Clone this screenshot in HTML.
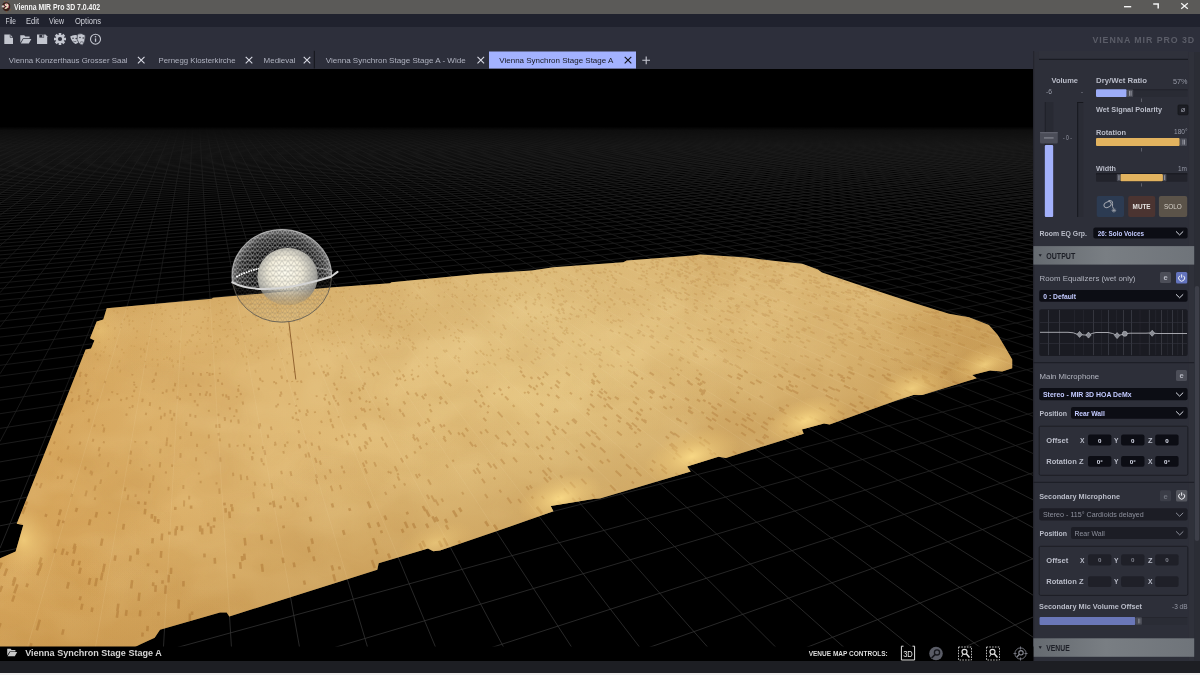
<!DOCTYPE html>
<html><head><meta charset="utf-8"><title>Vienna MIR Pro 3D</title>
<style>
*{box-sizing:border-box;margin:0;padding:0}
html,body{width:1200px;height:675px;overflow:hidden;background:#000}
body{font-family:"Liberation Sans",sans-serif;position:relative;color:#c9ccd6}
.abs{position:absolute}
.t{position:absolute;white-space:nowrap;line-height:1}
#titlebar{left:0;top:0;width:1200px;height:14px;background:#5b5a58}
#menubar{left:0;top:14px;width:1200px;height:12.8px;background:#20222e}
#toolbar{left:0;top:26.8px;width:1200px;height:25.7px;background:#2d2f3b}
#tabbar{left:0;top:52px;width:1034px;height:16.5px;background:#2d2f3b}
#panel{left:1033.4px;top:52px;width:166.6px;height:608.5px;background:#2d2f39}
#bottombar{left:0;top:660.5px;width:1200px;height:12.5px;background:#1d1e23}
#bottomline{left:0;top:673px;width:1200px;height:2px;background:#f0f0f0}
.lbl{font-size:7.6px;font-weight:bold;color:#b9bcc8}
.dd{position:absolute;background:#0c0d14;border-radius:2px}
.dd .t{font-size:7.4px;font-weight:bold;color:#c3caff;top:3px}
.fld{position:absolute;background:#0c0d14;border-radius:2px;width:23.3px;height:11.2px;font-size:7px;font-weight:bold;color:#dfe2f0;text-align:center;line-height:11.5px}
.hdr{position:absolute;left:1033.4px;width:160.6px;height:18.5px;background:linear-gradient(90deg,#686c74,#7b7f86 50%,#72767e)}
.hdr .t{font-size:8.2px;font-weight:bold;color:#1d1f27;left:13px;top:5.8px;letter-spacing:0.2px}
.btn{position:absolute;border-radius:1.5px}
</style></head><body>
<svg id="scene" width="1034" height="592" viewBox="0 68.5 1034 592" style="position:absolute;left:0;top:68.5px">
<defs>
<linearGradient id="fog" x1="0" y1="0" x2="0" y2="1" gradientUnits="userSpaceOnUse" >
</linearGradient>
<linearGradient id="fogg" gradientUnits="userSpaceOnUse" x1="0" y1="120" x2="0" y2="620">
<stop offset="0" stop-color="#000" stop-opacity="1"/><stop offset="0.012" stop-color="#000" stop-opacity="1"/><stop offset="0.02" stop-color="#000" stop-opacity="0.72"/><stop offset="0.05" stop-color="#000" stop-opacity="0.5"/><stop offset="0.09" stop-color="#000" stop-opacity="0.42"/><stop offset="0.16" stop-color="#000" stop-opacity="0.4"/><stop offset="0.36" stop-color="#000" stop-opacity="0.45"/><stop offset="0.52" stop-color="#000" stop-opacity="0.42"/><stop offset="0.68" stop-color="#000" stop-opacity="0.28"/><stop offset="0.84" stop-color="#000" stop-opacity="0.1"/><stop offset="1" stop-color="#000" stop-opacity="0"/>
</linearGradient>
<linearGradient id="wood" gradientUnits="userSpaceOnUse" x1="60" y1="560" x2="980" y2="300">
<stop offset="0" stop-color="#daaa60"/><stop offset="0.25" stop-color="#dfb874"/><stop offset="0.55" stop-color="#e4c584"/><stop offset="0.8" stop-color="#dfbc7a"/><stop offset="1" stop-color="#d6af6a"/>
</linearGradient>
<linearGradient id="edgeB" gradientUnits="userSpaceOnUse" x1="583" y1="502" x2="546" y2="387"><stop offset="0" stop-color="#b07c34" stop-opacity="0.34"/><stop offset="0.5" stop-color="#b07c34" stop-opacity="0.15"/><stop offset="1" stop-color="#b07c34" stop-opacity="0"/></linearGradient>
<linearGradient id="edgeT" gradientUnits="userSpaceOnUse" x1="400" y1="281" x2="406" y2="345"><stop offset="0" stop-color="#b07c34" stop-opacity="0.14"/><stop offset="1" stop-color="#b07c34" stop-opacity="0"/></linearGradient>
<radialGradient id="glow"><stop offset="0" stop-color="#ffe08a" stop-opacity="0.85"/><stop offset="0.5" stop-color="#f6d27e" stop-opacity="0.4"/><stop offset="1" stop-color="#f0c874" stop-opacity="0"/></radialGradient>
<radialGradient id="shade"><stop offset="0" stop-color="#b98338" stop-opacity="0.5"/><stop offset="1" stop-color="#b98338" stop-opacity="0"/></radialGradient>
<filter id="blot" x="0" y="0" width="100%" height="100%" color-interpolation-filters="sRGB"><feTurbulence type="fractalNoise" baseFrequency="0.012 0.02" numOctaves="3" seed="4"/><feColorMatrix type="matrix" values="0 0 0 0 0.62  0 0 0 0 0.38  0 0 0 0 0.12  1.6 0 0 0 -0.62"/></filter>
<filter id="blot2" x="0" y="0" width="100%" height="100%" color-interpolation-filters="sRGB"><feTurbulence type="fractalNoise" baseFrequency="0.02 0.03" numOctaves="2" seed="11"/><feColorMatrix type="matrix" values="0 0 0 0 1  0 0 0 0 0.92  0 0 0 0 0.7  0 1.5 0 0 -0.6"/></filter>
<filter id="soft"><feGaussianBlur stdDeviation="0.5"/></filter>
<clipPath id="fclip"><polygon points="106.7,307.8 211.7,298.3 213.0,297.3 333.3,286.7 390.0,282.7 391.5,281.7 480.0,273.3 531.7,270.0 553.3,266.7 623.3,261.7 626.7,260.0 693.3,255.0 700.0,254.0 746.7,257.0 780.0,261.1 802.2,263.3 817.8,268.9 822.0,272.0 868.9,287.8 913.3,302.2 948.9,313.3 968.9,316.7 988.9,324.4 997.8,334.4 1004.4,345.6 1012.2,358.9 1012.2,367.8 1002.2,371.1 990.0,370.0 972.2,374.4 976.7,377.8 922.2,394.4 913.3,394.4 896.3,400.0 829.6,424.1 824.0,423.0 801.9,428.9 803.7,433.3 725.9,457.4 718.5,456.3 687.0,465.9 690.7,471.1 600.0,498.1 593.4,498.5 550.7,505.4 553.4,510.8 500.0,529.5 440.0,549.9 433.3,550.7 428.0,548.0 378.7,562.7 377.3,569.3 229.3,616.0 226.7,612.0 220.0,612.0 160.0,629.3 154.7,637.3 140.0,644.0 135.0,646.5 0.0,646.5 0.0,557.8 15.6,551.0 23.3,524.4 16.7,523.3 85.6,348.9 91.0,348.0 94.4,340.0 90.0,337.8 96.7,321.0 103.3,318.9"/></clipPath>
<radialGradient id="ball" cx="0.46" cy="0.42" r="0.6"><stop offset="0" stop-color="#fffdf0"/><stop offset="0.45" stop-color="#f3eedc"/><stop offset="0.8" stop-color="#b0afa8"/><stop offset="1" stop-color="#7e7e7c"/></radialGradient>
<radialGradient id="shell" cx="0.5" cy="0.5" r="0.5"><stop offset="0" stop-color="#aaa" stop-opacity="0.0"/><stop offset="0.6" stop-color="#aaa" stop-opacity="0.04"/><stop offset="0.86" stop-color="#bbb" stop-opacity="0.2"/><stop offset="1" stop-color="#ccc" stop-opacity="0.5"/></radialGradient>
<pattern id="mesh3" width="5" height="4.4" patternUnits="userSpaceOnUse"><path d="M0 0L5 0M0 0L2.5 4.4L5 0M0 4.4L5 4.4" stroke="#6e685c" stroke-width="0.5" fill="none"/></pattern>
<linearGradient id="bmg" gradientUnits="userSpaceOnUse" x1="0" y1="287" x2="0" y2="304"><stop offset="0" stop-color="#fff"/><stop offset="1" stop-color="#fff" stop-opacity="0.2"/></linearGradient>
<mask id="ballmask" maskUnits="userSpaceOnUse" x="250" y="240" width="80" height="80"><rect x="250" y="240" width="80" height="80" fill="url(#bmg)"/></mask>
<pattern id="mesh2" width="6" height="5.2" patternUnits="userSpaceOnUse"><path d="M0 0L6 0M0 0L3 5.2L6 0M0 5.2L6 5.2" stroke="#8a8a86" stroke-width="0.6" fill="none"/></pattern>
<pattern id="mesh" width="5" height="4.4" patternUnits="userSpaceOnUse"><path d="M0 0L5 0M0 0L2.5 4.4L5 0M0 4.4L5 4.4" stroke="#fff" stroke-width="0.5" fill="none"/></pattern>
<clipPath id="upclip"><path d="M225 281 L232.3 282 Q 262 296 331 276.5 L345 268 L345 220 L225 220 Z"/></clipPath><clipPath id="loclip"><path d="M225 281 L232.3 282 Q 262 296 331 276.5 L345 268 L345 330 L225 330 Z"/></clipPath><clipPath id="sclip"><ellipse cx="281.8" cy="275.4" rx="49.8" ry="46.3"/></clipPath>
</defs>
<rect x="0" y="60" width="1034" height="610" fill="#000"/>
<path d="M0.0 76.6L196.0 70.0M0.0 76.6L196.0 70.0M0.0 76.6L196.0 70.0M0.0 76.7L196.0 70.0M0.0 76.7L196.0 70.0M0.0 76.7L196.0 70.0M0.0 76.7L196.0 70.0M0.0 76.8L196.0 70.0M0.0 76.8L196.0 70.0M0.0 76.8L196.0 70.0M0.0 76.9L196.0 70.0M0.0 76.9L196.0 70.0M0.0 76.9L196.0 70.0M0.0 76.9L196.0 70.0M0.0 77.0L196.0 70.0M0.0 77.0L196.0 70.0M0.0 77.0L196.0 70.0M0.0 77.1L196.0 70.0M0.0 77.1L196.0 70.0M0.0 77.1L196.0 70.0M0.0 77.1L196.0 70.0M0.0 77.2L196.0 70.0M0.0 77.2L196.0 70.0M0.0 77.2L196.0 70.0M0.0 77.3L196.0 70.0M0.0 77.3L196.0 70.0M0.0 77.3L196.0 70.0M0.0 77.4L196.0 70.0M0.0 77.4L196.0 70.0M0.0 77.4L196.0 70.0M0.0 77.5L196.0 70.0M0.0 77.5L196.0 70.0M0.0 77.5L196.0 70.0M0.0 77.6L196.0 70.0M0.0 77.6L196.0 70.0M0.0 77.6L196.0 70.0M0.0 77.7L196.0 70.0M0.0 77.7L196.0 70.0M0.0 77.7L196.0 70.0M-0.0 77.8L196.0 70.0M0.0 77.8L196.0 70.0M-0.0 77.9L196.0 70.0M-0.0 77.9L196.0 70.0M0.0 77.9L196.0 70.0M0.0 78.0L196.0 70.0M0.0 78.0L196.0 70.0M0.0 78.0L196.0 70.0M0.0 78.1L196.0 70.0M0.0 78.1L196.0 70.0M0.0 78.2L196.0 70.0M0.0 78.2L196.0 70.0M0.0 78.2L196.0 70.0M0.0 78.3L196.0 70.0M0.0 78.3L196.0 70.0M-0.0 78.4L196.0 70.0M-0.0 78.4L196.0 70.0M0.0 78.5L196.0 70.0M-0.0 78.5L196.0 70.0M0.0 78.5L196.0 70.0M0.0 78.6L196.0 70.0M0.0 78.6L196.0 70.0M0.0 78.7L196.0 70.0M0.0 78.7L196.0 70.0M0.0 78.8L196.0 70.0M0.0 78.8L196.0 70.0M0.0 78.9L196.0 70.0M0.0 78.9L196.0 70.0M0.0 79.0L196.0 70.0M0.0 79.0L196.0 70.0M0.0 79.1L196.0 70.0M0.0 79.1L196.0 70.0M0.0 79.2L196.0 70.0M0.0 79.2L196.0 70.0M0.0 79.3L196.0 70.0M0.0 79.3L196.0 70.0M0.0 79.4L196.0 70.0M0.0 79.4L196.0 70.0M0.0 79.5L196.0 70.0M0.0 79.5L196.0 70.0M-0.0 79.6L196.0 70.0M0.0 79.6L196.0 70.0M0.0 79.7L196.0 70.0M0.0 79.7L196.0 70.0M0.0 79.8L196.0 70.0M0.0 79.9L196.0 70.0M0.0 79.9L196.0 70.0M0.0 80.0L196.0 70.0M0.0 80.0L196.0 70.0M-0.0 80.1L196.0 70.0M0.0 80.2L196.0 70.0M0.0 80.2L196.0 70.0M0.0 80.3L196.0 70.0M0.0 80.4L196.0 70.0M0.0 80.4L196.0 70.0M0.0 80.5L196.0 70.0M0.0 80.5L196.0 70.0M0.0 80.6L196.0 70.0M0.0 80.7L196.0 70.0M0.0 80.8L196.0 70.0M0.0 80.8L196.0 70.0M0.0 80.9L196.0 70.0M0.0 81.0L196.0 70.0M0.0 81.0L196.0 70.0M0.0 81.1L196.0 70.0M0.0 81.2L196.0 70.0M-0.0 81.3L196.0 70.0M0.0 81.3L196.0 70.0M0.0 81.4L196.0 70.0M0.0 81.5L196.0 70.0M-0.0 81.6L196.0 70.0M0.0 81.7L196.0 70.0M0.0 81.7L196.0 70.0M0.0 81.8L196.0 70.0M0.0 81.9L196.0 70.0M0.0 82.0L196.0 70.0M0.0 82.1L196.0 70.0M0.0 82.2L196.0 70.0M0.0 82.3L196.0 70.0M0.0 82.4L196.0 70.0M0.0 82.4L196.0 70.0M0.0 82.5L196.0 70.0M0.0 82.6L196.0 70.0M-0.0 82.7L196.0 70.0M0.0 82.8L196.0 70.0M0.0 82.9L196.0 70.0M0.0 83.0L196.0 70.0M0.0 83.1L196.0 70.0M0.0 83.2L196.0 70.0M0.0 83.3L196.0 70.0M0.0 83.5L196.0 70.0M0.0 83.6L196.0 70.0M0.0 83.7L196.0 70.0M0.0 83.8L196.0 70.0M0.0 83.9L196.0 70.0M0.0 84.0L196.0 70.0M0.0 84.1L196.0 70.0M0.0 84.3L196.0 70.0M0.0 84.4L196.0 70.0M0.0 84.5L196.0 70.0M0.0 84.6L196.0 70.0M-0.0 84.8L196.0 70.0M0.0 84.9L196.0 70.0M0.0 85.0L196.0 70.0M0.0 85.2L196.0 70.0M0.0 85.3L196.0 70.0M0.0 85.5L196.0 70.0M0.0 85.6L196.0 70.0M0.0 85.8L196.0 70.0M0.0 85.9L196.0 70.0M0.0 86.1L196.0 70.0M0.0 86.2L196.0 70.0M0.0 86.4L196.0 70.0M0.0 86.5L196.0 70.0M-0.0 86.7L196.0 70.0M0.0 86.9L196.0 70.0M0.0 87.0L196.0 70.0M-0.0 87.2L196.0 70.0M-0.0 87.4L196.0 70.0M-0.0 87.6L196.0 70.0M0.0 87.8L196.0 70.0M-0.0 88.0L196.0 70.0M0.0 88.2L196.0 70.0M0.0 88.4L196.0 70.0M0.0 88.6L196.0 70.0M0.0 88.8L196.0 70.0M0.0 89.0L196.0 70.0M0.0 89.2L196.0 70.0M0.0 89.4L196.0 70.0M0.0 89.7L196.0 70.0M0.0 89.9L196.0 70.0M0.0 90.1L196.0 70.0M0.0 90.4L196.0 70.0M0.0 90.6L196.0 70.0M0.0 90.9L196.0 70.0M0.0 91.2L196.0 70.0M0.0 91.4L196.0 70.0M0.0 91.7L196.0 70.0M0.0 92.0L196.0 70.0M0.0 92.3L196.0 70.0M0.0 92.6L196.0 70.0M0.0 92.9L196.0 70.0M0.0 93.2L196.0 70.0M0.0 93.6L196.0 70.0M0.0 93.9L196.0 70.0M0.0 94.3L196.0 70.0M0.0 94.6L196.0 70.0M0.0 95.0L196.0 70.0M0.0 95.4L196.0 70.0M0.0 95.8L196.0 70.0M0.0 96.2L196.0 70.0M0.0 96.6L196.0 70.0M0.0 97.0L196.0 70.0M0.0 97.5L196.0 70.0M0.0 97.9L196.0 70.0M0.0 98.4L196.0 70.0M0.0 98.9L196.0 70.0M0.0 99.4L196.0 70.0M0.0 99.9L196.0 70.0M0.0 100.5L196.0 70.0M0.0 101.1L196.0 70.0M0.0 101.7L196.0 70.0M0.0 102.3L196.0 70.0M0.0 102.9L196.0 70.0M0.0 103.6L196.0 70.0M0.0 104.3L196.0 70.0M0.0 105.0L196.0 70.0M0.0 105.7L196.0 70.0M0.0 106.5L196.0 70.0M0.0 107.4L196.0 70.0M0.0 108.2L196.0 70.0M0.0 109.1L196.0 70.0M0.0 110.1L196.0 70.0M0.0 111.0L196.0 70.0M0.0 112.1L196.0 70.0M0.0 113.2L196.0 70.0M0.0 114.3L196.0 70.0M0.0 115.5L196.0 70.0M0.0 116.8L196.0 70.0M0.0 118.2L196.0 70.0M0.0 119.6L196.0 70.0M0.0 121.2L196.0 70.0M0.0 122.8L196.0 70.0M0.0 124.5L196.0 70.0M0.0 126.4L196.0 70.0M196.0 70.0L0.0 128.3M196.0 70.0L0.0 130.5M196.0 70.0L0.0 132.7M196.0 70.0L0.0 135.2M196.0 70.0L0.0 137.9M196.0 70.0L0.0 140.8M196.0 70.0L0.0 143.9M196.0 70.0L0.0 147.3M196.0 70.0L0.0 151.1M196.0 70.0L-0.0 155.3M196.0 70.0L0.0 159.9M196.0 70.0L0.0 165.1M196.0 70.0L0.0 170.8M196.0 70.0L0.0 177.3M196.0 70.0L0.0 184.7M196.0 70.0L0.0 193.3M196.0 70.0L0.0 203.1M196.0 70.0L0.0 214.7M196.0 70.0L0.0 228.5M196.0 70.0L0.0 245.3M196.0 70.0L0.0 265.9M196.0 70.0L0.0 292.2M196.0 70.0L0.0 326.4M196.0 70.0L0.0 373.3M196.0 70.0L0.0 441.0M196.0 70.0L0.0 547.6M196.0 70.0L23.3 660.5M196.0 70.0L93.0 660.5M196.0 70.0L162.7 660.5M196.0 70.0L232.3 660.5M196.0 70.0L302.0 660.5M196.0 70.0L371.7 660.5M196.0 70.0L441.3 660.5M196.0 70.0L511.0 660.5M196.0 70.0L580.7 660.5M196.0 70.0L650.3 660.5M196.0 70.0L720.0 660.5M196.0 70.0L789.7 660.5M196.0 70.0L859.3 660.5M196.0 70.0L929.0 660.5M196.0 70.0L998.7 660.5M196.0 70.0L1033.4 636.9M196.0 70.0L1033.4 594.9M196.0 70.0L1033.4 558.8M196.0 70.0L1033.4 527.3M196.0 70.0L1033.4 499.6M196.0 70.0L1033.4 475.1M196.0 70.0L1033.4 453.2M196.0 70.0L1033.4 433.6M196.0 70.0L1033.4 415.9M196.0 70.0L1033.4 399.8M196.0 70.0L1033.4 385.2M196.0 70.0L1033.4 371.8M196.0 70.0L1033.4 359.5M196.0 70.0L1033.4 348.1M196.0 70.0L1033.4 337.6M196.0 70.0L1033.4 327.9M196.0 70.0L1033.4 318.9M196.0 70.0L1033.4 310.4M196.0 70.0L1033.4 302.6M196.0 70.0L1033.4 295.2M196.0 70.0L1033.4 288.3M196.0 70.0L1033.4 281.7M196.0 70.0L1033.4 275.6M196.0 70.0L1033.4 269.8M196.0 70.0L1033.4 264.3M196.0 70.0L1033.4 259.2M196.0 70.0L1033.4 254.3M196.0 70.0L1033.4 249.6M196.0 70.0L1033.4 245.2M196.0 70.0L1033.4 240.9M196.0 70.0L1033.4 236.9M196.0 70.0L1033.4 233.1M196.0 70.0L1033.4 229.4M196.0 70.0L1033.4 225.9M196.0 70.0L1033.4 222.6M196.0 70.0L1033.4 219.4M196.0 70.0L1033.4 216.3M196.0 70.0L1033.4 213.3M196.0 70.0L1033.4 210.5M196.0 70.0L1033.4 207.8M196.0 70.0L1033.4 205.1M196.0 70.0L1033.4 202.6M196.0 70.0L1033.4 200.2M196.0 70.0L1033.4 197.8M196.0 70.0L1033.4 195.6M196.0 70.0L1033.4 193.4M196.0 70.0L1033.4 191.3M196.0 70.0L1033.4 189.2M196.0 70.0L1033.4 187.3M196.0 70.0L1033.4 185.4M196.0 70.0L1033.4 183.5M196.0 70.0L1033.4 181.7M196.0 70.0L1033.4 180.0M196.0 70.0L1033.4 178.3M196.0 70.0L1033.4 176.7M196.0 70.0L1033.4 175.1M196.0 70.0L1033.4 173.6M196.0 70.0L1033.4 172.1M196.0 70.0L1033.4 170.6M196.0 70.0L1033.4 169.2M196.0 70.0L1033.4 167.9M196.0 70.0L1033.4 166.5M196.0 70.0L1033.4 165.2M196.0 70.0L1033.4 164.0M196.0 70.0L1033.4 162.8M196.0 70.0L1033.4 161.6M196.0 70.0L1033.4 160.4M196.0 70.0L1033.4 159.3M196.0 70.0L1033.4 158.1M196.0 70.0L1033.4 157.1M196.0 70.0L1033.4 156.0M196.0 70.0L1033.4 155.0M196.0 70.0L1033.4 154.0M196.0 70.0L1033.4 153.0M196.0 70.0L1033.4 152.0M196.0 70.0L1033.4 151.1M196.0 70.0L1033.4 150.2M196.0 70.0L1033.4 149.3M196.0 70.0L1033.4 148.4M196.0 70.0L1033.4 147.6M196.0 70.0L1033.4 146.7M196.0 70.0L1033.4 145.9M196.0 70.0L1033.4 145.1M196.0 70.0L1033.4 144.3M196.0 70.0L1033.4 143.5M196.0 70.0L1033.4 142.8M196.0 70.0L1033.4 142.0M196.0 70.0L1033.4 141.3M196.0 70.0L1033.4 140.6M196.0 70.0L1033.4 139.9M196.0 70.0L1033.4 139.2M196.0 70.0L1033.4 138.6M196.0 70.0L1033.4 137.9M196.0 70.0L1033.4 137.3M196.0 70.0L1033.4 136.6M196.0 70.0L1033.4 136.0M196.0 70.0L1033.4 135.4M196.0 70.0L1033.4 134.8M196.0 70.0L1033.4 134.2M196.0 70.0L1033.4 133.6M196.0 70.0L1033.4 133.1M196.0 70.0L1033.4 132.5M196.0 70.0L1033.4 132.0M196.0 70.0L1033.4 131.4M196.0 70.0L1033.4 130.9M196.0 70.0L1033.4 130.4M196.0 70.0L1033.4 129.9M196.0 70.0L1033.4 129.4M196.0 70.0L1033.4 128.9M196.0 70.0L1033.4 128.4M196.0 70.0L1033.4 127.9M196.0 70.0L1033.4 127.5M196.0 70.0L1033.4 127.0M196.0 70.0L1033.4 126.5M196.0 70.0L1033.4 126.1M196.0 70.0L1033.4 125.7M196.0 70.0L1033.4 125.2M196.0 70.0L1033.4 124.8M196.0 70.0L1033.4 124.4M196.0 70.0L1033.4 124.0M196.0 70.0L1033.4 123.6M196.0 70.0L1033.4 123.2M196.0 70.0L1033.4 122.8M196.0 70.0L1033.4 122.4M196.0 70.0L1033.4 122.0M196.0 70.0L1033.4 121.6M196.0 70.0L1033.4 121.2M196.0 70.0L1033.4 120.9M196.0 70.0L1033.4 120.5M196.0 70.0L1033.4 120.2M196.0 70.0L1033.4 119.8M196.0 70.0L1033.4 119.5M196.0 70.0L1033.4 119.1M196.0 70.0L1033.4 118.8M196.0 70.0L1033.4 118.4M196.0 70.0L1033.4 118.1M196.0 70.0L1033.4 117.8M196.0 70.0L1033.4 117.5M196.0 70.0L1033.4 117.2M196.0 70.0L1033.4 116.8M196.0 70.0L1033.4 116.5M196.0 70.0L1033.4 116.2M196.0 70.0L1033.4 115.9M196.0 70.0L1033.4 115.6M196.0 70.0L1033.4 115.3M196.0 70.0L1033.4 115.1M196.0 70.0L1033.4 114.8M196.0 70.0L1033.4 114.5M196.0 70.0L1033.4 114.2M196.0 70.0L1033.4 113.9M196.0 70.0L1033.4 113.7M196.0 70.0L1033.4 113.4M196.0 70.0L1033.4 113.1M196.0 70.0L1033.4 112.9M196.0 70.0L1033.4 112.6M196.0 70.0L1033.4 112.4M196.0 70.0L1033.4 112.1M196.0 70.0L1033.4 111.9M196.0 70.0L1033.4 111.6M196.0 70.0L1033.4 111.4M196.0 70.0L1033.4 111.1M196.0 70.0L1033.4 110.9M196.0 70.0L1033.4 110.7M196.0 70.0L1033.4 110.4M196.0 70.0L1033.4 110.2M196.0 70.0L1033.4 110.0M196.0 70.0L1033.4 109.8M196.0 70.0L1033.4 109.5M196.0 70.0L1033.4 109.3M196.0 70.0L1033.4 109.1M196.0 70.0L1033.4 108.9M196.0 70.0L1033.4 108.7M196.0 70.0L1033.4 108.5M196.0 70.0L1033.4 108.3M196.0 70.0L1033.4 108.1M196.0 70.0L1033.4 107.9M196.0 70.0L1033.4 107.7M196.0 70.0L1033.4 107.5M196.0 70.0L1033.4 107.3M196.0 70.0L1033.4 107.1M196.0 70.0L1033.4 106.9M196.0 70.0L1033.4 106.7M196.0 70.0L1033.4 106.5M196.0 70.0L1033.4 106.3M196.0 70.0L1033.4 106.1M196.0 70.0L1033.4 105.9M196.0 70.0L1033.4 105.8M196.0 70.0L1033.4 105.6M196.0 70.0L1033.4 105.4M196.0 70.0L1033.4 105.2M196.0 70.0L1033.4 105.0M196.0 70.0L1033.4 104.9M196.0 70.0L1033.4 104.7M196.0 70.0L1033.4 104.5M196.0 70.0L1033.4 104.4M196.0 70.0L1033.4 104.2M196.0 70.0L1033.4 104.0M196.0 70.0L1033.4 103.9M196.0 70.0L1033.4 103.7M196.0 70.0L1033.4 103.6M196.0 70.0L1033.4 103.4M196.0 70.0L1033.4 103.2M196.0 70.0L1033.4 103.1M196.0 70.0L1033.4 102.9M196.0 70.0L1033.4 102.8M196.0 70.0L1033.4 102.6M196.0 70.0L1033.4 102.5M196.0 70.0L1033.4 102.3M196.0 70.0L1033.4 102.2M196.0 70.0L1033.4 102.0M196.0 70.0L1033.4 101.9M196.0 70.0L1033.4 101.8M196.0 70.0L1033.4 101.6M196.0 70.0L1033.4 101.5M196.0 70.0L1033.4 101.3M196.0 70.0L1033.4 101.2M196.0 70.0L1033.4 101.1M196.0 70.0L1033.4 100.9M196.0 70.0L1033.4 100.8M196.0 70.0L1033.4 100.7M196.0 70.0L1033.4 100.5M196.0 70.0L1033.4 100.4M196.0 70.0L1033.4 100.3M196.0 70.0L1033.4 100.1M196.0 70.0L1033.4 100.0M196.0 70.0L1033.4 99.9M196.0 70.0L1033.4 99.8M196.0 70.0L1033.4 99.6M196.0 70.0L1033.4 99.5M196.0 70.0L1033.4 99.4M196.0 70.0L1033.4 99.3M196.0 70.0L1033.4 99.1M196.0 70.0L1033.4 99.0M196.0 70.0L1033.4 98.9M196.0 70.0L1033.4 98.8M196.0 70.0L1033.4 98.7M196.0 70.0L1033.4 98.6M196.0 70.0L1033.4 98.4M196.0 70.0L1033.4 98.3M196.0 70.0L1033.4 98.2M196.0 70.0L1033.4 98.1M196.0 70.0L1033.4 98.0M196.0 70.0L1033.4 97.9M196.0 70.0L1033.4 97.8M196.0 70.0L1033.4 97.7M196.0 70.0L1033.4 97.6M196.0 70.0L1033.4 97.5M196.0 70.0L1033.4 97.3M196.0 70.0L1033.4 97.2M196.0 70.0L1033.4 97.1M196.0 70.0L1033.4 97.0M196.0 70.0L1033.4 96.9M196.0 70.0L1033.4 96.8M196.0 70.0L1033.4 96.7M196.0 70.0L1033.4 96.6M196.0 70.0L1033.4 96.5M196.0 70.0L1033.4 96.4M196.0 70.0L1033.4 96.3M196.0 70.0L1033.4 96.2M196.0 70.0L1033.4 96.1M196.0 70.0L1033.4 96.0M196.0 70.0L1033.4 96.0M196.0 70.0L1033.4 95.9M196.0 70.0L1033.4 95.8M196.0 70.0L1033.4 95.7M196.0 70.0L1033.4 95.6M196.0 70.0L1033.4 95.5M196.0 70.0L1033.4 95.4M196.0 70.0L1033.4 95.3M196.0 70.0L1033.4 95.2M196.0 70.0L1033.4 95.1M196.0 70.0L1033.4 95.0M196.0 70.0L1033.4 94.9M196.0 70.0L1033.4 94.9M196.0 70.0L1033.4 94.8M196.0 70.0L1033.4 94.7M196.0 70.0L1033.4 94.6M196.0 70.0L1033.4 94.5M196.0 70.0L1033.4 94.4M196.0 70.0L1033.4 94.3M196.0 70.0L1033.4 94.3M196.0 70.0L1033.4 94.2M196.0 70.0L1033.4 94.1M196.0 70.0L1033.4 94.0M196.0 70.0L1033.4 93.9M196.0 70.0L1033.4 93.9M196.0 70.0L1033.4 93.8M196.0 70.0L1033.4 93.7M196.0 70.0L1033.4 93.6M196.0 70.0L1033.4 93.5M196.0 70.0L1033.4 93.5M196.0 70.0L1033.4 93.4M196.0 70.0L1033.4 93.3M196.0 70.0L1033.4 93.2M196.0 70.0L1033.4 93.2M196.0 70.0L1033.4 93.1M196.0 70.0L1033.4 93.0M196.0 70.0L1033.4 92.9M196.0 70.0L1033.4 92.9M196.0 70.0L1033.4 92.8M196.0 70.0L1033.4 92.7M196.0 70.0L1033.4 92.6M196.0 70.0L1033.4 92.6M196.0 70.0L1033.4 92.5M196.0 70.0L1033.4 92.4M196.0 70.0L1033.4 92.4M196.0 70.0L1033.4 92.3M196.0 70.0L1033.4 92.2M196.0 70.0L1033.4 92.1M196.0 70.0L1033.4 92.1M196.0 70.0L1033.4 92.0M196.0 70.0L1033.4 91.9M196.0 70.0L1033.4 91.9M196.0 70.0L1033.4 91.8M196.0 70.0L1033.4 91.7M196.0 70.0L1033.4 91.7M196.0 70.0L1033.4 91.6M196.0 70.0L1033.4 91.5M196.0 70.0L1033.4 91.5M196.0 70.0L1033.4 91.4M196.0 70.0L1033.4 91.3M196.0 70.0L1033.4 91.3M196.0 70.0L1033.4 91.2M196.0 70.0L1033.4 91.2M196.0 70.0L1033.4 91.1M196.0 70.0L1033.4 91.0M196.0 70.0L1033.4 91.0M196.0 70.0L1033.4 90.9M196.0 70.0L1033.4 90.8M196.0 70.0L1033.4 90.8M196.0 70.0L1033.4 90.7M196.0 70.0L1033.4 90.7M196.0 70.0L1033.4 90.6M196.0 70.0L1033.4 90.5M196.0 70.0L1033.4 90.5M196.0 70.0L1033.4 90.4M196.0 70.0L1033.4 90.4M196.0 70.0L1033.4 90.3M196.0 70.0L1033.4 90.2M196.0 70.0L1033.4 90.2M196.0 70.0L1033.4 90.1M196.0 70.0L1033.4 90.1M196.0 70.0L1033.4 90.0M196.0 70.0L1033.4 90.0M196.0 70.0L1033.4 89.9M196.0 70.0L1033.4 89.9M196.0 70.0L1033.4 89.8M196.0 70.0L1033.4 89.7M196.0 70.0L1033.4 89.7M196.0 70.0L1033.4 89.6M196.0 70.0L1033.4 89.6M196.0 70.0L1033.4 89.5M196.0 70.0L1033.4 89.5M196.0 70.0L1033.4 89.4M196.0 70.0L1033.4 89.4M196.0 70.0L1033.4 89.3M196.0 70.0L1033.4 89.3M196.0 70.0L1033.4 89.2M196.0 70.0L1033.4 89.2M196.0 70.0L1033.4 89.1M196.0 70.0L1033.4 89.1M196.0 70.0L1033.4 89.0M196.0 70.0L1033.4 89.0M196.0 70.0L1033.4 88.9M196.0 70.0L1033.4 88.9M196.0 70.0L1033.4 88.8M196.0 70.0L1033.4 88.8M196.0 70.0L1033.4 88.7M196.0 70.0L1033.4 88.7M196.0 70.0L1033.4 88.6M196.0 70.0L1033.4 88.6M196.0 70.0L1033.4 88.5M196.0 70.0L1033.4 88.5M196.0 70.0L1033.4 88.4M196.0 70.0L1033.4 88.4M196.0 70.0L1033.4 88.3M196.0 70.0L1033.4 88.3M196.0 70.0L1033.4 88.2M196.0 70.0L1033.4 88.2M196.0 70.0L1033.4 88.1M196.0 70.0L1033.4 88.1M196.0 70.0L1033.4 88.0M196.0 70.0L1033.4 88.0M196.0 70.0L1033.4 87.9M196.0 70.0L1033.4 87.9M196.0 70.0L1033.4 87.9M196.0 70.0L1033.4 87.8M196.0 70.0L1033.4 87.8M196.0 70.0L1033.4 87.7M196.0 70.0L1033.4 87.7M196.0 70.0L1033.4 87.6M196.0 70.0L1033.4 87.6M196.0 70.0L1033.4 87.5M196.0 70.0L1033.4 87.5M196.0 70.0L1033.4 87.5M1033.4 81.1L0.0 90.3M1033.4 81.1L0.0 90.3M1033.4 81.1L0.0 90.4M1033.4 81.2L0.0 90.4M1033.4 81.2L0.0 90.5M1033.4 81.2L0.0 90.5M1033.4 81.3L0.0 90.6M1033.4 81.3L0.0 90.6M1033.4 81.3L0.0 90.7M1033.4 81.3L0.0 90.7M1033.4 81.4L0.0 90.8M1033.4 81.4L0.0 90.8M1033.4 81.4L0.0 90.9M1033.4 81.5L0.0 90.9M1033.4 81.5L0.0 91.0M1033.4 81.5L0.0 91.0M1033.4 81.5L0.0 91.1M1033.4 81.6L0.0 91.2M1033.4 81.6L0.0 91.2M1033.4 81.6L0.0 91.3M1033.4 81.7L0.0 91.3M1033.4 81.7L0.0 91.4M1033.4 81.7L0.0 91.4M1033.4 81.7L0.0 91.5M1033.4 81.8L0.0 91.5M1033.4 81.8L0.0 91.6M1033.4 81.8L0.0 91.6M1033.4 81.9L0.0 91.7M1033.4 81.9L0.0 91.8M1033.4 81.9L0.0 91.8M1033.4 82.0L0.0 91.9M1033.4 82.0L0.0 91.9M1033.4 82.0L0.0 92.0M1033.4 82.1L0.0 92.0M1033.4 82.1L0.0 92.1M1033.4 82.1L0.0 92.2M1033.4 82.2L0.0 92.2M1033.4 82.2L0.0 92.3M1033.4 82.2L0.0 92.3M1033.4 82.2L0.0 92.4M1033.4 82.3L0.0 92.5M1033.4 82.3L0.0 92.5M1033.4 82.3L0.0 92.6M1033.4 82.4L0.0 92.6M1033.4 82.4L0.0 92.7M1033.4 82.4L0.0 92.8M1033.4 82.5L0.0 92.8M1033.4 82.5L0.0 92.9M1033.4 82.6L0.0 93.0M1033.4 82.6L0.0 93.0M1033.4 82.6L0.0 93.1M1033.4 82.7L0.0 93.1M1033.4 82.7L0.0 93.2M1033.4 82.7L0.0 93.3M1033.4 82.8L0.0 93.3M1033.4 82.8L0.0 93.4M1033.4 82.8L0.0 93.5M1033.4 82.9L0.0 93.5M1033.4 82.9L0.0 93.6M1033.4 82.9L0.0 93.7M1033.4 83.0L0.0 93.7M1033.4 83.0L0.0 93.8M1033.4 83.1L0.0 93.9M1033.4 83.1L0.0 93.9M1033.4 83.1L0.0 94.0M1033.4 83.2L0.0 94.1M1033.4 83.2L0.0 94.1M1033.4 83.2L0.0 94.2M1033.4 83.3L0.0 94.3M1033.4 83.3L0.0 94.4M1033.4 83.4L0.0 94.4M1033.4 83.4L0.0 94.5M1033.4 83.4L0.0 94.6M1033.4 83.5L0.0 94.6M1033.4 83.5L0.0 94.7M1033.4 83.6L0.0 94.8M1033.4 83.6L0.0 94.9M1033.4 83.6L0.0 94.9M1033.4 83.7L0.0 95.0M1033.4 83.7L0.0 95.1M1033.4 83.8L0.0 95.2M1033.4 83.8L0.0 95.2M1033.4 83.8L0.0 95.3M1033.4 83.9L0.0 95.4M1033.4 83.9L0.0 95.5M1033.4 84.0L0.0 95.6M1033.4 84.0L0.0 95.6M1033.4 84.1L0.0 95.7M1033.4 84.1L0.0 95.8M1033.4 84.1L0.0 95.9M1033.4 84.2L0.0 95.9M1033.4 84.2L0.0 96.0M1033.4 84.3L0.0 96.1M1033.4 84.3L0.0 96.2M1033.4 84.4L0.0 96.3M1033.4 84.4L0.0 96.4M1033.4 84.5L0.0 96.4M1033.4 84.5L0.0 96.5M1033.4 84.5L0.0 96.6M1033.4 84.6L0.0 96.7M1033.4 84.6L0.0 96.8M1033.4 84.7L0.0 96.9M1033.4 84.7L0.0 96.9M1033.4 84.8L0.0 97.0M1033.4 84.8L0.0 97.1M1033.4 84.9L0.0 97.2M1033.4 84.9L0.0 97.3M1033.4 85.0L0.0 97.4M1033.4 85.0L0.0 97.5M1033.4 85.1L0.0 97.6M1033.4 85.1L0.0 97.7M1033.4 85.2L0.0 97.8M1033.4 85.2L0.0 97.8M1033.4 85.3L0.0 97.9M1033.4 85.3L0.0 98.0M1033.4 85.4L0.0 98.1M1033.4 85.4L0.0 98.2M1033.4 85.5L0.0 98.3M1033.4 85.5L0.0 98.4M1033.4 85.6L0.0 98.5M1033.4 85.6L0.0 98.6M1033.4 85.7L0.0 98.7M1033.4 85.7L0.0 98.8M1033.4 85.8L0.0 98.9M1033.4 85.9L0.0 99.0M1033.4 85.9L0.0 99.1M1033.4 86.0L0.0 99.2M1033.4 86.0L0.0 99.3M1033.4 86.1L0.0 99.4M1033.4 86.1L0.0 99.5M1033.4 86.2L0.0 99.6M1033.4 86.3L0.0 99.7M1033.4 86.3L0.0 99.8M1033.4 86.4L0.0 99.9M1033.4 86.4L0.0 100.0M1033.4 86.5L0.0 100.2M1033.4 86.5L0.0 100.3M1033.4 86.6L0.0 100.4M1033.4 86.7L0.0 100.5M1033.4 86.7L0.0 100.6M1033.4 86.8L0.0 100.7M1033.4 86.9L0.0 100.8M1033.4 86.9L0.0 100.9M1033.4 87.0L0.0 101.1M1033.4 87.0L0.0 101.2M1033.4 87.1L0.0 101.3M1033.4 87.2L0.0 101.4M1033.4 87.2L0.0 101.5M1033.4 87.3L0.0 101.6M1033.4 87.4L0.0 101.8M1033.4 87.4L0.0 101.9M1033.4 87.5L0.0 102.0M1033.4 87.6L0.0 102.1M1033.4 87.6L0.0 102.2M1033.4 87.7L0.0 102.4M1033.4 87.8L0.0 102.5M1033.4 87.8L0.0 102.6M1033.4 87.9L0.0 102.8M1033.4 88.0L0.0 102.9M1033.4 88.0L0.0 103.0M1033.4 88.1L0.0 103.1M1033.4 88.2L0.0 103.3M1033.4 88.3L0.0 103.4M1033.4 88.3L0.0 103.5M1033.4 88.4L0.0 103.7M1033.4 88.5L0.0 103.8M1033.4 88.6L0.0 104.0M1033.4 88.6L0.0 104.1M1033.4 88.7L0.0 104.2M1033.4 88.8L0.0 104.4M1033.4 88.9L0.0 104.5M1033.4 88.9L0.0 104.7M1033.4 89.0L0.0 104.8M1033.4 89.1L0.0 104.9M1033.4 89.2L0.0 105.1M1033.4 89.3L0.0 105.2M1033.4 89.3L0.0 105.4M1033.4 89.4L0.0 105.5M1033.4 89.5L0.0 105.7M1033.4 89.6L0.0 105.8M1033.4 89.7L0.0 106.0M1033.4 89.8L0.0 106.2M1033.4 89.9L0.0 106.3M1033.4 89.9L0.0 106.5M1033.4 90.0L0.0 106.6M1033.4 90.1L0.0 106.8M1033.4 90.2L0.0 106.9M1033.4 90.3L0.0 107.1M1033.4 90.4L0.0 107.3M1033.4 90.5L0.0 107.4M1033.4 90.6L0.0 107.6M1033.4 90.7L0.0 107.8M1033.4 90.8L0.0 108.0M1033.4 90.8L0.0 108.1M1033.4 90.9L0.0 108.3M1033.4 91.0L0.0 108.5M1033.4 91.1L0.0 108.7M1033.4 91.2L0.0 108.8M1033.4 91.3L0.0 109.0M1033.4 91.4L0.0 109.2M1033.4 91.5L0.0 109.4M1033.4 91.6L0.0 109.6M1033.4 91.7L0.0 109.8M1033.4 91.8L0.0 110.0M1033.4 91.9L0.0 110.1M1033.4 92.1L0.0 110.3M1033.4 92.2L0.0 110.5M1033.4 92.3L0.0 110.7M1033.4 92.4L0.0 110.9M1033.4 92.5L0.0 111.1M1033.4 92.6L0.0 111.3M1033.4 92.7L0.0 111.5M1033.4 92.8L0.0 111.7M1033.4 92.9L0.0 112.0M1033.4 93.1L0.0 112.2M1033.4 93.2L0.0 112.4M1033.4 93.3L0.0 112.6M1033.4 93.4L0.0 112.8M1033.4 93.5L0.0 113.0M1033.4 93.7L0.0 113.3M1033.4 93.8L0.0 113.5M1033.4 93.9L0.0 113.7M1033.4 94.0L0.0 113.9M1033.4 94.1L0.0 114.2M1033.4 94.3L0.0 114.4M1033.4 94.4L0.0 114.6M1033.4 94.5L0.0 114.9M1033.4 94.7L0.0 115.1M1033.4 94.8L0.0 115.4M1033.4 94.9L0.0 115.6M1033.4 95.1L0.0 115.9M1033.4 95.2L0.0 116.1M1033.4 95.4L0.0 116.4M1033.4 95.5L0.0 116.6M1033.4 95.6L0.0 116.9M1033.4 95.8L0.0 117.2M1033.4 95.9L0.0 117.4M1033.4 96.1L0.0 117.7M1033.4 96.2L0.0 118.0M1033.4 96.4L0.0 118.2M1033.4 96.5L0.0 118.5M1033.4 96.7L0.0 118.8M1033.4 96.8L0.0 119.1M1033.4 97.0L0.0 119.4M1033.4 97.2L0.0 119.7M1033.4 97.3L0.0 120.0M1033.4 97.5L0.0 120.3M1033.4 97.7L0.0 120.6M1033.4 97.8L0.0 120.9M1033.4 98.0L0.0 121.2M1033.4 98.2L0.0 121.5M1033.4 98.3L0.0 121.8M1033.4 98.5L0.0 122.2M1033.4 98.7L0.0 122.5M1033.4 98.9L0.0 122.8M1033.4 99.1L0.0 123.2M1033.4 99.2L0.0 123.5M1033.4 99.4L0.0 123.8M1033.4 99.6L0.0 124.2M1033.4 99.8L0.0 124.5M1033.4 100.0L0.0 124.9M1033.4 100.2L0.0 125.3M1033.4 100.4L0.0 125.6M1033.4 100.6L0.0 126.0M1033.4 100.8L0.0 126.4M1033.4 101.0L0.0 126.8M1033.4 101.2L0.0 127.1M1033.4 101.5L0.0 127.5M1033.4 101.7L0.0 127.9M1033.4 101.9L0.0 128.3M1033.4 102.1L0.0 128.8M1033.4 102.3L0.0 129.2M1033.4 102.6L0.0 129.6M1033.4 102.8L0.0 130.0M1033.4 103.1L0.0 130.4M1033.4 103.3L0.0 130.9M1033.4 103.5L0.0 131.3M1033.4 103.8L0.0 131.8M1033.4 104.0L0.0 132.2M1033.4 104.3L0.0 132.7M1033.4 104.5L0.0 133.2M1033.4 104.8L0.0 133.7M1033.4 105.1L0.0 134.2M1033.4 105.4L0.0 134.7M1033.4 105.6L0.0 135.2M1033.4 105.9L0.0 135.7M1033.4 106.2L0.0 136.2M1033.4 106.5L0.0 136.7M1033.4 106.8L0.0 137.3M1033.4 107.1L0.0 137.8M1033.4 107.4L0.0 138.4M1033.4 107.7L0.0 138.9M1033.4 108.0L0.0 139.5M1033.4 108.3L0.0 140.1M1033.4 108.6L0.0 140.7M1033.4 109.0L0.0 141.3M1033.4 109.3L0.0 141.9M1033.4 109.6L0.0 142.5M1033.4 110.0L0.0 143.1M1033.4 110.3L0.0 143.8M1033.4 110.7L0.0 144.4M1033.4 111.1L0.0 145.1M1033.4 111.4L0.0 145.8M1033.4 111.8L0.0 146.5M1033.4 112.2L0.0 147.2M1033.4 112.6L0.0 147.9M1033.4 113.0L0.0 148.6M1033.4 113.4L0.0 149.4M1033.4 113.8L0.0 150.1M1033.4 114.2L0.0 150.9M1033.4 114.7L0.0 151.7M1033.4 115.1L0.0 152.5M1033.4 115.6L0.0 153.3M1033.4 116.0L0.0 154.2M1033.4 116.5L0.0 155.0M1033.4 117.0L0.0 155.9M1033.4 117.5L0.0 156.8M1033.4 118.0L0.0 157.7M1033.4 118.5L0.0 158.6M1033.4 119.0L0.0 159.6M1033.4 119.5L0.0 160.6M1033.4 120.1L0.0 161.5M1033.4 120.6L0.0 162.6M1033.4 121.2L0.0 163.6M1033.4 121.8L0.0 164.7M1033.4 122.3L0.0 165.7M1033.4 122.9L0.0 166.8M1033.4 123.6L0.0 168.0M1033.4 124.2L0.0 169.1M1033.4 124.9L0.0 170.3M1033.4 125.5L0.0 171.5M1033.4 126.2L0.0 172.8M1033.4 126.9L0.0 174.1M1033.4 127.6L0.0 175.4M1033.4 128.4L0.0 176.7M1033.4 129.1L0.0 178.1M1033.4 129.9L0.0 179.5M1033.4 130.7L0.0 181.0M1033.4 131.5L0.0 182.5M1033.4 132.3L0.0 184.0M1033.4 133.2L0.0 185.6M1033.4 134.1L0.0 187.2M1033.4 135.0L0.0 188.9M1033.4 135.9L0.0 190.6M1033.4 136.9L0.0 192.3M1033.4 137.9L0.0 194.2M1033.4 138.9L0.0 196.0M1033.4 140.0L0.0 198.0M1033.4 141.0L0.0 199.9M1033.4 142.2L0.0 202.0M1033.4 143.3L0.0 204.1M1033.4 144.5L0.0 206.3M1033.4 145.8L0.0 208.6M1033.4 147.0L0.0 210.9M1033.4 148.3L0.0 213.3M1033.4 149.7L0.0 215.8M1033.4 151.1L0.0 218.4M1033.4 152.6L0.0 221.1M1033.4 154.1L0.0 223.8M1033.4 155.7L0.0 226.7M1033.4 157.3L0.0 229.7M1033.4 159.0L0.0 232.8M1033.4 160.8L0.0 236.1M1033.4 162.6L0.0 239.4M1033.4 164.5L0.0 242.9M1033.4 166.5L0.0 246.6M1033.4 168.6L0.0 250.4M1033.4 170.8L0.0 254.4M1033.4 173.1L0.0 258.5M1033.4 175.4L0.0 262.9M1033.4 177.9L0.0 267.4M1033.4 180.5L0.0 272.2M1033.4 183.3L0.0 277.2M1033.4 186.2L0.0 282.5M1033.4 189.2L0.0 288.0M1033.4 192.4L0.0 293.8M1033.4 195.7L0.0 300.0M1033.4 199.3L0.0 306.5M1033.4 203.1L0.0 313.4M1033.4 207.0L0.0 320.7M1033.4 211.3L0.0 328.4M1033.4 215.8L0.0 336.6M1033.4 220.6L0.0 345.4M1033.4 225.7L0.0 354.8M1033.4 231.2L0.0 364.8M1033.4 237.1L0.0 375.6M1033.4 243.4L0.0 387.2M1033.4 250.3L0.0 399.7M1033.4 257.7L0.0 413.2M1033.4 265.7L0.0 427.9M1033.4 274.4L0.0 443.9M1033.4 284.0L0.0 461.4M1033.4 294.5L0.0 480.6M1033.4 306.1L0.0 501.8M1033.4 319.0L0.0 525.3M1033.4 333.3L0.0 551.6M1033.4 349.4L0.0 581.0M1033.4 367.6L0.0 614.2M1033.4 388.3L0.0 652.1M1033.4 412.1L128.0 660.5M1033.4 439.7L289.0 660.5M1033.4 472.2L449.9 660.5M1033.4 511.0L610.9 660.5M1033.4 558.1L771.9 660.5M1033.4 616.4L932.8 660.5" stroke="#353535" stroke-width="0.75" fill="none"/>
<rect x="0" y="60" width="1034" height="610" fill="url(#fogg)"/>
<polygon points="106.7,307.8 211.7,298.3 213.0,297.3 333.3,286.7 390.0,282.7 391.5,281.7 480.0,273.3 531.7,270.0 553.3,266.7 623.3,261.7 626.7,260.0 693.3,255.0 700.0,254.0 746.7,257.0 780.0,261.1 802.2,263.3 817.8,268.9 822.0,272.0 868.9,287.8 913.3,302.2 948.9,313.3 968.9,316.7 988.9,324.4 997.8,334.4 1004.4,345.6 1012.2,358.9 1012.2,367.8 1002.2,371.1 990.0,370.0 972.2,374.4 976.7,377.8 922.2,394.4 913.3,394.4 896.3,400.0 829.6,424.1 824.0,423.0 801.9,428.9 803.7,433.3 725.9,457.4 718.5,456.3 687.0,465.9 690.7,471.1 600.0,498.1 593.4,498.5 550.7,505.4 553.4,510.8 500.0,529.5 440.0,549.9 433.3,550.7 428.0,548.0 378.7,562.7 377.3,569.3 229.3,616.0 226.7,612.0 220.0,612.0 160.0,629.3 154.7,637.3 140.0,644.0 135.0,646.5 0.0,646.5 0.0,557.8 15.6,551.0 23.3,524.4 16.7,523.3 85.6,348.9 91.0,348.0 94.4,340.0 90.0,337.8 96.7,321.0 103.3,318.9" fill="url(#wood)"/>
<g clip-path="url(#fclip)">
<rect x="0" y="240" width="1034" height="420" filter="url(#blot)" opacity="0.15"/>
<rect x="0" y="240" width="1034" height="420" filter="url(#blot2)" opacity="0.22"/>
<ellipse cx="520" cy="400" rx="330" ry="90" fill="url(#glow)" opacity="0.1" transform="rotate(-14 520 400)"/>
<rect x="0" y="240" width="1034" height="420" fill="url(#edgeB)"/>
<rect x="0" y="240" width="1034" height="420" fill="url(#edgeT)"/>
<ellipse cx="60" cy="420" rx="130" ry="210" fill="url(#shade)" opacity="0.3"/>
<ellipse cx="40" cy="640" rx="240" ry="90" fill="url(#shade)" opacity="0.12"/>
<ellipse cx="960" cy="330" rx="110" ry="60" fill="url(#shade)" opacity="0.12"/>
<path d="M146.2 412.2L145.8 414.6M129.8 406.5L129.6 407.9M594.1 431.9L596.2 433.8M328.0 410.1L329.5 414.1M200.8 372.5L200.9 375.2M238.7 384.5L238.9 385.8M1008.6 386.2L1014.6 388.5M892.8 439.1L900.9 443.4M89.8 400.0L89.2 401.7M741.2 423.5L747.2 427.5M542.6 469.6L547.4 475.1M323.3 370.5L324.3 372.8M923.0 378.4L929.9 381.3M906.9 417.1L912.4 419.8M788.3 380.4L790.8 381.7M852.3 409.1L859.1 412.7M782.9 423.1L787.5 425.9M259.9 377.3L260.5 380.1M700.9 393.0L703.2 394.5M931.3 391.5L936.6 393.8M700.4 461.2L706.1 465.6M1031.4 379.5L1036.1 381.2M782.5 441.8L789.5 446.2M793.6 373.9L799.7 376.9M251.8 455.7L252.4 459.8M736.5 478.8L743.5 484.1M626.0 463.7L631.3 468.6M116.7 469.9L116.0 473.4M435.6 370.3L438.1 373.3M443.6 435.5L445.3 438.0M693.5 459.3L696.3 461.5M920.0 426.4L925.1 428.9M292.0 380.4L292.3 381.6M333.6 396.2L334.7 398.8M676.4 417.5L681.6 421.2M596.5 379.8L600.2 382.7M404.8 379.3L405.6 380.5M626.3 422.1L631.6 426.4M228.5 395.7L228.8 399.3M62.8 412.4L61.7 415.1M477.6 463.0L478.9 464.8M882.1 374.4L885.2 375.7M829.6 416.2L837.1 420.3M669.6 377.3L671.5 378.5M399.6 377.3L400.9 379.3M358.6 387.4L360.3 390.8M210.1 392.8L210.2 395.6M69.6 385.0L68.3 388.3M633.5 372.5L638.0 375.6M360.9 407.2L362.5 410.4M690.9 473.0L696.3 477.4M866.9 412.5L870.9 414.5M879.6 420.2L883.3 422.1M588.0 466.0L593.1 471.2M966.5 421.8L975.8 426.0M121.3 398.4L120.8 400.6M384.9 442.3L387.3 446.9M930.5 393.4L936.9 396.2M705.4 468.1L712.4 473.6M709.5 452.1L712.7 454.4M522.4 374.2L525.1 376.8M884.4 376.7L890.3 379.3M896.7 436.9L900.4 438.9M641.4 418.6L646.4 422.4M797.1 431.8L801.6 434.5M965.4 397.4L969.0 399.0M359.0 396.1L360.5 399.0M324.7 474.8L326.0 478.9M262.6 445.6L263.1 448.6M412.4 377.7L413.8 379.6M600.0 447.0L605.4 452.1M590.9 429.8L593.9 432.6M70.5 429.2L69.3 432.7M376.9 371.3L378.8 374.4M190.5 392.4L190.5 395.6M264.2 483.0L264.7 485.9M580.2 443.3L584.8 447.7M369.2 436.7L371.3 441.1M104.4 427.1L103.5 430.9M540.9 382.3L543.3 384.5M150.3 482.3L149.7 487.5M591.9 493.4L594.4 496.1M722.8 463.7L729.9 468.9M271.3 482.7L272.3 488.5M859.5 401.3L863.0 403.0M552.2 428.7L554.5 431.0M363.4 407.7L365.4 411.7M324.1 397.2L325.2 400.0M305.9 412.8L306.8 415.5M661.5 468.5L667.0 473.2M773.0 442.9L776.3 445.0M299.1 409.0L299.9 411.7M785.8 385.8L788.8 387.4M603.4 397.5L606.4 399.9M844.0 385.0L849.9 387.8M364.3 382.1L365.4 384.2M870.2 430.6L874.3 432.8M359.0 446.0L361.1 450.9M852.5 387.7L857.2 390.0M314.7 410.9L315.2 412.5M525.3 442.6L529.2 447.0M586.7 412.0L589.4 414.4M975.4 409.7L978.6 411.0M274.0 380.6L274.4 382.5M427.2 417.7L429.7 421.5M298.0 418.8L298.5 420.6M555.0 425.4L558.6 429.0M230.9 419.2L231.1 421.8M914.4 393.7L919.5 396.0M702.0 380.6L705.4 382.7M346.5 440.0L348.4 444.5M424.3 393.6L425.4 395.1M573.1 418.3L576.9 421.8M876.4 412.4L880.2 414.3M779.4 374.8L783.1 376.8M730.6 471.6L733.3 473.6M319.3 431.0L320.2 433.8M547.3 393.5L549.6 395.6M219.3 487.9L219.6 493.4M786.2 387.6L792.1 390.8M537.4 376.5L540.3 379.0M563.9 487.9L568.9 493.5M849.7 403.0L856.3 406.4M662.4 386.0L665.7 388.2M132.6 395.0L132.3 396.6M883.2 411.4L887.8 413.7M446.0 464.1L448.1 467.4M86.8 489.9L85.3 495.7M603.8 404.8L605.8 406.4M783.5 429.6L788.2 432.5M86.4 381.5L85.5 384.0M37.2 482.7L36.2 485.2M364.8 440.8L365.9 443.1M795.1 385.2L797.6 386.6M443.4 424.1L444.8 426.1M466.5 371.1L468.3 373.1M478.0 389.2L480.4 392.0M840.9 379.1L844.8 381.0M845.9 443.2L853.6 447.6M794.8 416.7L801.3 420.4M940.9 371.6L946.6 373.9M428.0 479.1L430.9 484.3M874.2 405.7L878.7 407.9M161.2 415.1L160.8 418.8M315.0 457.2L316.6 462.4M337.5 402.0L338.8 405.1M333.0 394.6L334.5 398.1M284.7 443.6L285.4 446.5M742.1 417.8L746.4 420.6M863.5 428.0L870.2 431.5M887.3 436.5L890.6 438.3M240.6 474.0L241.2 479.6M499.4 489.4L501.3 492.0M316.3 394.9L316.9 396.5M290.4 470.8L291.5 475.4M306.9 409.0L308.0 412.3M125.4 486.8L124.8 490.6M500.8 458.7L504.7 463.6M665.7 435.7L668.8 438.1M305.3 496.2L306.3 500.0M60.7 421.0L59.7 423.8M943.2 370.4L947.5 372.2M390.2 471.1L391.2 473.1M172.2 463.8L172.0 466.4M68.7 445.4L67.4 449.0M641.1 377.4L643.1 378.7M206.8 390.7L206.8 393.1M224.7 416.5L225.0 420.3M236.3 408.6L236.7 412.0M963.4 384.0L970.9 387.1M530.4 376.4L532.5 378.3M777.1 386.1L783.2 389.4M383.0 417.2L384.2 419.5M755.7 439.0L761.2 442.7M344.4 376.3L345.5 378.3M164.8 412.3L164.5 416.0M311.4 442.1L312.3 445.3M86.8 373.4L85.8 376.4M336.3 387.4L337.4 389.8M474.5 399.5L476.9 402.4M628.5 408.0L632.7 411.3M732.4 464.5L737.8 468.5M571.9 419.1L576.2 423.1M590.2 393.6L592.6 395.6M469.8 441.4L473.1 445.8M487.8 462.2L491.5 467.1M544.5 371.6L548.2 374.8M566.6 421.7L569.1 424.1M286.9 379.4L287.6 381.8M378.1 407.6L379.6 410.3M688.2 410.2L692.6 413.3M640.2 408.6L642.8 410.6M197.5 403.3L197.6 405.7M85.8 466.1L84.9 469.2M253.1 451.4L253.4 453.4M418.7 473.3L420.1 475.7M617.0 430.9L621.8 435.0M594.0 497.2L596.9 500.3M439.5 401.7L440.7 403.3M924.3 381.2L931.6 384.4M528.7 384.5L531.7 387.3M393.7 484.4L395.4 487.9M535.7 412.8L539.3 416.5M636.4 471.0L641.4 475.6M868.4 374.1L873.9 376.6M216.5 481.8L216.6 484.0M829.4 373.9L832.9 375.6M785.0 454.7L791.2 458.7M229.7 406.8L230.0 409.1M267.7 434.1L268.3 437.5M608.2 405.2L612.6 408.7M305.3 440.0L306.3 443.0M153.6 474.8L153.0 480.6M839.6 423.8L845.8 427.2M1000.7 380.7L1004.7 382.2M536.4 446.2L538.6 448.7M104.3 428.6L103.4 432.0M149.6 463.7L149.3 466.1M677.2 482.6L680.0 485.0M112.4 390.7L112.0 392.4M399.3 408.6L400.9 411.4M811.6 384.9L818.0 388.2M471.9 371.7L473.7 373.7M325.4 393.8L326.0 395.3M703.5 389.1L705.9 390.7M620.2 453.8L624.6 457.8M485.2 428.8L488.1 432.5M936.6 405.7L943.8 408.9M104.1 440.8L103.6 442.8M703.1 399.3L705.6 400.9M649.6 371.8L653.8 374.6M238.0 388.0L238.5 391.3M578.2 456.0L582.1 459.9M54.9 440.8L53.8 443.5M87.4 399.7L86.2 403.6M362.3 386.6L363.6 389.1M699.7 388.5L704.9 391.8M1026.6 379.2L1033.8 381.9M443.3 437.1L446.0 441.1M439.9 423.7L442.1 426.9M828.7 453.1L833.7 456.0M142.8 398.1L142.2 401.7M779.0 406.8L784.3 409.9M308.3 451.9L309.8 457.0M280.7 390.9L281.6 394.3M842.7 417.3L846.5 419.3M465.4 427.3L468.1 430.8M527.3 391.0L529.4 393.0M134.2 381.2L134.0 382.5M982.9 407.5L988.9 410.1M372.3 372.6L374.2 375.8M778.2 373.7L781.8 375.6M132.8 404.5L132.3 407.3M131.1 450.9L130.6 454.0M615.6 470.2L621.4 475.7M319.7 460.1L321.0 464.2M683.3 440.3L686.2 442.5M767.9 417.2L771.3 419.2M880.5 391.0L888.2 394.6M219.8 372.2L219.9 373.7M707.6 447.9L711.5 450.7M922.0 425.8L930.5 430.0M651.3 491.1L655.3 494.9M439.5 396.5L441.5 399.1M886.7 378.6L891.8 380.9M844.5 452.9L848.8 455.4M744.4 370.4L747.8 372.3M603.9 390.5L607.1 393.0M688.5 406.3L691.4 408.3M284.6 495.8L285.4 500.0M791.9 389.6L798.2 393.0M513.4 439.0L516.2 442.4M636.6 411.4L641.1 414.9M244.0 443.3L244.3 446.2M297.2 397.9L297.7 399.3M283.3 450.5L283.9 453.1M166.8 441.2L166.4 445.7M790.0 430.9L793.5 433.1M699.3 441.4L704.9 445.6M80.5 441.1L79.5 444.2M637.4 427.9L640.8 430.7M671.0 442.9L674.9 446.0M92.5 471.0L91.4 475.0M417.7 422.1L420.1 425.9M635.8 445.3L638.0 447.1M542.7 376.1L544.1 377.3M973.5 397.7L979.1 400.0M417.5 375.2L418.6 376.7M253.2 491.6L254.0 497.9M173.5 388.1L173.3 391.0M550.4 386.7L552.1 388.2M713.5 452.0L716.3 454.0M670.2 431.1L674.7 434.5M435.2 499.0L438.5 504.9M833.2 441.2L838.0 444.0M174.3 412.4L174.1 415.9M218.3 413.2L218.5 415.6M493.6 392.1L495.1 393.7M200.0 392.4L200.0 395.0M200.5 384.9L200.5 386.4M699.3 436.5L701.6 438.1M105.3 380.3L104.6 382.6M462.0 491.4L463.5 493.9M349.2 397.7L351.0 401.5M99.6 446.6L98.6 450.7M673.1 457.2L675.3 459.1M942.6 387.0L949.6 390.0M327.4 371.8L328.7 374.8M160.6 448.2L160.1 452.8M444.1 380.3L446.6 383.4M520.0 370.2L522.2 372.3M556.4 380.1L559.9 383.1M205.6 451.4L205.7 453.3M756.3 472.8L760.0 475.5M617.8 419.7L620.5 421.8M146.6 440.5L146.2 443.6M863.8 405.3L869.1 408.0M590.1 403.3L594.4 407.0M655.7 493.1L661.0 498.0M226.1 393.8L226.5 397.2M263.4 462.4L263.9 464.9M605.3 499.4L611.4 505.9M606.9 497.0L610.1 500.4M557.6 495.7L560.4 499.0M873.9 430.7L880.5 434.2M553.1 431.8L555.7 434.4M220.2 456.9L220.5 461.2M759.7 395.3L763.1 397.3M905.2 426.4L913.1 430.4M487.8 405.0L489.1 406.6M134.5 389.1L134.0 391.6M343.6 470.1L344.6 472.8M994.9 397.0L1000.0 399.1M218.0 378.7L218.2 381.4M305.4 453.3L306.4 456.9M924.7 420.5L932.3 424.1M258.7 423.8L259.5 428.2M543.8 476.8L548.2 481.9M254.6 481.1L255.2 485.0M644.0 419.2L646.3 421.0M190.3 413.3L190.2 416.2M546.2 435.8L550.2 440.1M126.9 396.8L126.4 399.1M873.8 413.1L880.1 416.3M184.2 499.9L184.0 506.0M717.5 403.2L721.6 405.9M238.3 418.8L238.8 423.1M196.1 456.8L196.1 460.7M835.5 388.6L840.0 390.9M569.8 392.0L572.0 393.8M175.2 382.3L174.9 385.8M860.1 417.3L867.0 420.9M928.4 383.0L935.5 386.0M424.7 393.1L426.3 395.3M773.9 455.5L777.4 457.8M911.7 421.1L915.2 422.8M71.6 479.4L70.7 482.2M579.8 397.4L581.6 398.9M498.9 387.8L501.3 390.3M497.8 411.2L499.4 412.9M108.7 461.7L107.6 466.6M198.5 383.1L198.5 386.0M688.6 461.6L693.4 465.4M746.9 416.6L753.5 420.7M607.7 396.2L611.0 398.8M325.5 373.7L326.5 376.1M560.1 474.9L562.4 477.5M328.6 400.8L330.1 404.4M524.2 391.6L525.5 392.9M738.6 455.3L743.5 458.8M677.2 373.4L679.4 374.8M771.8 417.9L774.4 419.5M825.8 394.7L832.8 398.4M706.0 416.7L711.5 420.4M355.1 415.4L356.5 418.5M952.4 381.0L960.6 384.3M633.1 371.1L634.9 372.4M803.1 377.3L805.4 378.4M591.4 378.9L594.9 381.7M151.0 425.8L150.4 430.2M58.3 475.7L57.4 478.3M923.2 417.6L927.4 419.6M72.7 423.7L71.4 427.3M274.8 443.5L275.2 445.2M167.2 436.9L166.9 440.8M400.8 457.5L403.1 461.9M249.8 446.9L250.2 449.9M298.7 443.5L299.9 447.9M289.2 402.7L289.6 404.3M72.2 493.4L71.3 496.5M403.4 400.8L405.4 403.9M809.2 415.9L812.7 417.8M429.1 403.5L430.5 405.5M660.3 463.8L666.6 469.1M128.4 494.2L127.5 499.7M425.9 442.4L427.2 444.5M701.2 411.4L703.9 413.2M281.1 470.2L281.9 473.8M904.5 389.3L912.0 392.8M702.6 468.6L707.9 472.8M717.3 484.3L720.6 486.9M585.8 431.5L590.4 435.7M800.8 416.8L808.0 420.9M493.2 463.4L496.8 468.3M819.1 407.3L825.4 410.7M551.8 446.6L553.8 448.7M513.2 456.9L517.1 461.7M921.9 376.8L925.7 378.4M561.7 428.6L566.3 433.1M421.9 395.2L424.3 398.7M672.1 447.1L677.4 451.2M481.9 478.3L484.9 482.6M186.4 421.5L186.3 425.4M93.5 438.3L92.6 441.3M688.1 409.2L693.2 412.7M903.8 405.5L907.8 407.4M279.9 393.8L280.6 396.3M904.8 380.2L909.3 382.1M703.8 439.1L710.1 443.7M80.9 371.4L79.9 374.0M565.9 371.9L569.9 375.1M480.2 431.0L482.0 433.3M710.7 460.4L715.4 463.9M295.9 404.5L296.4 406.2M396.5 376.9L398.2 379.5M935.7 406.4L939.6 408.2M539.3 454.7L543.4 459.2M900.0 398.1L907.9 401.8M762.6 436.2L765.5 438.1M890.9 379.6L895.4 381.6M837.4 445.0L840.5 446.8M898.8 425.4L903.9 428.0M610.2 484.6L615.7 490.2M533.0 386.9L535.7 389.5M1027.6 402.1L1035.4 405.3M458.1 431.9L459.8 434.3M246.9 475.4L247.5 479.6M381.4 436.4L383.3 440.1M177.6 395.3L177.4 398.4M321.0 420.2L321.9 422.5M570.1 481.6L575.4 487.4M237.5 444.3L237.7 446.1M218.5 432.4L218.7 435.1M388.1 470.5L389.0 472.6M599.0 390.5L602.8 393.5M541.7 495.5L544.1 498.5M275.8 381.7L276.3 383.7M712.1 417.9L716.1 420.6M631.8 422.2L637.1 426.5M222.0 382.2L222.2 384.5M788.7 442.7L794.9 446.6M572.2 497.5L576.6 502.4M725.3 418.2L730.4 421.5M466.1 379.4L467.7 381.2M297.2 380.3L297.7 381.7M657.9 487.2L661.6 490.5M426.9 494.2L429.3 498.6M879.7 422.5L888.3 426.9M261.2 457.8L261.9 461.6M548.7 476.2L551.3 479.2M736.4 391.6L739.1 393.2M134.5 383.3L134.2 385.0M332.0 423.6L333.6 427.6M732.8 450.7L736.4 453.2M160.3 461.5L159.8 467.0M794.4 463.9L802.4 469.1M180.1 397.2L180.0 399.7M298.4 429.7L299.2 432.7M95.7 485.0L94.4 490.3M698.9 372.8L701.9 374.6M501.4 393.3L502.6 394.6M921.9 375.1L927.6 377.5M535.9 384.8L537.6 386.4M840.4 376.1L845.0 378.2M362.8 462.1L364.6 466.4M895.0 424.9L902.7 428.9M884.9 395.4L892.1 398.8M517.1 421.6L519.4 424.0M62.7 474.2L61.3 478.5M440.1 395.8L442.2 398.6M385.0 491.3L386.4 494.4M132.5 373.4L132.1 375.0M756.0 379.5L761.5 382.6M686.3 494.0L689.2 496.5M258.5 387.2L258.9 389.6M549.5 456.9L551.8 459.4M197.1 443.2L197.1 446.6M629.3 426.4L632.5 429.0M270.8 426.0L271.6 429.6M369.7 408.3L370.6 410.0M411.3 373.6L412.2 375.0M429.8 408.7L431.8 411.6M750.2 381.4L754.6 383.8M697.5 382.8L700.7 384.8M683.1 481.1L689.4 486.4M292.2 497.2L293.2 501.6M786.0 404.3L789.0 406.0M412.9 435.9L415.4 440.1M365.2 426.4L366.5 429.1M483.4 417.4L486.2 420.7M512.5 443.1L514.1 445.1M387.0 402.4L388.4 405.0M475.9 370.5L477.3 372.0M397.5 475.9L399.6 480.0M555.1 384.1L559.0 387.6M277.8 403.1L278.2 405.0M676.6 418.2L678.6 419.7M341.4 465.1L342.5 468.1M131.0 450.1L130.3 454.2M242.6 401.0L243.1 404.2M525.1 430.6L528.6 434.4M1001.6 411.5L1006.2 413.5M599.8 459.9L603.2 463.1M90.8 394.5L90.1 396.6M402.5 373.7L404.4 376.6M198.8 472.0L198.9 474.1M638.3 442.8L641.1 445.1M587.1 408.2L589.6 410.3M240.6 392.4L240.9 394.7M652.0 459.7L655.4 462.6M210.6 384.8L210.6 386.0M95.3 496.9L94.7 499.5M630.6 384.7L633.4 386.8M606.9 458.8L609.8 461.6M788.9 383.8L793.6 386.3M365.9 400.0L366.8 401.8M591.4 390.3L593.2 391.7M364.4 444.5L366.2 448.6M405.7 454.7L407.6 458.1M252.3 455.9L252.6 458.5M79.5 394.6L78.7 396.8M837.5 373.5L843.1 376.1M708.3 402.0L710.9 403.7M298.8 443.7L299.7 447.3M518.2 498.5L521.1 502.3M606.4 403.2L609.1 405.3M191.2 431.3L191.1 435.4M364.0 422.6L365.9 426.7M602.9 416.4L606.7 419.6M153.7 388.0L153.6 389.2M591.3 442.4L595.8 446.6M596.0 435.6L600.2 439.4M369.3 400.8L370.1 402.3M779.3 409.5L786.3 413.6M967.4 376.0L971.6 377.7M758.6 440.3L763.8 443.7M97.9 398.3L97.1 401.0M942.1 413.9L949.0 417.1M910.7 411.6L913.7 413.0M493.7 476.8L495.3 479.0M341.5 434.4L342.8 437.6M340.6 375.8L341.5 377.7M501.6 441.6L503.5 443.8M699.2 389.7L704.7 393.2M1031.2 398.4L1036.6 400.5M989.0 381.2L993.8 383.0M419.4 445.3L421.3 448.5M529.5 470.4L531.6 472.9M135.8 493.8L135.4 496.3M834.5 398.1L839.0 400.4M374.1 461.7L376.1 466.1M413.0 433.7L414.3 435.9M746.6 413.4L750.0 415.5M974.6 373.2L979.5 375.1M208.8 434.0L208.9 437.9M675.6 452.3L681.7 457.2M540.9 444.1L543.1 446.4M316.0 478.8L317.5 483.7M685.6 486.0L690.8 490.3M495.3 434.3L498.9 438.7M365.4 459.8L366.9 463.2M130.8 459.2L130.0 463.5M581.4 478.4L586.4 483.6M504.3 442.5L507.3 446.1M79.5 397.0L78.3 400.4M348.4 432.9L349.5 435.4M729.8 398.4L736.0 402.2M537.0 420.9L539.3 423.2M329.6 468.8L330.9 472.8M200.6 480.2L200.7 482.8M431.3 495.1L434.8 501.3M416.5 437.1L418.8 441.0M351.1 391.2L352.2 393.5M333.6 382.1L335.0 385.2M292.4 416.0L293.1 418.6M236.7 395.5L236.9 397.2M294.5 391.2L295.6 394.7M553.7 410.4L555.3 411.9M635.6 417.1L638.5 419.4M658.8 490.0L665.6 496.1M631.8 481.0L633.9 483.0M669.8 405.9L672.2 407.6M763.2 421.4L768.0 424.3M762.6 471.3L766.5 474.1M207.1 371.6L207.1 372.7M432.8 426.0L434.3 428.1M1006.6 401.6L1010.5 403.2M635.3 396.5L638.9 399.2M212.5 372.6L212.6 374.6M364.8 467.8L367.0 473.0M671.4 443.4L677.5 448.1M442.7 374.4L444.2 376.3M604.4 424.1L606.8 426.1M193.0 371.8L193.0 374.2M208.8 409.4L208.9 411.2M415.4 392.1L417.8 395.6M414.3 450.7L415.6 453.0M546.8 420.6L550.9 424.7M634.0 466.9L637.1 469.7M339.8 484.5L341.3 488.8M404.0 482.7L405.3 485.1M1007.9 401.6L1015.2 404.6M650.0 468.0L653.2 470.8M259.7 422.7L260.3 426.1M895.6 392.3L900.7 394.7M811.4 373.6L815.4 375.6M249.8 434.6L250.2 437.2M1009.3 376.2L1016.8 379.0M685.0 397.4L689.1 400.1M648.4 390.0L653.2 393.3M479.6 404.5L481.7 406.9M229.3 443.2L229.6 447.0M547.6 467.1L551.6 471.6M762.7 455.5L765.3 457.3M846.8 376.4L850.9 378.3M209.5 372.3L209.6 375.5M1014.3 390.9L1018.8 392.6M126.7 413.0L126.3 415.2M432.1 428.3L434.5 431.9M961.3 416.6L965.2 418.4M80.4 374.4L79.7 376.3M526.3 485.9L529.0 489.3M748.6 398.2L751.0 399.7M669.4 381.7L674.7 385.1M363.0 384.2L364.0 386.2M794.0 434.3L801.5 438.9M88.8 388.3L87.6 391.8M354.2 433.3L355.7 436.9M616.4 414.2L621.4 418.3M764.2 466.6L770.8 471.2M823.1 388.7L827.4 390.9M732.9 410.8L735.9 412.7M166.0 470.8L165.8 473.2M394.7 465.8L397.2 470.9M87.6 392.4L87.0 394.2M831.5 448.6L835.5 451.1M141.8 467.7L141.5 470.0M474.6 444.2L476.3 446.5M180.4 435.7L180.3 438.7M736.8 376.8L740.6 378.9M591.4 381.3L594.6 383.9M748.2 427.8L755.2 432.3M933.6 431.5L939.2 434.2M614.9 396.3L618.6 399.1M89.4 418.3L88.4 421.6M406.6 391.0L408.7 394.2M189.2 495.2L189.2 499.1M71.8 391.1L71.2 392.6M848.4 371.2L854.4 374.0M951.0 392.9L959.5 396.5M149.2 490.1L148.9 493.1M136.4 386.0L136.2 387.5M662.9 394.6L665.9 396.7M554.5 408.0L558.0 411.2M318.6 445.2L320.0 449.7M688.4 448.0L693.2 451.7M330.5 419.8L331.2 421.6M83.4 409.9L83.0 411.3M330.7 485.1L332.6 490.8M205.8 392.9L205.9 395.5M171.9 417.2L171.7 420.3M711.8 411.7L718.0 415.8M863.2 429.5L871.6 434.0M335.8 437.3L337.0 440.4M555.9 394.7L559.3 397.8M379.3 414.7L380.8 417.6M93.1 401.8L92.2 404.5M798.0 451.7L802.3 454.4M649.7 407.8L651.5 409.2M441.4 498.0L443.2 501.2M154.1 378.4L153.7 381.3M669.5 443.7L673.6 447.0M753.2 412.2L756.1 414.0M222.8 393.3L223.0 395.9M1000.5 385.8L1009.1 389.2M186.1 384.1L186.1 386.5M168.6 486.2L168.4 490.0M156.0 372.0L155.6 375.2M487.1 411.1L488.4 412.6M867.6 432.9L876.1 437.6M216.2 423.9L216.3 427.3M50.9 450.9L49.4 454.7M330.3 418.1L330.9 419.8M825.7 453.7L832.2 457.7M276.1 404.8L276.6 407.0M601.0 388.2L602.6 389.5M979.0 376.0L987.2 379.2M764.0 434.2L768.7 437.2M264.4 449.6L265.3 454.5M166.7 388.9L166.4 392.0M786.5 446.2L792.4 449.9M837.7 410.4L844.3 413.9M741.2 432.0L745.9 435.1M445.0 400.6L447.4 403.7M592.7 372.7L594.3 373.9M674.2 432.7L679.4 436.7M101.2 478.9L100.2 483.4M593.4 374.6L596.3 376.8M287.2 441.1L287.7 443.1M473.3 469.3L476.1 473.3M633.6 381.1L636.8 383.4M415.7 473.6L417.9 477.7M887.0 373.5L890.8 375.2M735.5 423.2L738.1 424.9M482.6 401.6L484.9 404.3M150.2 401.7L149.7 405.5M296.3 418.1L296.8 419.8M687.1 380.1L689.5 381.6M967.3 407.4L975.5 411.0M975.8 395.6L983.1 398.6M711.4 405.7L716.8 409.2M565.6 450.4L569.1 453.9M663.3 406.0L666.8 408.5M91.2 469.9L90.3 473.2M529.6 484.9L532.0 487.9M486.5 385.9L487.7 387.3M912.8 376.8L917.4 378.7M740.6 458.9L748.0 464.2M1031.5 380.5L1039.7 383.5M395.9 383.3L397.1 385.1M275.0 441.2L275.7 444.9M918.4 411.3L923.0 413.5M828.6 386.3L834.8 389.4M536.6 392.8L538.2 394.3M889.2 408.6L896.3 412.0M170.5 409.3L170.2 413.1M313.4 371.5L314.4 374.1M480.6 394.1L482.8 396.6M778.3 450.8L782.0 453.2M364.2 370.8L365.0 372.2M484.9 493.6L487.7 497.6M335.5 399.5L336.1 401.1M814.4 418.0L820.1 421.2M688.0 381.7L692.6 384.7M386.0 397.3L387.3 399.5M476.5 467.4L480.4 473.1M578.8 497.4L580.9 499.7M162.9 391.4L162.6 393.5M295.7 411.4L296.3 413.7M540.2 402.7L543.2 405.5M62.0 458.1L60.7 461.8M616.8 397.4L618.7 398.9M194.8 399.5L194.8 402.1M1017.3 406.6L1026.9 410.5M695.6 377.2L699.9 379.8M72.8 397.7L71.4 401.5M294.0 370.6L294.4 371.9M397.5 472.8L398.5 474.8M675.4 472.4L680.2 476.4M299.6 444.5L300.4 447.2M117.5 392.7L117.1 394.2M829.8 402.8L835.7 405.9M684.7 421.8L687.1 423.5M737.6 386.0L742.8 389.0M375.0 395.9L376.2 398.2M341.4 372.1L342.0 373.2M939.6 376.3L942.6 377.5M452.5 459.2L453.8 461.3M170.7 444.2L170.5 446.3M708.1 425.4L713.4 429.1M300.8 380.0L301.7 382.4M858.3 395.7L863.5 398.3M597.4 394.0L601.7 397.5M219.7 437.9L219.9 440.8M362.8 423.5L364.0 426.0M234.1 414.8L234.3 416.5M103.0 423.9L102.5 425.6M697.0 398.9L700.2 401.1M649.8 396.0L652.2 397.8M109.1 398.3L108.6 400.3M853.7 415.9L860.0 419.2M659.5 395.8L663.1 398.3M94.9 423.9L94.2 426.6M448.4 429.8L451.4 434.0M634.1 431.2L636.4 433.1M650.2 389.2L654.6 392.3M195.4 414.6L195.4 417.2M700.0 382.3L702.3 383.7M633.0 400.9L636.9 403.9M59.0 456.1L57.7 459.8M152.8 379.7L152.4 382.3M906.1 408.2L912.1 411.0M66.7 392.1L66.2 393.4M512.8 404.5L514.6 406.4M1006.5 385.2L1012.2 387.4M773.7 375.4L776.4 376.9M160.0 406.3L159.7 409.2M761.2 425.4L767.9 429.6M100.0 453.2L99.2 456.1M315.9 473.9L317.1 477.7M938.6 393.7L945.0 396.5M86.1 373.3L85.2 375.5M183.4 484.5L183.3 488.6M281.2 375.0L282.1 378.3M531.5 496.0L533.3 498.2M180.6 452.6L180.4 457.4M366.1 441.2L367.7 444.7M233.0 472.1L233.3 475.7M727.8 374.5L732.0 376.9M737.6 373.3L742.7 376.2M506.9 430.4L510.6 434.6M425.0 421.0L426.4 423.1M41.8 482.5L39.8 487.6M461.8 432.2L464.9 436.4M575.8 449.4L577.6 451.2M854.6 422.8L861.1 426.3M507.3 497.2L511.4 502.8M672.3 398.2L674.3 399.6M448.8 382.8L451.2 385.6M505.1 395.9L508.4 399.5M508.0 386.2L509.5 387.7M262.4 379.9L262.7 381.6M338.4 415.7L338.9 417.1M395.6 383.7L396.9 385.7M402.3 412.3L404.6 416.2M499.0 412.6L502.6 416.7M219.3 423.4L219.6 427.5M135.4 440.5L135.1 442.2M1005.4 397.6L1010.9 399.8" stroke="#a9722e" stroke-opacity="0.36" stroke-width="2" fill="none" filter="url(#soft)"/>
<path d="M101.0 301.5L-113.3 823.7M129.2 298.5L-15.3 792.8M156.7 295.6L74.9 764.4M183.4 292.8L158.3 738.1M209.5 290.0L235.6 713.8M235.0 287.3L307.5 691.1M259.9 284.6L374.5 670.0M284.1 282.1L437.1 650.3M307.8 279.5L495.7 631.9M330.9 277.1L550.7 614.6M353.5 274.7L602.5 598.3M375.6 272.3L651.2 582.9M397.1 270.1L697.1 568.5M418.2 267.8L740.6 554.8M438.8 265.6L781.7 541.8M459.0 263.5L820.7 529.6M478.7 261.4L857.7 517.9M498.0 259.3L892.8 506.8M516.9 257.3L926.3 496.3M535.4 255.4L958.2 486.2M553.6 253.4L988.6 476.7M571.3 251.5L1017.7 467.5M588.7 249.7L1045.5 458.8M605.7 247.9L1072.1 450.4M622.4 246.1L1097.5 442.4M638.8 244.4L1121.9 434.7M654.8 242.7L1145.4 427.3M670.5 241.0L1167.9 420.2M686.0 239.4L1189.5 413.4M701.1 237.8L1210.3 406.9M716.0 236.2L1230.3 400.6M730.5 234.6L1249.6 394.5" stroke="#fbe3ac" stroke-opacity="0.16" stroke-width="0.8" fill="none"/>
<path d="M79.8 560.3L78.7 564.8M210.9 525.8L211.2 533.2M244.6 537.3L245.4 545.0M375.6 548.7L377.4 553.6M118.4 603.1L117.3 610.8M115.5 554.9L114.6 560.2M443.6 537.5L447.7 545.3M182.1 525.1L181.9 530.3M204.4 553.0L204.5 556.9M225.5 507.6L225.8 512.2M176.9 525.6L176.7 529.4M419.4 542.9L422.4 549.4M485.2 520.8L488.3 525.6M561.2 503.9L563.5 506.6M208.1 522.1L208.2 525.9M261.3 534.2L262.1 539.8M82.4 603.3L81.1 609.3M67.6 551.2L66.6 554.6M271.0 539.2L271.7 543.3M178.3 629.1L178.0 637.6M233.7 573.5L234.1 578.0M406.7 511.4L407.9 513.9M109.9 511.2L109.4 513.5M7.1 568.0L4.3 575.4M183.5 580.6L183.4 585.9M145.3 508.3L144.7 513.8M148.2 562.9L147.9 565.9M388.1 553.1L390.0 557.8M214.3 517.0L214.5 521.0M27.0 500.9L25.6 504.4M102.4 538.0L101.0 545.3M96.9 511.5L95.7 517.1M155.2 515.6L154.7 521.6M90.3 518.9L89.0 524.7M373.0 537.6L375.7 544.7M165.8 584.8L165.3 593.3M593.0 517.6L599.3 524.7M492.6 535.9L494.3 538.5M1.6 562.1L-0.7 568.0M104.6 563.3L103.0 571.8M273.3 500.3L274.4 506.7M483.3 544.3L485.9 548.5M21.0 522.7L19.0 528.0M557.6 500.3L562.0 505.5M171.2 567.2L170.9 573.5M90.2 577.6L88.8 584.3M422.8 505.5L425.3 510.4M349.2 507.6L350.2 510.4M297.0 502.0L298.1 506.7M73.8 559.1L72.2 565.4M59.5 519.2L57.5 525.7M191.1 505.1L191.1 508.2M2.1 585.4L-0.2 591.4M0.6 622.5L-2.2 630.3M158.4 518.7L158.0 523.1M313.3 555.9L314.5 560.8M505.4 543.0L507.9 546.8M192.1 610.9L192.1 614.5M371.9 559.6L374.8 567.6M200.2 525.0L200.2 531.3M520.6 524.1L522.3 526.5M308.2 546.1L309.5 551.9M380.9 529.9L381.9 532.6M293.7 562.0L294.6 566.8M543.1 521.0L548.7 528.3M229.3 511.0L229.8 517.6M493.9 524.2L497.2 529.3M585.5 510.2L587.8 512.7M343.0 529.6L344.5 534.3M75.1 543.2L73.6 548.8M309.9 516.1L311.1 521.0M63.7 520.2L62.9 522.7M367.8 500.9L370.5 507.5M15.4 577.8L12.7 585.3M68.7 581.6L67.1 588.1M244.2 553.1L244.8 559.3M401.8 528.5L403.4 532.1M46.4 513.5L45.5 516.3M189.9 613.1L189.8 620.5M438.9 540.4L442.0 546.4M55.7 548.5L54.5 552.4M435.6 516.4L438.1 520.9M270.1 502.0L270.5 504.2M445.9 524.6L448.3 529.0M80.7 595.8L79.8 599.8M587.0 501.5L592.1 507.1M261.8 563.3L262.8 571.4M158.6 611.4L158.3 615.2M377.5 521.8L379.3 526.2M404.8 521.2L407.7 527.5M80.7 567.1L79.2 573.3M311.5 537.9L312.8 543.4M161.3 550.5L160.8 557.4M13.7 542.8L11.1 549.7M139.5 592.2L138.6 600.4M231.4 503.6L231.6 506.4M282.6 557.1L283.5 562.6M368.1 522.2L370.2 527.6M168.8 574.1L168.4 582.0M529.2 518.6L532.4 522.9M156.9 569.7L156.7 572.7M468.7 541.8L471.5 546.8M412.9 522.8L415.2 527.7M31.5 642.6L29.2 650.6M519.4 526.0L521.8 529.4M140.4 609.8L139.8 615.9M39.8 619.2L36.8 629.9M14.3 595.0L12.2 601.2M453.0 509.8L456.8 516.3M155.8 584.7L155.3 591.4M60.9 508.9L59.1 514.6M175.8 528.1L175.5 535.0M77.0 507.3L75.9 511.4M117.9 610.1L116.9 617.2M232.1 506.7L232.5 510.8M152.0 513.5L151.6 518.2M138.2 550.1L137.7 553.8M331.7 564.9L333.2 570.1M15.1 576.6L13.2 581.9M602.4 514.1L608.3 520.6M213.8 524.8L213.9 527.3M536.8 506.4L542.1 513.2M304.0 580.1L304.9 584.3M240.1 561.7L240.7 568.3M41.7 562.4L39.3 570.1M147.7 625.3L147.3 630.6M333.4 573.9L335.3 581.0M609.0 510.5L611.2 512.8M555.9 511.7L561.2 518.2M202.2 527.7L202.2 534.0M137.9 547.8L137.1 554.2M240.5 614.0L241.2 622.8M178.8 599.1L178.5 608.1M17.5 583.7L14.3 592.8M96.9 577.4L95.3 585.7M123.9 523.4L123.0 529.1M417.8 557.5L421.0 564.6M142.7 632.0L142.3 636.1M75.5 545.4L74.8 548.2M257.9 506.6L258.5 510.9M339.0 565.8L339.9 569.0M153.3 581.8L153.0 585.6M132.2 579.6L131.1 588.0M162.6 579.8L162.4 583.3M123.3 647.8L122.0 658.1M331.9 502.9L333.1 507.0M63.6 548.0L61.8 554.4M162.1 533.0L161.6 539.8M384.5 515.0L386.4 519.5M138.7 500.8L138.4 503.7M175.4 506.4L175.2 509.5M145.4 501.1L145.0 504.3M459.1 507.3L461.5 511.2M432.4 515.8L435.5 521.6M39.5 568.0L37.3 574.9M214.7 557.4L215.0 563.3M130.7 555.0L130.0 560.9M458.6 540.1L460.9 544.1M126.6 609.5L125.9 615.4M92.4 607.1L91.6 611.5M75.0 547.9L73.6 553.2M426.0 509.4L429.5 516.1M169.5 531.2L169.3 534.2M280.4 505.0L280.9 508.0M152.8 537.6L152.3 542.9M426.1 523.1L428.3 527.3M422.4 540.2L425.4 546.4M321.7 589.0L323.6 596.9M63.5 628.8L62.2 634.2M102.4 572.0L101.0 579.7M41.4 557.0L39.2 564.1M224.4 502.1L224.6 504.8M607.4 519.2L609.8 521.8M27.7 583.0L26.5 586.6M556.5 529.2L559.8 533.4M283.3 525.0L283.8 527.7M549.3 531.8L554.0 538.0M241.9 555.4L242.4 560.7M445.0 518.5L447.1 522.3M25.1 506.3L22.4 513.2" stroke="#a36a28" stroke-opacity="0.4" stroke-width="2.6" fill="none" filter="url(#soft)"/>
<path d="M367.0 299.9L368.1 301.3M434.5 280.7L435.2 281.3M592.0 311.5L595.4 313.5M222.3 312.1L222.4 313.2M682.6 265.8L685.0 266.7M627.3 302.1L629.8 303.4M152.6 311.3L152.5 312.3M669.4 306.1L671.6 307.1M612.6 319.5L614.6 320.7M842.8 338.5L845.9 339.8M624.8 333.0L628.5 335.3M661.3 283.6L664.8 285.2M783.7 369.5L788.1 371.8M750.3 275.6L753.5 276.8M656.5 340.7L659.3 342.4M573.3 263.7L575.4 264.8M360.7 342.3L362.0 344.3M198.9 306.0L199.0 307.6M210.8 335.4L210.9 336.9M686.8 253.1L688.9 253.8M733.9 272.6L736.3 273.5M229.1 320.6L229.3 321.7M310.0 286.1L310.6 287.1M466.3 368.8L469.1 371.9M703.2 318.5L706.5 320.1M578.8 262.3L581.2 263.5M454.1 331.7L455.1 332.7M556.7 265.8L557.6 266.3M277.6 312.4L278.0 313.6M145.6 303.6L145.4 304.4M183.5 362.4L183.4 363.5M855.6 315.1L858.1 316.0M328.0 339.0L328.7 340.5M530.6 338.4L531.9 339.4M184.4 357.8L184.3 359.3M684.5 263.1L685.7 263.5M864.2 295.6L866.5 296.3M497.3 268.2L498.8 269.2M337.7 341.6L338.4 342.7M761.6 312.8L765.7 314.6M379.2 309.7L380.6 311.5M877.6 343.4L880.8 344.6M540.7 311.1L541.8 311.9M109.8 354.6L109.3 356.1M405.6 305.9L406.4 306.9M269.6 320.3L270.1 322.0M983.2 352.8L988.4 354.7M729.3 306.8L731.3 307.7M708.0 284.2L711.4 285.7M826.8 277.8L829.6 278.7M948.9 325.4L951.9 326.4M207.9 319.0L208.0 321.1M669.1 263.0L672.0 264.2M935.3 311.1L938.9 312.3M517.8 279.1L518.6 279.6M926.6 310.9L930.8 312.3M820.0 285.1L824.3 286.6M695.6 268.2L697.3 268.9M352.1 316.0L353.1 317.6M341.6 352.2L342.2 353.4M780.9 277.6L783.6 278.5M835.9 294.9L839.4 296.1M484.2 268.7L485.4 269.6M250.8 292.6L251.1 294.1M561.3 303.1L563.3 304.4M547.4 292.3L548.8 293.2M753.0 309.0L756.4 310.5M646.5 325.2L649.3 326.8M684.7 308.5L687.6 309.9M216.3 313.4L216.4 314.7M156.7 341.0L156.5 342.0M246.7 369.0L247.0 371.1M383.3 304.8L384.2 305.8M597.1 256.3L599.0 257.2M432.3 274.4L433.3 275.2M656.6 325.1L658.2 326.0M1004.2 332.1L1011.6 334.5M187.5 341.7L187.5 342.7M685.2 277.8L686.8 278.5M316.9 305.7L317.9 307.5M680.1 369.4L682.1 370.6M652.2 257.4L655.0 258.5M322.6 301.9L323.3 303.3M298.4 301.9L298.8 302.7M136.4 336.4L136.1 337.8M494.6 288.4L495.9 289.3M101.5 349.9L101.2 350.9M743.3 319.7L745.6 320.7M755.6 294.3L758.6 295.4M752.1 288.0L755.0 289.1M870.8 335.4L875.6 337.3M455.0 321.5L455.9 322.3M209.6 306.5L209.7 308.1M315.6 308.0L316.0 308.8M962.8 367.9L969.2 370.3M343.4 317.4L344.1 318.6M464.2 289.2L465.5 290.2M537.9 292.9L540.5 294.7M378.9 333.8L379.5 334.6M459.0 347.3L460.7 349.1M316.9 296.9L317.5 298.0M135.5 307.8L135.2 308.9M795.8 336.2L800.4 338.2M775.7 284.0L778.1 284.9M758.9 252.6L761.8 253.6M558.4 263.4L560.6 264.6M871.7 315.4L876.5 317.1M670.5 262.0L672.7 262.9M814.6 315.3L819.6 317.3M763.5 351.8L766.3 353.1M121.2 326.4L120.8 327.8M697.1 345.5L701.0 347.6M461.1 269.4L462.7 270.6M736.4 310.7L739.6 312.1M571.6 264.5L573.8 265.7M306.8 295.9L307.2 296.8M640.8 274.2L643.5 275.4M864.2 289.1L867.3 290.1M695.0 350.2L696.9 351.3M227.7 334.4L227.9 336.4M144.0 348.0L143.6 350.2M762.9 346.9L765.9 348.4M565.2 329.0L567.4 330.5M475.1 304.9L476.2 305.8M756.7 260.5L759.4 261.4M903.0 328.4L906.2 329.6M819.0 294.6L820.8 295.2M349.6 300.4L350.3 301.5M931.2 325.7L937.5 327.8M363.8 339.0L364.7 340.6M914.9 299.6L918.3 300.6M460.7 307.9L461.5 308.6M762.6 264.8L764.6 265.5M503.9 289.0L505.3 290.0M709.5 304.5L713.0 306.2M609.5 290.1L610.7 290.8M725.4 254.0L727.6 254.8M399.4 319.9L400.9 321.7M786.0 263.3L789.1 264.3M242.9 316.5L243.1 317.5M827.6 295.3L830.1 296.2M219.4 324.5L219.5 325.4M374.1 290.4L374.8 291.3M708.4 297.7L710.9 298.8M550.1 313.7L551.8 314.9M145.0 349.6L144.5 352.3M716.2 266.2L718.1 266.9M329.5 349.7L330.3 351.5M1020.6 347.4L1028.1 349.9M117.7 311.2L117.2 312.9M813.3 293.1L816.8 294.4M943.5 366.7L951.3 369.8M306.2 300.9L306.6 301.7M772.1 337.8L776.7 339.9M540.0 352.9L541.3 353.9M677.3 273.4L680.6 274.8M614.3 292.3L615.7 293.0M194.8 308.1L194.8 309.5M593.9 309.6L595.5 310.6M528.6 262.8L529.8 263.5M807.4 294.4L809.7 295.2M343.2 284.7L344.0 285.8M663.4 305.5L665.4 306.5M112.6 366.6L112.1 368.5M612.2 276.8L614.9 278.1M731.3 311.9L733.4 312.8M798.4 268.9L802.2 270.1M299.5 319.5L300.2 321.3M262.4 324.5L262.8 325.9M425.9 302.2L427.8 304.1M219.3 302.6L219.4 303.3M374.7 304.2L376.2 306.1M612.3 256.0L614.5 256.9M438.7 328.8L440.0 330.2M240.1 293.6L240.2 294.5M764.9 259.0L767.1 259.7M922.0 359.8L926.7 361.7M738.9 260.4L741.0 261.2M687.7 247.4L689.6 248.1M886.5 349.5L889.0 350.5M127.9 314.6L127.3 316.6M392.5 316.3L394.2 318.4M586.7 289.4L589.2 290.8M374.9 319.2L375.4 319.9M708.2 244.5L709.7 245.0M426.1 308.3L427.3 309.6M866.6 345.1L872.4 347.5M790.1 324.7L793.1 326.0M388.1 333.6L389.6 335.7M163.9 332.2L163.7 334.3M302.5 295.0L302.8 295.7M558.6 303.4L561.6 305.4M170.5 314.8L170.3 316.2M694.0 306.1L696.0 307.1M579.2 308.9L581.9 310.6M273.9 327.2L274.3 328.4M398.5 339.0L400.5 341.6M508.9 294.6L511.1 296.2M698.3 247.3L700.0 247.9M201.1 326.3L201.2 328.6M788.3 292.5L790.6 293.3M671.2 348.3L673.4 349.7M398.8 294.7L399.6 295.5M266.5 291.8L266.8 292.8M606.9 275.6L608.5 276.5M151.9 317.7L151.7 319.0M641.8 358.6L643.6 359.8M351.0 328.1L352.4 330.4M402.0 302.7L403.4 304.3M266.5 291.1L267.0 292.7M801.7 292.6L803.8 293.3M707.6 251.6L710.1 252.5M455.3 354.9L456.4 356.1M763.4 257.9L764.9 258.5M875.8 313.0L881.0 314.9M258.4 324.1L258.7 325.4M547.1 315.4L548.3 316.3M650.8 334.5L654.0 336.4M384.3 346.2L385.6 348.2M431.7 275.1L432.9 276.2M497.5 296.7L499.5 298.2M741.1 301.2L743.1 302.1M465.7 282.0L466.6 282.6M435.4 283.4L436.5 284.5M479.3 271.9L480.8 273.0M482.1 273.3L483.5 274.2M685.2 267.1L688.6 268.5M145.9 364.9L145.4 367.5M673.3 262.2L675.5 263.0M743.3 261.8L745.2 262.5M524.8 306.9L525.8 307.6M255.4 314.9L255.9 317.0M650.5 261.4L652.6 262.3M622.4 300.6L625.6 302.3M626.8 345.7L630.7 348.2M905.5 298.7L908.8 299.7M726.6 300.4L728.6 301.2M614.2 257.6L616.7 258.7M678.7 358.9L681.4 360.5M99.7 313.4L99.4 314.3M628.0 313.0L630.6 314.5M711.2 256.2L712.9 256.8M560.0 260.7L560.9 261.1M385.0 291.3L385.8 292.3M226.1 308.3L226.3 309.8M932.8 344.9L937.2 346.5M311.6 286.9L312.3 288.1M570.8 306.1L573.2 307.6M562.1 317.6L563.6 318.6M372.0 324.0L372.5 324.8M944.5 342.7L950.4 344.9M288.4 302.4L288.8 303.4M117.9 365.3L117.2 367.9M768.5 309.8L771.0 310.8M676.2 247.1L677.7 247.6M681.5 286.9L685.0 288.5M380.2 312.2L381.7 314.2M724.5 358.9L728.7 361.2M856.7 285.8L861.3 287.3M744.7 323.8L747.4 325.0M721.9 256.5L723.1 256.9M218.9 299.4L219.0 300.1M746.7 338.8L750.9 340.8M614.2 259.7L616.2 260.6M693.2 250.7L696.1 251.8M272.7 305.3L272.9 306.0M933.8 354.1L939.4 356.2M833.1 323.1L836.1 324.3M184.2 313.4L184.1 315.2M283.2 339.5L283.7 341.1M103.9 350.8L103.5 352.3M674.7 294.7L676.8 295.7M861.7 291.3L866.5 292.8M541.9 263.7L543.4 264.5M720.1 320.6L722.3 321.7M684.7 254.5L687.5 255.6M240.9 293.3L241.0 294.1M552.1 336.8L555.0 339.0M711.7 273.0L715.3 274.4M342.3 313.0L343.3 314.6M482.4 280.4L484.0 281.6M807.5 326.7L810.7 328.0M460.5 329.9L462.8 332.1M280.9 329.2L281.6 331.4M534.0 316.5L536.7 318.5M321.2 364.9L322.1 367.0M841.0 354.4L845.9 356.6M407.2 324.1L408.0 325.1M857.4 326.3L862.4 328.2M255.3 369.4L255.8 372.2M535.8 276.3L537.4 277.2M733.7 267.0L735.4 267.6M231.8 316.9L232.0 318.0M418.3 365.0L419.4 366.4M374.2 304.9L375.7 306.8M617.4 263.6L620.2 264.9M183.5 367.1L183.3 370.2M859.0 345.1L863.1 346.7M289.0 353.0L289.3 354.0M598.8 364.3L601.5 366.3M829.9 341.3L835.4 343.6M740.4 341.9L743.8 343.5M591.9 286.9L593.8 287.9M556.9 368.6L559.2 370.5M519.7 282.9L521.8 284.3M855.1 295.3L857.2 296.0M629.6 335.9L632.9 337.9M610.8 364.1L614.6 366.8M555.9 319.3L559.0 321.4M640.3 263.5L643.3 264.8M380.1 285.1L380.8 286.0M405.3 276.8L406.2 277.7M328.1 316.4L329.1 318.1M857.8 296.4L860.3 297.2M732.8 290.6L734.8 291.4M650.9 316.9L653.8 318.5M493.1 306.9L494.8 308.2M723.7 272.4L725.9 273.2M336.9 354.5L337.5 355.8M317.6 331.5L318.3 333.1M655.8 263.9L658.6 265.0M547.6 261.3L548.4 261.7M918.8 313.7L921.9 314.8M185.3 320.4L185.3 321.5M704.6 286.9L706.3 287.7M958.3 342.6L961.5 343.7M863.1 312.5L868.0 314.3M698.8 265.9L701.5 267.0M836.6 305.4L839.3 306.4M296.9 306.5L297.5 307.8M554.2 338.0L556.6 339.8M666.0 247.3L668.6 248.3M551.7 353.7L554.5 356.0M749.8 285.3L752.3 286.3M728.5 247.7L731.1 248.6M551.6 262.4L553.4 263.3M873.8 290.7L877.3 291.8M688.8 247.7L691.3 248.6M609.9 298.6L613.0 300.3M445.6 349.3L447.3 351.2M665.3 271.9L667.4 272.8M510.9 358.3L513.8 360.9M514.0 300.3L515.7 301.6M931.1 311.2L936.5 313.0M391.6 324.5L392.6 325.7M668.9 352.7L673.0 355.1M502.2 270.4L503.4 271.2M93.6 339.6L92.7 342.0M694.3 354.5L698.7 357.0M875.4 311.2L879.7 312.7M722.9 360.2L726.9 362.4M614.5 278.5L617.0 279.7M250.4 297.1L250.8 298.6M897.1 317.6L900.7 318.8M903.8 352.2L908.8 354.2M328.9 330.1L329.6 331.5M396.6 346.7L398.1 348.8M710.9 247.4L713.2 248.2M129.6 323.1L129.0 325.1M424.5 286.1L425.8 287.4M280.0 310.5L280.2 311.2M734.4 248.4L737.5 249.5M208.5 299.1L208.6 300.6M896.4 336.8L899.0 337.8M729.5 362.8L733.0 364.7M762.3 265.5L766.2 266.8M592.9 255.9L593.8 256.3M798.4 297.8L800.2 298.5M597.4 271.4L599.9 272.7M472.2 326.5L474.3 328.5M978.9 336.2L984.2 338.0M335.6 290.7L336.7 292.4M587.1 296.7L589.0 297.8M776.4 281.8L779.9 283.1M324.6 284.2L325.1 285.0M518.9 365.5L521.9 368.2M685.8 248.9L688.6 249.9M475.9 295.0L477.1 295.9M857.6 363.3L862.0 365.3M825.2 300.5L828.5 301.7M554.0 282.7L555.3 283.4M584.6 313.6L586.9 315.1M225.0 301.0L225.2 302.9M398.5 289.7L399.6 291.0M661.3 265.2L663.6 266.2M434.8 361.8L435.7 362.8M568.2 352.2L570.0 353.6M730.2 296.9L734.4 298.6M883.0 367.1L890.1 370.1M305.8 291.0L306.2 291.8M251.5 303.5L251.7 304.2M606.6 309.5L608.0 310.4M776.7 264.1L779.5 265.0M463.7 340.7L464.8 341.8M122.2 348.3L121.8 349.9M1023.7 366.5L1031.5 369.2M632.6 289.1L635.1 290.3M633.9 262.1L635.6 262.8M313.8 302.2L314.5 303.5M246.4 329.1L246.6 330.2M571.8 258.3L573.8 259.3M261.1 295.7L261.6 297.4M709.7 257.3L711.9 258.1M642.0 314.9L644.2 316.1M773.3 300.0L776.8 301.4M222.8 329.2L222.9 330.0M731.4 322.2L733.5 323.1M734.1 270.9L736.4 271.7M235.7 336.5L236.0 338.8M376.8 301.3L377.7 302.5M732.3 245.3L735.4 246.3M606.7 279.3L608.7 280.3M348.4 319.5L349.0 320.5M717.1 251.5L718.9 252.1M693.6 249.7L696.2 250.6M720.6 283.8L722.3 284.5M271.7 366.2L272.5 369.1M264.1 301.5L264.3 302.2M640.8 324.0L642.8 325.2M805.0 316.6L807.5 317.6M603.9 259.6L606.3 260.7M465.1 270.4L466.9 271.8M246.4 355.3L246.8 357.4M495.2 280.4L497.0 281.6M675.6 296.8L678.8 298.4M560.7 340.4L563.1 342.2M492.8 268.0L494.9 269.3M291.1 314.0L291.4 314.9M899.0 332.9L901.4 333.8M331.0 299.9L331.7 301.0M455.0 336.0L457.2 338.3M555.4 316.5L558.4 318.6M702.7 285.9L704.6 286.7M412.0 345.6L414.0 348.2M668.8 252.1L670.9 252.9M496.4 273.5L497.8 274.4M473.1 270.2L473.9 270.8M989.0 331.8L996.0 334.1M682.7 248.4L685.0 249.3M781.5 267.7L783.7 268.4M575.4 270.8L577.4 271.9M861.4 293.2L864.1 294.1M543.1 348.1L544.6 349.2M205.0 316.2L205.1 317.4M446.8 311.9L447.8 313.0M664.9 337.0L668.3 338.9M631.5 353.3L634.3 355.2M366.4 314.5L367.1 315.5M543.0 315.9L545.2 317.5M653.6 266.4L654.8 266.9M788.0 290.9L789.8 291.5M457.8 339.7L459.8 341.9M192.0 333.7L191.9 336.1M634.4 268.2L636.1 269.0M940.3 355.7L945.4 357.6M825.4 354.6L830.8 357.0M719.5 254.7L722.6 255.8M608.3 306.0L610.5 307.3M483.3 363.1L485.1 364.9M547.4 327.3L548.8 328.4M351.6 300.9L352.5 302.2M530.4 272.0L532.7 273.3M761.4 259.1L763.7 259.9M689.8 245.1L690.9 245.5M609.8 329.2L613.5 331.4M764.7 313.6L769.6 315.7M579.5 338.4L582.4 340.4M444.8 324.9L446.4 326.5M497.7 277.2L499.0 278.1M493.8 362.9L496.0 365.1M435.2 364.4L437.4 367.1M251.3 343.6L251.8 346.2M787.4 304.6L789.4 305.4M901.3 325.3L906.9 327.3M236.9 340.0L237.2 341.7M499.6 289.3L500.6 290.0M690.7 340.7L693.4 342.2M933.1 306.7L935.3 307.4M577.3 256.7L578.6 257.4M825.0 314.0L829.2 315.7M907.8 297.7L911.3 298.8M203.0 320.5L203.1 322.4M190.0 313.1L190.0 314.0M650.0 255.2L651.0 255.6M694.6 284.5L697.7 285.9M391.3 299.7L392.1 300.7M426.3 346.6L427.6 348.2M835.8 283.7L839.4 285.0M302.7 292.1L303.5 293.8M739.4 277.2L743.2 278.7M714.9 278.8L717.8 280.0M856.5 290.6L861.5 292.2M323.4 348.4L324.4 350.7M297.3 335.6L298.2 337.9M255.6 351.3L255.9 352.6M792.8 266.6L795.7 267.6M413.7 282.5L414.4 283.1M734.3 283.6L736.3 284.4M268.7 334.6L269.0 335.8M241.6 352.1L241.9 354.4M855.2 292.5L857.7 293.4M455.7 286.4L457.3 287.8M411.5 309.4L412.8 310.9M582.9 343.8L584.8 345.1M713.2 292.1L716.3 293.5M565.5 300.0L567.3 301.1M170.9 327.8L170.7 330.0M573.1 307.7L575.2 309.0M339.4 291.0L340.0 291.9M290.0 305.3L290.6 306.9M360.8 346.0L362.3 348.6M213.8 340.4L213.9 341.3M749.1 346.2L752.1 347.7M576.7 278.9L577.9 279.5M933.5 330.9L939.0 332.8M133.8 310.5L133.5 311.4M275.9 337.3L276.4 338.8M119.8 359.8L119.2 362.1M645.5 280.7L647.6 281.6M650.1 294.9L651.3 295.5M906.2 348.5L909.9 350.0M131.6 344.9L131.3 346.0M676.6 270.4L679.8 271.8M625.3 260.8L627.6 261.8M329.7 295.4L330.7 297.2M445.0 277.5L446.4 278.7M506.3 348.6L509.2 351.3M536.9 293.9L537.9 294.5M427.7 338.1L428.7 339.3M355.7 299.1L356.7 300.6M614.0 282.2L615.6 283.0M559.5 325.7L562.7 328.0M405.8 319.3L407.6 321.4M794.1 310.9L798.4 312.6M196.9 345.1L196.9 346.7M270.9 298.0L271.2 298.9M195.4 352.4L195.4 354.3M397.8 298.7L398.5 299.4M523.2 275.5L524.8 276.5M451.7 295.4L453.2 296.7M318.5 321.3L319.0 322.2M349.5 307.4L350.5 308.9M901.4 367.1L907.6 369.7M372.7 304.3L374.0 306.1M389.5 334.7L390.7 336.4M862.3 336.7L868.2 339.1M848.0 291.7L851.4 292.8M238.2 341.7L238.5 343.6M594.3 254.8L596.6 255.8M925.2 347.9L929.7 349.6M466.3 318.3L467.8 319.7M244.6 340.1L244.9 341.7M571.0 305.6L572.4 306.5M167.1 356.1L166.9 358.0M651.9 254.7L654.2 255.7M589.6 294.5L591.8 295.8M847.1 289.3L851.0 290.6M368.6 332.6L370.1 334.9M115.1 336.7L114.5 338.7M445.6 281.4L447.1 282.6M602.5 346.0L604.9 347.6M196.6 325.3L196.6 327.4M514.2 277.0L516.3 278.4M309.1 298.5L309.7 299.8M341.8 368.7L342.9 371.0M596.1 353.0L597.6 354.1M417.9 283.0L419.0 284.0M823.6 306.6L827.9 308.2M635.4 263.1L638.4 264.4M613.5 264.1L616.1 265.3M419.2 296.6L420.9 298.4M633.3 256.5L634.7 257.2M387.3 279.0L388.4 280.1M289.3 334.9L290.0 336.9M833.5 307.6L838.6 309.5M707.8 261.1L710.7 262.1M673.6 259.6L675.4 260.3M912.6 319.5L915.8 320.6M279.8 367.7L280.6 370.5M534.8 274.7L535.7 275.3M552.0 298.3L554.3 299.8M407.8 294.0L409.3 295.6M708.3 243.4L710.1 244.0M641.1 253.2L642.4 253.7M849.5 332.1L853.1 333.6M475.2 287.9L477.2 289.4M157.5 358.6L157.3 360.0M856.8 309.3L858.8 310.1M252.1 352.3L252.5 354.1M589.8 310.2L591.7 311.3M134.0 327.0L133.5 328.9M338.7 323.5L339.5 325.0M801.4 329.0L805.6 330.8M412.4 315.3L414.0 317.2M606.8 363.7L609.2 365.4M575.8 315.6L577.1 316.4M397.6 324.8L399.4 327.1M517.0 316.6L518.4 317.7M312.5 341.5L312.9 342.6M534.4 358.2L536.3 359.7M241.5 302.2L241.7 303.2M791.0 274.1L795.1 275.5M530.1 271.0L531.2 271.7M728.1 297.6L732.1 299.3M339.9 320.5L340.3 321.3M243.8 334.9L244.2 336.9M301.1 353.7L301.6 355.1M540.4 269.7L542.6 271.0M758.5 278.7L760.3 279.3M609.6 298.0L611.8 299.2M573.4 290.3L575.3 291.4M736.2 244.7L738.7 245.5M669.1 289.0L670.5 289.7M232.9 314.7L233.2 316.5M616.4 349.6L619.4 351.5M709.8 337.1L712.5 338.5M660.4 279.2L663.2 280.4M858.3 358.1L861.9 359.7M210.7 297.6L210.8 298.8M783.0 259.4L786.3 260.5M176.4 304.1L176.3 304.9M227.7 321.0L228.0 322.8M731.7 257.4L732.9 257.9M677.5 274.8L681.0 276.3M598.7 365.4L601.1 367.1M754.0 299.6L756.5 300.6M709.1 253.6L711.9 254.6M678.4 251.7L680.6 252.5M584.7 283.9L586.1 284.7M345.9 354.9L346.7 356.3M535.5 280.4L537.8 281.9M733.6 271.1L736.8 272.3M712.9 276.0L715.0 276.8M726.2 333.3L729.4 334.9M768.8 280.3L772.5 281.6M707.7 262.9L710.9 264.1M806.4 265.8L807.9 266.3M723.9 257.0L726.8 258.0M181.5 325.1L181.4 327.0M172.2 358.8L171.9 361.6M117.6 344.8L116.9 347.2M583.0 259.9L584.7 260.8M316.5 358.5L317.0 359.7M699.9 256.2L702.1 257.0M602.9 271.1L605.3 272.3M484.3 280.5L485.6 281.4M658.6 281.7L660.2 282.4M315.8 294.1L316.1 294.7M545.9 320.3L548.1 321.9M380.3 279.2L381.4 280.4M687.1 327.3L690.2 328.9M684.8 298.7L687.0 299.7M450.4 334.5L451.4 335.5M728.9 240.2L731.3 241.0M759.4 266.0L762.4 267.0M417.5 307.7L418.4 308.7M697.7 248.4L700.2 249.3M679.7 298.4L682.4 299.7M704.7 358.0L707.5 359.6M669.8 329.9L671.9 331.0M584.5 290.1L587.4 291.7M486.2 295.9L487.2 296.7M851.5 297.7L855.1 298.9M676.5 250.1L678.3 250.7M926.7 357.4L929.8 358.7M233.5 333.2L233.6 334.2M449.6 281.3L450.7 282.3M962.4 315.2L966.6 316.6M519.0 294.3L520.5 295.3M408.1 334.6L408.8 335.5M377.0 313.1L378.4 314.9M286.8 361.1L287.6 363.7M613.3 303.9L614.6 304.6M487.7 320.7L489.8 322.5M372.9 345.2L374.2 347.3M726.2 284.9L728.5 285.9M956.5 320.6L960.4 321.9M633.3 293.9L634.6 294.6M702.3 292.7L705.0 293.9M557.5 340.6L560.6 342.9M774.5 363.6L778.1 365.5M859.4 356.0L862.1 357.2M282.8 299.0L283.4 300.6M185.8 311.8L185.8 313.5M514.5 269.7L516.3 270.8M706.0 311.3L707.7 312.0M673.4 303.7L676.3 305.1M1027.6 335.7L1034.8 338.0M227.7 350.1L227.9 352.0M333.6 331.5L334.3 332.7M822.9 307.8L826.5 309.1M423.3 279.5L424.2 280.3M940.6 349.4L947.3 351.9M319.7 313.7L320.1 314.5M558.4 312.0L560.4 313.3M574.9 355.3L577.2 357.0M679.6 268.7L682.8 270.0M508.9 269.9L510.1 270.6M563.9 317.9L566.2 319.4M380.3 318.1L381.7 320.0M617.6 319.0L621.2 321.1M680.5 252.8L682.8 253.7M767.1 304.9L770.8 306.5M630.4 288.7L632.0 289.5M685.6 261.0L688.8 262.2M273.1 303.6L273.4 304.3M611.7 285.5L614.6 287.0M604.7 271.8L605.8 272.4M587.2 259.9L589.5 261.1M351.9 314.7L352.9 316.3M772.7 274.2L776.5 275.5M402.1 279.6L403.0 280.5M592.9 282.8L595.0 283.9M674.9 259.3L678.0 260.5M361.8 334.4L363.1 336.5M505.6 274.9L506.6 275.5M914.9 314.6L917.2 315.3M412.4 348.6L413.5 350.0M642.0 270.5L644.7 271.7M340.6 291.3L341.4 292.5M621.9 319.7L623.2 320.5M490.0 277.8L491.6 279.0M965.2 368.4L970.6 370.4M225.9 308.0L226.1 309.9M590.5 334.3L592.6 335.7M281.6 357.5L282.0 358.8M208.7 334.2L208.8 336.5M844.9 291.0L849.2 292.5M675.6 366.8L678.1 368.3M640.4 267.4L642.0 268.1M556.2 289.0L558.3 290.2M841.3 342.1L843.7 343.1M725.3 283.4L728.8 284.8M816.0 282.0L818.8 282.9M171.6 339.9L171.4 342.0M599.8 271.9L601.5 272.8M220.2 325.4L220.3 326.5M755.3 303.1L758.3 304.4M585.0 280.3L587.1 281.5M918.9 349.1L921.7 350.2M670.5 292.1L672.1 292.9M934.4 314.9L939.7 316.7M934.2 333.7L940.4 335.9M802.1 318.8L805.4 320.2M904.4 351.4L910.9 354.0M731.7 251.9L735.1 253.1M685.1 275.2L688.3 276.5M299.0 315.6L299.5 317.0M772.5 355.0L775.9 356.7M881.4 359.0L887.0 361.4M1000.0 344.4L1004.7 346.0M630.9 250.9L632.7 251.7M108.5 324.3L107.9 326.3M382.6 307.7L383.5 308.9M839.9 319.0L842.9 320.2M171.1 344.9L170.9 347.1M687.0 265.7L688.8 266.4M808.4 275.1L810.6 275.8M863.1 312.9L868.5 314.9M474.8 350.7L477.5 353.4M685.6 263.0L687.9 263.9M88.8 337.6L87.8 340.0M382.5 290.8L383.5 292.0M809.1 301.5L812.0 302.6M1033.0 360.3L1039.7 362.6M808.3 275.0L811.8 276.2M623.7 303.2L626.1 304.5M861.8 330.9L866.1 332.6M821.4 357.3L823.7 358.4M366.6 297.9L367.9 299.7M712.3 257.6L714.8 258.5M520.5 268.0L521.8 268.8M787.1 333.6L790.0 334.9M681.3 281.4L683.9 282.5M839.6 333.1L843.2 334.6M950.7 321.1L956.0 322.9M332.7 305.7L333.5 307.1M909.7 353.2L913.7 354.8M349.2 288.2L349.8 289.1M266.2 339.8L266.9 342.3M276.3 340.8L276.7 342.4M191.1 340.3L191.1 341.8M842.9 322.7L847.8 324.6M360.3 300.9L361.5 302.5M552.6 352.6L555.4 354.9M671.6 280.3L673.6 281.2M846.3 298.6L849.0 299.6M594.4 288.0L597.1 289.4M299.8 296.0L300.4 297.3M806.6 339.6L810.2 341.2M661.6 259.6L663.3 260.3M806.3 368.2L810.1 370.1M954.1 329.2L958.0 330.5M628.2 369.7L632.5 372.7M216.0 352.6L216.1 353.7M491.4 348.7L494.0 351.2M708.8 331.5L711.6 333.0M561.4 294.5L564.1 296.1M908.5 368.4L911.8 369.8M781.4 366.6L785.6 368.7M1017.2 365.8L1024.4 368.4M837.8 326.5L843.2 328.6M586.7 291.4L587.8 292.0M284.6 321.7L284.9 322.6M733.6 279.6L735.0 280.1M568.3 274.1L569.7 274.8M645.5 253.1L648.1 254.2M193.2 333.4L193.2 335.2M401.0 325.8L402.3 327.5M926.6 354.5L931.7 356.5M546.5 323.3L547.7 324.2M736.8 366.0L740.9 368.3M482.4 352.4L484.4 354.5M739.4 246.0L741.6 246.7M695.5 307.4L697.9 308.5M273.9 358.4L274.3 359.9M456.0 296.1L457.7 297.5M272.7 330.7L273.2 332.4M604.3 260.4L605.5 261.0M595.4 288.5L597.1 289.5M343.9 287.6L344.4 288.3M453.1 282.8L453.9 283.4M283.0 326.9L283.3 327.7M919.5 327.1L925.9 329.4M845.6 281.8L849.6 283.1M212.3 298.0L212.4 298.9M593.3 308.0L594.4 308.7M908.6 351.0L913.2 352.8M152.6 358.0L152.3 360.2M811.5 295.4L815.3 296.8M279.4 325.8L280.1 328.0M404.2 288.7L405.4 290.0M207.5 327.3L207.6 328.8M668.7 353.1L672.6 355.4M438.2 279.9L439.6 281.2M764.8 357.4L767.6 358.9M738.4 356.0L742.0 357.9M147.1 341.8L146.6 344.4M310.4 350.8L311.4 353.2M833.3 323.6L838.0 325.5M129.6 319.1L129.1 321.3M642.8 253.3L643.9 253.7M758.3 267.3L760.0 267.9M956.5 320.1L959.6 321.1M673.4 264.6L675.6 265.5M690.6 244.1L693.3 245.1M680.2 340.3L684.3 342.6M165.6 309.0L165.4 310.5M367.7 343.6L368.3 344.5M610.1 255.4L612.5 256.4M759.8 298.3L761.7 299.1M594.9 280.2L596.8 281.2M381.9 289.9L383.1 291.4M955.4 361.6L958.6 362.8M419.0 318.2L420.7 320.0M619.0 252.5L620.1 252.9M565.7 327.0L567.7 328.4M692.6 352.2L697.4 354.9M846.8 367.1L853.3 370.1M878.6 336.6L880.9 337.5M714.6 261.7L718.0 263.0M370.2 333.4L371.1 334.7M337.8 319.5L338.5 320.8M105.7 345.6L104.8 348.1M778.7 274.0L782.3 275.3M502.9 277.3L504.9 278.7M629.8 363.8L632.9 365.9M813.2 281.6L817.6 283.1M287.8 332.7L288.6 335.1M96.1 352.5L95.3 354.8M768.5 254.7L770.8 255.4M765.3 350.7L770.0 353.0M664.9 277.3L666.7 278.0M680.1 356.5L683.7 358.7M644.9 288.2L646.2 288.9M157.3 304.3L157.1 305.4M220.5 311.5L220.6 312.9M943.6 316.9L946.9 318.0M656.7 268.6L658.0 269.1M380.1 344.4L381.5 346.5M788.9 274.7L792.8 276.0M933.5 351.2L939.3 353.4M321.1 285.6L321.6 286.3M722.4 258.0L725.2 259.0M678.7 358.2L680.9 359.5M221.4 309.0L221.7 311.0M284.1 297.1L284.4 297.7M689.1 258.6L692.3 259.9M685.3 275.1L687.4 275.9M498.4 278.7L499.5 279.5M698.7 278.2L700.9 279.1M665.4 273.7L666.9 274.4M300.6 350.5L301.2 352.1M656.6 316.6L660.2 318.6M291.0 291.5L291.5 292.6M178.7 317.2L178.6 318.6M250.8 327.2L251.1 328.7M200.0 307.1L200.0 308.3M156.2 337.7L155.9 339.8M687.0 256.5L690.2 257.7M522.2 294.2L523.4 295.0M716.2 265.8L717.6 266.3M613.0 260.8L614.8 261.6M368.1 308.2L369.2 309.8M390.9 292.5L392.5 294.2M482.6 290.2L483.4 290.7M677.5 322.3L679.0 323.1M582.5 273.2L584.9 274.5M956.0 328.2L962.4 330.4M166.3 335.4L166.2 336.3M447.8 288.7L448.7 289.5M765.4 323.3L770.4 325.5M764.4 262.4L766.9 263.3M925.2 304.7L928.1 305.6M697.3 266.7L700.8 268.1M473.1 298.3L475.3 300.2M396.1 341.7L397.2 343.2M568.8 259.8L570.2 260.6M579.8 289.6L581.7 290.7M300.7 303.2L301.5 305.1M226.8 314.5L227.0 316.0M298.8 310.7L299.4 312.2M503.6 326.6L506.2 328.8M98.0 358.2L97.5 359.8M677.3 322.0L679.0 322.9M260.8 301.4L261.3 303.1M540.6 283.3L542.7 284.6M321.3 319.3L321.9 320.6M776.1 331.2L779.6 332.8M587.7 277.3L590.5 278.8M679.2 273.2L681.4 274.1M761.7 259.4L764.0 260.2M684.2 291.9L687.1 293.3M643.7 263.7L645.2 264.3M288.8 328.7L289.1 329.5M219.6 367.0L219.7 368.9M582.0 305.4L584.6 307.0M451.7 293.3L453.0 294.4M844.0 323.7L848.4 325.4M686.1 282.3L688.0 283.1M818.4 318.5L823.4 320.5M845.6 311.1L848.2 312.1M321.7 293.6L322.0 294.2M301.8 326.8L302.5 328.7M727.2 241.9L728.5 242.3M426.5 363.8L427.8 365.5M490.0 343.5L491.4 344.9M145.0 315.8L144.8 316.8M427.0 356.2L428.1 357.5M864.9 301.9L866.9 302.6M639.5 277.8L642.4 279.1M654.7 258.4L657.0 259.3M681.9 272.6L683.2 273.2M701.3 329.8L703.3 330.8M592.6 285.4L594.1 286.2M507.0 353.7L509.6 356.0M236.0 328.3L236.3 330.3M871.9 337.8L878.2 340.3M704.6 281.2L706.6 282.0M603.7 259.7L605.8 260.6M175.5 307.2L175.4 308.5M472.0 294.1L472.9 294.8M572.2 340.4L574.3 341.9M724.8 318.0L728.8 319.8M189.8 308.6L189.8 309.8M496.4 299.5L498.3 301.0M298.4 337.2L299.0 338.9M819.2 364.2L823.0 366.0M555.6 271.2L557.2 272.1M602.9 289.8L604.0 290.4M565.5 366.5L567.6 368.1M439.1 282.2L440.2 283.2M190.1 308.7L190.0 309.6M374.6 294.9L375.3 295.8M744.2 250.6L746.0 251.2M374.4 357.9L375.9 360.3M626.2 266.0L627.6 266.6M735.3 250.5L738.3 251.5M389.3 312.5L390.1 313.6M741.2 278.0L743.0 278.7M684.8 288.9L686.5 289.7M513.4 264.5L515.3 265.6M342.0 340.8L342.8 342.3M418.3 332.6L419.2 333.6M975.4 321.2L981.2 323.0M699.5 273.5L702.3 274.6M551.7 306.2L554.3 308.0M704.6 257.9L707.9 259.1M799.7 340.6L804.2 342.6M492.4 314.9L494.6 316.7M390.7 312.6L391.4 313.4M357.4 283.7L358.5 285.1M287.4 297.6L287.7 298.3M645.9 272.6L648.0 273.6M571.6 332.2L573.7 333.7M881.7 322.7L884.6 323.8M423.8 328.9L425.9 331.2M604.0 268.0L606.7 269.4M693.5 302.9L695.1 303.6M399.8 307.0L401.2 308.6M684.5 270.6L687.7 272.0M850.5 280.5L853.4 281.4M369.0 329.8L370.3 331.8M592.2 271.8L594.9 273.2M903.7 295.7L908.6 297.2M745.1 261.5L746.3 262.0M859.6 292.9L864.6 294.6M527.1 279.7L529.0 280.8M743.9 294.5L747.1 295.8M327.6 325.4L328.3 326.9M563.6 330.0L564.9 330.9M659.4 276.3L661.1 277.1M505.1 286.8L506.9 288.0M733.6 262.2L736.3 263.2M815.4 358.3L820.5 360.7M646.3 283.2L649.4 284.6M706.3 247.7L709.4 248.8M442.7 281.9L443.4 282.5M834.9 334.3L837.5 335.4M269.4 313.2L269.8 314.5M596.9 294.5L598.3 295.3M281.5 300.3L281.8 301.1M405.4 362.7L406.4 364.1M531.3 328.8L534.3 331.2M241.9 303.1L242.2 304.7M826.9 279.0L829.6 279.9M471.6 320.1L473.6 321.8M416.7 294.1L418.3 295.7M511.4 264.3L513.4 265.5M678.6 291.8L681.5 293.2M801.8 282.3L804.7 283.3M687.0 361.3L689.8 362.9M869.3 298.9L872.5 300.0M254.0 308.0L254.4 309.8M639.3 252.4L640.9 253.1M544.3 339.0L546.2 340.4M771.7 278.2L774.7 279.3M898.5 313.4L902.5 314.8M402.6 336.6L404.1 338.5M686.5 276.2L688.6 277.1M444.2 325.9L446.3 328.1M538.8 297.8L540.3 298.8M680.4 263.4L683.0 264.5M108.9 338.3L108.5 339.2M668.8 263.1L670.4 263.8M141.0 347.4L140.6 349.7M815.5 285.8L817.7 286.5M144.6 322.2L144.4 323.0M756.1 336.2L758.2 337.2M238.9 320.2L239.2 321.8M844.0 281.6L846.9 282.6M319.0 318.9L320.1 321.1M966.6 317.1L969.6 318.1M253.2 313.8L253.5 315.0M613.0 259.0L614.9 259.9M577.4 260.1L579.0 260.9M789.4 317.6L792.7 319.0M854.3 312.4L857.5 313.5M857.2 303.2L859.5 304.1M258.3 356.3L258.8 358.6M477.0 267.9L478.7 269.1M694.2 299.0L698.1 300.8M387.3 336.6L388.2 337.9M958.4 342.7L964.7 345.0M561.2 277.6L563.6 279.0M504.2 302.2L506.6 304.0M863.3 307.7L866.8 308.9M718.6 250.2L721.4 251.2M185.7 344.1L185.6 345.2M788.7 291.1L792.5 292.5M850.9 279.3L854.4 280.4M880.3 348.3L884.6 350.1M770.9 286.7L775.2 288.3M467.1 283.4L468.9 284.7M889.3 294.0L893.8 295.5M465.8 279.3L467.6 280.7M686.8 248.0L688.8 248.7M683.8 275.1L687.1 276.5M986.8 330.7L992.4 332.5M785.0 362.9L788.0 364.4M732.2 257.2L735.0 258.2M578.0 315.1L579.5 316.1M343.9 340.9L344.9 342.7M776.1 322.9L778.4 323.9M772.5 280.9L776.7 282.5M755.0 252.0L757.6 252.9M820.6 276.9L823.8 278.0M348.4 285.0L348.9 285.8M206.1 342.9L206.1 344.9M777.8 262.2L781.7 263.5M155.3 303.8L155.1 305.2M856.6 328.2L861.4 330.0M588.9 255.2L589.9 255.7M509.4 264.8L510.8 265.6M861.8 308.5L866.8 310.3M99.6 341.2L99.2 342.4M672.1 257.2L675.1 258.4M593.1 262.2L595.5 263.4M747.0 249.5L749.9 250.5M326.0 304.4L326.7 305.5M927.0 304.8L931.7 306.3M220.7 318.6L220.8 319.6M583.6 351.5L586.4 353.5M500.1 357.4L501.2 358.4M665.4 276.3L668.4 277.6M299.7 299.3L300.3 300.5M439.6 321.4L441.5 323.3M524.4 343.8L527.4 346.3M561.5 280.6L562.5 281.2M164.0 358.2L163.8 359.4M647.7 308.5L649.7 309.6M235.7 343.1L236.0 344.6M918.2 326.3L922.3 327.8M238.5 299.6L238.7 300.3M853.9 323.4L856.5 324.4M550.8 266.0L552.4 266.9M370.5 292.4L371.7 293.9M718.8 315.0L720.8 315.9M664.1 307.9L667.1 309.5M305.2 352.9L305.8 354.2M388.5 315.8L389.8 317.4M305.3 353.4L306.2 355.7M444.3 291.3L445.0 292.0M707.7 278.0L711.3 279.5M766.8 300.2L768.8 301.0M475.6 283.5L477.3 284.8M729.3 328.2L734.1 330.5M195.3 351.9L195.3 353.0M661.8 296.3L664.8 297.7M97.8 322.5L97.1 324.3M859.5 319.7L862.1 320.6M900.5 332.5L903.1 333.5M120.6 369.0L119.9 371.9M813.7 267.8L817.7 269.1M923.2 310.2L929.2 312.2M540.7 285.4L542.5 286.5M512.0 311.8L513.6 313.0M593.8 353.3L595.7 354.6M368.7 368.0L369.9 370.1M534.0 298.4L536.3 300.0M818.0 367.9L822.5 370.1M423.1 315.4L424.3 316.7M643.7 274.9L645.7 275.9M411.9 319.8L413.0 321.0M831.9 350.3L834.9 351.7M735.6 341.1L739.7 343.2M321.2 292.3L321.8 293.4M306.5 339.8L306.9 340.9M861.4 345.7L865.6 347.5M415.7 312.8L416.9 314.2M785.8 291.1L788.6 292.1M237.9 338.1L238.3 340.5M743.3 279.3L746.9 280.7M794.5 287.7L796.6 288.5M710.8 290.7L712.4 291.4M805.3 288.2L808.1 289.2M571.4 290.3L572.4 290.9M448.8 328.5L449.6 329.3M733.9 338.6L736.3 339.8M348.9 309.8L350.0 311.6M744.8 265.0L747.5 265.9M572.6 300.9L573.7 301.6M491.9 281.0L492.9 281.7M388.3 344.8L389.4 346.4M710.6 254.4L713.9 255.6M594.2 307.6L595.4 308.3M898.8 360.9L902.5 362.5M745.7 304.5L750.3 306.4M569.6 312.9L572.4 314.7M187.4 340.7L187.3 342.9M474.5 296.0L475.3 296.6M178.7 313.0L178.7 314.2M508.9 347.3L510.5 348.7M711.0 317.4L715.4 319.5M764.8 280.4L767.2 281.3M666.2 335.1L668.5 336.4M390.4 326.8L392.0 328.9M412.2 341.6L414.3 344.1M428.7 336.0L429.6 337.1M737.1 348.6L740.5 350.4M437.8 303.8L439.6 305.5M605.0 256.5L606.2 257.1M936.0 317.0L941.1 318.7M552.2 332.6L553.8 333.7M565.1 278.9L567.0 279.9M579.7 363.3L581.4 364.5M308.4 362.5L309.4 365.2M575.7 269.0L577.7 270.1M655.4 281.3L658.4 282.7M861.1 332.3L865.4 334.0M712.6 265.0L715.9 266.2M365.6 282.8L366.3 283.7M155.2 312.9L154.9 314.5M202.4 321.1L202.5 322.3M697.5 277.8L701.0 279.2M868.9 342.8L872.1 344.1M692.5 309.6L696.2 311.4M467.9 294.5L470.0 296.2M293.5 319.5L294.4 321.6M454.0 356.4L455.7 358.3M763.6 280.5L765.6 281.2M490.1 354.3L491.4 355.5M825.3 291.0L828.7 292.2M671.1 269.4L673.9 270.6M428.4 272.8L429.8 274.1M677.4 348.9L679.4 350.0M690.0 280.4L693.4 281.8M828.3 335.7L833.6 337.9M258.8 305.2L259.2 306.4M496.0 284.1L497.1 284.9M768.3 284.8L770.2 285.5M551.1 347.7L553.3 349.4M745.8 260.4L747.1 260.8M772.4 319.1L776.0 320.7M645.0 276.9L647.3 278.0M633.2 301.1L635.5 302.4M134.6 345.3L134.3 346.3M307.9 297.4L308.5 298.6M322.1 330.6L322.9 332.1M196.5 332.8L196.5 333.6M366.7 293.7L367.8 295.1M804.5 280.4L807.0 281.3M500.2 332.9L502.6 334.9M777.3 299.1L779.4 299.9M697.8 329.1L700.7 330.6M556.1 290.7L558.1 291.9M683.4 253.4L685.2 254.1M698.7 346.7L703.1 349.2M467.2 285.1L468.3 285.9M800.1 355.0L803.0 356.3M719.4 349.6L723.4 351.8M591.1 300.9L592.4 301.7M625.7 288.1L628.5 289.6M705.1 244.9L707.7 245.8M403.4 299.8L404.4 300.9M542.0 322.2L543.3 323.2M532.7 302.6L535.4 304.5M452.9 339.5L454.1 340.7M801.1 270.0L804.3 271.1M750.9 288.2L754.5 289.6M329.4 298.3L329.8 298.9M585.5 316.2L586.7 316.9M696.4 369.3L698.4 370.5M719.5 252.6L721.3 253.2M593.7 256.7L595.3 257.4M230.3 328.3L230.4 329.3M174.8 330.4L174.6 332.0M318.5 320.4L319.5 322.4M816.9 281.2L820.3 282.4M687.4 255.3L688.7 255.7M730.0 330.3L734.1 332.2M368.3 366.5L369.1 368.0M468.4 308.0L470.0 309.4M360.7 320.9L361.8 322.6M291.3 303.5L291.8 304.8M768.7 265.1L772.2 266.3M571.0 282.7L573.9 284.3M579.8 268.3L581.6 269.2M736.4 355.1L738.4 356.1M475.5 323.8L477.5 325.6M786.0 336.0L789.3 337.5M618.4 331.8L620.2 332.9M862.3 284.3L866.8 285.7M1002.5 346.3L1009.8 348.8M382.9 335.6L384.4 337.8M948.7 361.8L954.8 364.1M245.2 315.3L245.5 316.8M290.7 341.9L291.1 343.0M739.9 279.4L743.6 280.8M362.8 319.3L363.6 320.6M304.2 289.3L304.5 290.0M739.0 327.4L742.3 329.0M317.4 328.7L318.5 331.1M537.3 296.4L539.0 297.4M802.6 327.6L806.7 329.3M980.5 344.3L986.0 346.2M184.4 355.8L184.3 358.1M902.5 314.2L907.3 315.9M970.8 335.9L975.4 337.4M208.3 316.5L208.4 318.0M525.9 324.0L528.8 326.2M562.0 288.8L563.5 289.7M530.3 320.0L532.5 321.7M525.2 307.5L527.2 309.0M779.1 256.6L781.2 257.3M105.5 321.9L105.2 322.8M1020.8 343.5L1026.7 345.4M517.0 264.4L518.3 265.1M562.7 311.7L564.7 313.1M419.0 286.8L420.4 288.1M804.0 320.2L806.3 321.2M621.6 256.5L624.2 257.7M619.9 287.3L623.0 288.9M587.6 308.8L589.3 309.9M786.3 327.6L789.3 328.9M858.5 304.1L864.0 306.0M580.3 368.1L583.1 370.2M635.0 253.4L637.2 254.3M688.6 272.7L690.7 273.6M593.9 298.6L596.3 299.9M981.6 334.1L988.7 336.5M100.6 354.1L99.9 356.0M739.3 256.6L742.5 257.7M487.5 360.5L490.3 363.3M145.3 360.3L145.1 361.6M215.7 345.5L215.9 347.6M535.7 275.7L537.9 277.0M493.5 283.6L495.5 285.0M694.2 269.1L697.6 270.5M691.8 271.1L692.9 271.6M954.2 354.3L957.2 355.5M859.1 357.1L864.2 359.3M760.2 349.8L765.3 352.3M557.3 295.3L558.8 296.2M514.9 280.0L517.0 281.4M737.0 267.2L740.0 268.3M590.5 269.3L592.9 270.5M687.7 282.9L689.1 283.5M677.0 263.7L678.3 264.3M579.8 265.7L581.1 266.4M439.8 275.1L440.8 276.0M769.0 311.4L772.9 313.1M210.2 363.5L210.2 365.1M382.8 319.3L384.3 321.3M657.2 318.3L659.6 319.6M313.6 299.2L314.3 300.4M651.2 266.5L653.1 267.3M867.2 286.3L870.2 287.3M904.4 317.3L907.7 318.5M524.8 301.6L526.5 302.8M831.8 291.1L836.7 292.8M779.8 287.4L784.3 289.1M727.6 305.2L730.3 306.4M442.8 336.6L444.4 338.4M392.6 290.6L393.2 291.2M599.1 351.1L601.6 352.9M838.4 279.0L841.1 279.9M437.8 294.4L439.6 296.1M642.3 334.2L644.9 335.8M323.1 333.4L323.9 335.0M271.0 297.0L271.3 297.8M599.2 338.9L600.6 339.8M343.1 290.7L343.9 291.9M601.3 281.9L602.4 282.4M464.0 272.8L465.6 274.0M595.9 290.8L597.9 291.9M298.9 313.6L299.3 314.6M760.7 297.3L764.4 298.8M642.6 303.5L645.2 304.9M627.3 361.1L629.1 362.3M383.8 310.3L385.2 312.2M844.1 343.8L847.4 345.2M674.1 291.7L677.3 293.2M678.1 248.4L680.2 249.2M736.4 307.9L738.1 308.6M667.5 272.6L669.7 273.6M82.4 354.1L81.5 356.3M796.2 330.7L799.7 332.3M788.5 340.5L791.1 341.7M616.5 352.0L620.0 354.3M276.0 338.8L276.5 340.2M177.9 359.9L177.8 362.4M543.6 281.7L545.7 283.0M179.6 340.1L179.5 341.9M549.3 293.1L552.0 294.8M711.7 242.9L713.5 243.5M369.9 306.9L370.8 308.1M686.8 246.8L689.6 247.8M343.6 283.6L344.7 285.1M332.9 313.7L333.4 314.6M395.2 292.0L395.9 292.8M398.6 369.1L400.4 371.8M672.9 290.8L676.5 292.5M784.3 315.4L787.7 316.8M369.5 297.1L370.8 298.8M548.3 271.3L550.7 272.6M683.7 248.2L686.2 249.1M436.1 356.4L438.0 358.6M768.2 256.1L771.3 257.1M123.9 351.7L123.6 352.9M651.5 259.0L653.7 259.9M692.6 257.8L694.1 258.4M735.8 304.3L740.1 306.1M408.7 338.0L410.7 340.5M772.4 326.2L774.4 327.2M734.2 250.1L737.1 251.1M665.4 287.6L668.3 289.0M803.1 279.3L807.0 280.7M498.2 267.9L499.6 268.8M728.4 248.5L731.2 249.4M759.9 329.6L761.6 330.4M816.4 286.4L819.9 287.6M706.4 275.8L707.7 276.3M762.6 267.8L764.0 268.3M277.8 309.9L278.4 311.8M708.5 332.8L710.5 333.8M423.3 280.3L425.0 281.8M606.7 257.8L608.9 258.8M553.7 336.5L555.2 337.6M784.0 288.0L786.3 288.8M326.6 363.8L327.6 366.2M94.1 367.0L93.5 368.7M831.2 292.4L835.8 294.0M789.8 357.4L794.9 359.9M631.3 348.8L634.9 351.2M249.5 349.1L250.0 351.6M276.0 304.1L276.5 305.7M788.5 335.0L793.3 337.2M590.7 347.3L594.4 349.9M723.3 348.7L727.1 350.7M521.1 358.4L523.0 360.1M458.1 336.9L459.5 338.4M737.5 248.3L738.7 248.7M685.9 297.8L688.4 299.0M594.8 305.7L596.4 306.6M371.8 358.3L372.8 359.9M310.5 323.9L311.3 325.7M754.9 301.3L757.7 302.4M688.1 256.9L690.5 257.8M965.8 319.6L970.2 321.1M222.1 303.6L222.2 305.1M553.3 270.8L555.2 271.8M451.4 304.8L453.4 306.7M622.5 265.5L623.9 266.1M667.1 289.5L670.6 291.2M794.2 271.7L797.4 272.8M619.2 298.0L620.4 298.7M518.6 297.0L520.5 298.3M346.2 356.0L347.6 358.7M242.2 321.7L242.3 322.6M292.0 340.9L292.5 342.4M711.7 295.6L714.4 296.8M877.5 292.9L881.7 294.3M425.1 311.9L426.0 312.8M769.5 280.1L773.0 281.3M536.7 347.4L538.2 348.6M258.1 346.3L258.6 348.5M493.6 265.7L495.3 266.8M434.1 280.6L435.0 281.4M379.9 313.8L380.8 314.9M352.4 335.4L353.7 337.6M838.6 339.1L844.3 341.5M577.8 269.7L578.7 270.2M243.2 333.1L243.5 334.8M812.6 316.0L815.9 317.3M369.1 284.9L370.4 286.6M632.3 298.6L635.6 300.3M342.4 295.5L342.9 296.3M631.4 286.6L633.2 287.5M604.3 301.4L605.8 302.2M501.9 287.7L504.1 289.3M193.5 324.6L193.5 325.7M566.1 331.3L568.5 333.1M361.9 299.3L362.8 300.7M652.0 262.9L653.7 263.6M874.5 330.0L877.0 331.0M213.9 320.5L214.0 321.9M209.8 363.5L209.9 365.7M576.3 315.1L579.1 316.9M169.9 357.0L169.6 359.8M199.8 338.2L199.8 339.2M752.6 276.6L755.0 277.5M506.1 276.4L508.0 277.7M890.7 357.9L897.2 360.6M361.6 299.7L362.7 301.3M661.7 297.1L663.8 298.1M723.1 283.3L725.3 284.2M915.2 341.8L920.1 343.7M411.0 314.1L412.7 316.1M707.0 280.1L708.5 280.7M783.7 308.5L787.2 309.9M568.8 317.4L571.1 318.9M848.0 335.9L853.8 338.3M144.5 305.1L144.3 306.1M655.9 265.4L658.1 266.3M652.1 266.3L654.3 267.2M933.1 334.7L937.2 336.2M497.8 303.5L500.2 305.4M826.8 336.5L830.0 337.9M720.6 309.8L724.5 311.6M537.3 356.2L540.3 358.7M914.5 329.1L918.8 330.7M692.3 260.5L694.2 261.3M938.8 308.4L941.1 309.2M204.1 307.9L204.1 309.4M377.5 316.3L378.5 317.7M591.1 320.9L593.0 322.1M597.2 301.8L600.4 303.7M955.2 324.7L961.3 326.7M162.1 320.1L161.9 321.3M281.0 291.8L281.3 292.7M707.1 327.9L710.5 329.6M704.4 309.2L707.2 310.5M329.3 288.6L330.0 289.7M570.0 280.3L572.5 281.7M977.4 358.6L984.5 361.2M486.5 289.1L487.6 289.9M544.4 273.5L546.7 274.8M355.5 305.1L356.8 307.0M724.2 251.4L726.2 252.1M892.3 292.3L897.7 294.1M304.6 289.5L305.4 291.1M734.7 269.4L738.1 270.7M331.9 342.5L332.9 344.4M657.5 293.8L659.0 294.5M852.4 298.3L855.2 299.2M668.0 249.0L670.1 249.8M536.8 278.9L539.2 280.3M454.6 294.4L455.8 295.4M610.2 315.0L611.4 315.7M715.0 261.0L716.2 261.4M774.8 325.4L777.9 326.7M308.8 361.6L310.0 364.6M386.1 325.0L387.2 326.5M246.4 362.2L246.8 364.6M715.6 252.6L718.4 253.5M646.7 299.0L648.2 299.8M443.5 295.9L444.8 297.0M562.1 303.5L563.5 304.4M743.0 369.1L745.9 370.7M823.7 285.0L827.4 286.3M714.8 264.7L716.8 265.5M736.9 245.6L738.7 246.2M912.6 318.1L914.7 318.9M160.6 307.0L160.4 308.3M808.1 274.4L811.4 275.5M538.2 295.8L540.5 297.3M86.8 351.6L86.2 353.2M815.6 297.9L817.4 298.5M560.3 320.8L562.3 322.2M803.9 346.2L806.4 347.3M607.1 294.7L608.8 295.6M849.2 298.7L851.0 299.3M403.8 328.8L404.5 329.7M655.4 261.5L656.5 261.9M515.4 294.3L517.7 295.9M202.8 351.5L202.8 352.5M839.1 279.1L843.2 280.4M798.1 317.4L803.3 319.5M389.6 329.4L391.4 331.7M876.4 287.6L880.6 288.9M755.4 274.3L759.1 275.6M754.0 322.9L757.1 324.3M519.7 271.8L520.6 272.4M355.0 297.2L355.5 297.9M804.4 355.1L809.0 357.2M580.5 284.9L582.6 286.1M434.9 310.2L435.8 311.1M857.7 319.0L863.3 321.1M250.5 333.3L250.8 335.0M141.1 355.1L140.7 357.1M689.8 336.4L693.9 338.6M381.8 277.8L383.2 279.3M657.1 262.0L658.4 262.5M337.3 344.8L338.0 346.1M84.4 354.0L83.8 355.4M399.3 342.8L400.5 344.3M354.7 283.1L355.8 284.5M726.7 310.1L728.2 310.8M199.7 350.8L199.7 352.9M731.1 340.1L735.0 342.1M396.9 284.8L397.4 285.4M957.0 367.1L964.5 370.0M389.3 304.8L390.7 306.5M926.2 362.6L930.6 364.3M765.9 265.9L768.8 266.8M614.9 281.5L616.7 282.4M217.4 340.2L217.6 342.2M669.7 325.7L673.6 327.9M655.0 273.1L657.2 274.1M247.3 329.6L247.5 330.7M158.1 363.0L157.7 365.9M574.0 266.9L575.2 267.6M638.8 331.8L640.2 332.7M637.0 332.1L639.3 333.4M813.6 279.6L816.4 280.6M762.3 314.0L766.2 315.7M660.8 273.2L663.2 274.3M461.9 300.5L463.7 302.2M828.3 286.1L831.0 287.1M351.1 295.1L351.9 296.3M156.6 328.7L156.4 330.2M434.2 357.1L435.9 359.1M411.9 292.0L412.5 292.6M408.8 322.6L410.4 324.5M213.4 327.6L213.5 329.0M457.4 328.5L459.8 330.8M530.7 360.6L534.1 363.5M696.3 337.7L700.5 339.9M363.4 284.3L364.7 285.9M611.1 348.8L612.7 349.9M694.0 292.9L697.0 294.3M360.4 365.3L362.1 368.4M197.8 330.3L197.9 332.4M830.6 369.4L833.3 370.7M771.2 279.4L774.9 280.8M316.4 305.9L317.1 307.2M137.4 329.7L136.9 331.9M538.4 333.9L539.7 334.9M598.9 358.0L602.7 360.7M892.9 304.4L895.0 305.1M707.5 260.7L709.2 261.3M522.9 336.5L524.2 337.6M728.8 319.1L731.3 320.3M738.2 245.9L740.2 246.5M473.4 303.1L475.4 304.7M717.5 256.3L719.8 257.1M667.5 268.3L669.3 269.0M724.3 241.4L726.7 242.2M750.2 262.9L753.7 264.2M286.5 294.5L286.8 295.2M584.2 342.8L585.7 343.8M606.6 318.9L608.6 320.1M862.6 332.8L865.1 333.8M189.8 306.0L189.8 307.0M693.8 257.4L696.6 258.5M735.0 304.9L739.5 306.8M546.4 274.0L547.6 274.7M664.3 247.9L665.3 248.2M784.8 263.7L786.9 264.4M691.8 256.1L694.6 257.1M847.5 305.1L851.5 306.6M755.6 310.6L757.5 311.4M189.6 338.7L189.5 340.9M561.3 308.5L564.4 310.5M558.8 289.4L560.8 290.6M756.0 283.4L758.7 284.4M525.0 306.0L527.0 307.4M768.3 298.8L771.8 300.2M350.3 318.9L351.2 320.4M524.2 291.4L526.4 292.9M527.7 312.9L529.2 314.0M303.4 295.8L304.0 297.2M414.5 346.5L416.2 348.6M242.9 354.4L243.3 356.9M720.4 331.3L722.3 332.3M290.1 326.8L290.4 327.6M687.4 333.9L691.8 336.2M525.3 300.4L527.1 301.6M841.1 291.5L842.8 292.1M394.5 303.7L395.8 305.2M562.4 331.8L565.7 334.1M632.4 260.1L633.5 260.6M738.3 331.1L742.2 332.9M472.5 272.1L473.8 273.0M827.2 317.2L829.2 317.9M863.5 321.0L868.7 323.0M379.3 297.4L380.6 299.0M585.4 256.2L586.4 256.7M695.0 255.0L697.4 255.8M262.2 344.9L262.5 346.0M451.0 275.8L452.4 276.9M842.3 292.1L844.3 292.8M619.1 272.5L622.1 274.0M484.0 304.9L485.4 306.1M638.0 277.8L639.4 278.5M690.7 282.4L692.1 283.0M476.7 363.4L477.7 364.4M375.6 283.4L377.0 285.0M892.6 317.9L895.3 318.9M730.5 273.7L733.9 275.0M706.5 338.5L710.5 340.6M462.1 323.2L463.1 324.1M887.9 326.6L892.1 328.2M507.1 299.1L508.3 300.0M639.2 295.0L642.6 296.8M491.8 278.6L493.1 279.4M701.5 290.2L703.6 291.1M709.3 247.4L712.2 248.4M676.4 252.9L679.5 254.1M636.4 303.7L638.7 304.9M650.1 329.4L654.0 331.5M764.6 275.6L766.0 276.1M810.3 331.1L814.7 332.9M162.3 312.6L162.0 314.6M443.3 349.2L445.7 352.0M713.9 354.0L716.3 355.3M398.8 325.0L400.5 327.1M692.1 279.9L695.7 281.5M149.4 312.0L149.2 313.1M640.0 312.8L642.4 314.1M781.6 266.2L784.4 267.1M474.4 285.6L475.3 286.3M685.0 249.3L687.4 250.2M226.5 335.7L226.7 337.2M718.8 300.2L721.4 301.4M486.1 354.0L487.6 355.4M754.8 258.1L756.3 258.7M561.5 307.5L564.0 309.1M773.3 270.5L775.9 271.4M411.7 369.0L412.9 370.6M657.9 304.8L661.0 306.4M375.8 355.7L377.1 357.7M771.9 339.1L775.3 340.7M171.8 317.1L171.7 318.1M257.7 318.3L258.1 320.0M309.1 311.9L309.5 312.8M718.9 330.0L721.3 331.2M842.7 332.4L846.5 333.9M693.1 354.3L696.3 356.1M173.2 364.1L173.0 367.1M458.0 356.5L459.3 357.9M276.8 307.3L277.4 308.9M115.2 326.6L114.5 328.9M856.0 315.4L860.3 317.0M494.2 331.2L495.4 332.2M544.7 296.8L545.9 297.6M837.2 309.5L842.2 311.3M697.5 267.6L700.2 268.7M560.1 303.2L561.3 304.0M556.8 343.3L559.9 345.6M274.1 316.6L274.5 317.7M688.3 272.0L690.9 273.1M124.5 317.9L124.0 319.7M481.9 280.8L483.3 281.9M809.0 279.5L812.3 280.6M498.1 348.4L499.2 349.4M846.5 309.0L849.6 310.1M340.3 308.7L341.4 310.7M751.1 285.7L754.2 286.9M532.8 286.9L533.8 287.5M634.4 269.3L636.6 270.3M114.1 310.1L113.8 311.0M711.1 339.6L716.0 342.2M684.8 322.8L686.3 323.6M852.9 289.9L857.5 291.4M300.2 355.3L300.6 356.4M554.7 287.0L556.9 288.3M662.4 301.5L666.0 303.3M893.8 347.2L898.8 349.2M796.7 273.0L800.5 274.3M502.4 324.0L504.8 326.0M686.7 326.4L690.8 328.5M127.3 307.4L126.9 308.7M728.6 265.9L730.2 266.5M806.4 339.5L810.0 341.1M649.3 335.5L653.4 337.9M577.8 343.9L580.1 345.6M558.1 308.4L559.3 309.2M709.4 262.8L712.3 263.9M764.7 301.8L768.9 303.5M267.1 344.9L267.6 346.8M705.3 304.8L707.6 305.8M769.8 285.3L772.5 286.3M149.4 335.5L149.2 336.5M803.9 302.9L805.7 303.6M620.0 364.9L621.8 366.1M552.3 301.5L554.7 303.1M257.1 318.7L257.5 320.5M652.0 255.0L653.9 255.7M369.2 359.2L370.8 362.0M548.6 346.4L551.3 348.5M758.7 259.0L760.1 259.4M648.8 267.4L651.4 268.5M98.9 327.6L98.4 328.9M726.9 310.1L731.3 312.1M694.6 263.1L697.8 264.3M847.4 305.7L851.2 307.1M250.7 344.2L250.9 345.5M773.7 319.7L778.3 321.6M590.9 285.2L593.3 286.6M221.8 344.1L222.0 346.3M663.4 289.7L665.7 290.9M516.1 298.1L518.0 299.5M322.0 314.1L322.5 315.1M775.9 279.8L779.9 281.2M659.9 280.9L662.4 282.0M626.5 288.4L629.6 290.0M551.9 267.6L554.1 268.8M752.3 274.0L755.6 275.2M982.2 367.6L985.3 368.8M711.1 271.3L714.3 272.6M684.8 311.1L688.7 313.0M479.7 349.7L481.6 351.6M289.2 327.7L289.9 329.8M875.2 332.1L880.2 334.0M589.1 350.2L592.2 352.4M893.9 357.9L900.4 360.6M592.5 267.6L593.5 268.0M318.4 299.0L319.2 300.6M495.1 274.5L497.0 275.8M789.0 318.8L793.2 320.6M376.4 295.3L377.2 296.3M752.1 321.0L754.2 321.9M329.7 367.1L330.1 368.1M707.1 256.3L709.9 257.4M706.3 281.8L709.0 282.9M923.5 304.1L927.1 305.2M785.6 263.3L789.6 264.6M387.8 346.0L388.8 347.5M578.6 263.3L580.3 264.2M535.4 350.3L537.9 352.3M748.9 271.2L750.9 271.9M255.5 307.4L256.0 309.2M721.5 254.3L723.4 255.0M999.5 357.3L1007.6 360.2M807.2 266.5L808.8 267.1M342.0 364.7L343.2 367.1M231.1 311.8L231.3 313.0M176.1 318.2L176.0 319.1M922.4 367.2L928.2 369.6M945.2 334.2L947.8 335.1M742.8 349.7L745.4 351.1M484.6 294.7L486.7 296.3M723.7 358.5L727.8 360.7M598.1 353.2L600.8 355.1M751.4 314.6L753.9 315.7M511.7 291.6L512.5 292.1M610.1 321.3L612.5 322.8M827.7 336.3L830.1 337.3M330.9 332.0L331.6 333.4M509.5 304.7L512.1 306.7M686.7 293.5L689.8 294.9M732.6 257.0L735.3 257.9M813.3 276.4L817.4 277.8M712.7 281.6L714.4 282.3M743.0 293.2L745.4 294.2M952.4 336.2L955.6 337.4M384.4 278.3L385.0 279.0M382.1 302.1L383.1 303.3M745.9 273.3L747.9 274.0M608.9 270.2L611.7 271.6M688.7 328.0L690.3 328.9M364.1 349.9L365.7 352.7M974.3 326.5L980.5 328.5M646.0 270.1L647.6 270.8M261.2 316.3L261.7 318.4M695.3 278.8L698.9 280.3M235.6 314.0L235.8 315.3M657.6 258.5L660.2 259.6M132.9 319.6L132.5 321.4M338.4 312.9L339.5 314.8M614.5 270.7L617.0 271.8M831.9 346.1L836.8 348.2M263.1 296.4L263.5 297.8M580.4 257.0L582.7 258.1M776.5 279.4L779.5 280.4M405.8 337.6L406.7 338.8M415.4 296.6L417.1 298.4M693.0 353.4L695.8 355.0M886.4 321.3L891.5 323.2M910.0 298.6L914.2 300.0M258.9 303.8L259.4 305.3M783.1 340.8L785.9 342.1M707.6 251.7L710.4 252.7M684.0 253.0L686.1 253.8M656.4 260.9L659.3 262.1M792.4 274.3L794.4 275.0M225.1 328.5L225.3 329.9M827.9 282.7L831.6 284.0M393.5 370.0L395.0 372.1M121.7 322.7L121.2 324.5M418.0 285.5L419.1 286.6M250.8 302.3L251.1 303.7M984.3 333.1L987.3 334.1M556.7 309.4L559.8 311.4M745.3 331.6L747.9 332.9M516.7 350.5L518.5 352.2M520.3 273.4L521.7 274.3M835.6 277.0L838.8 278.1M869.9 367.6L875.8 370.2M538.6 262.4L539.7 263.0M256.9 349.8L257.4 352.1M668.7 250.0L671.3 251.0M610.8 274.3L613.0 275.4M780.2 263.1L783.7 264.2M931.7 315.4L935.7 316.8M488.4 341.2L489.6 342.3M157.6 348.4L157.5 349.6M777.9 279.3L781.9 280.7M695.4 306.2L697.5 307.2M563.3 300.4L566.0 302.1M506.2 356.1L509.4 359.0M824.8 272.0L829.2 273.4M866.0 294.9L869.8 296.1M717.4 323.5L719.4 324.4M450.2 277.9L451.0 278.6M826.0 275.4L828.0 276.0M434.2 279.4L435.5 280.6M297.1 319.1L297.8 320.8M697.4 244.6L699.9 245.5M619.4 325.5L621.7 326.9M931.6 354.0L938.1 356.5M554.9 338.2L558.0 340.4M199.7 332.6L199.7 333.5M543.4 329.9L546.5 332.2M808.9 282.0L812.0 283.0M219.8 337.7L220.0 339.9M312.1 333.8L313.0 336.0M1007.8 336.6L1010.6 337.5M490.1 295.0L491.1 295.7M212.2 342.4L212.3 343.4M951.7 332.9L956.3 334.5M316.7 312.3L317.4 313.9M637.8 329.4L641.3 331.4M540.4 304.0L542.7 305.5M717.0 246.2L719.1 247.0M858.1 328.0L864.0 330.3M650.5 345.6L654.9 348.3M717.5 283.8L719.1 284.4M707.2 248.8L710.3 249.9M910.9 316.5L916.9 318.6M284.2 299.1L284.8 300.6M453.9 285.8L455.3 286.9M331.2 322.5L332.4 324.6M500.0 335.9L501.8 337.5M350.7 342.0L351.7 343.8M534.6 301.4L535.6 302.1M734.6 364.3L739.1 366.8M208.7 299.1L208.8 300.4M518.8 292.8L520.5 294.0M101.2 313.6L100.4 315.7M691.2 251.3L693.7 252.2M577.9 343.6L581.2 346.0M717.0 253.7L720.0 254.8M975.7 328.4L980.0 329.9M610.7 345.4L614.0 347.6M458.2 359.7L460.0 361.7M718.0 273.5L719.9 274.3M869.1 290.0L873.4 291.4M415.2 277.4L416.2 278.3M524.8 272.9L527.1 274.4M615.2 320.3L616.6 321.1M322.0 337.8L322.9 339.8M670.8 367.4L674.2 369.6M781.4 329.9L783.5 330.9M670.5 316.9L674.0 318.8M794.3 275.4L798.3 276.7M763.7 295.6L766.6 296.7M529.9 315.8L531.3 316.8M743.8 337.6L745.7 338.5M291.4 312.1L291.9 313.5M160.9 305.5L160.7 306.3M354.9 298.8L355.7 299.9M838.3 280.1L842.0 281.3M708.0 257.6L709.5 258.1M909.1 325.7L914.6 327.7M848.8 366.1L852.6 367.8M613.7 302.9L615.6 303.9" stroke="#a9722e" stroke-opacity="0.22" stroke-width="1.6" fill="none" filter="url(#soft)"/>
<ellipse cx="692" cy="456" rx="50" ry="26" fill="url(#glow)" transform="rotate(-18 692 456)"/>
<ellipse cx="560" cy="498" rx="44" ry="22" fill="url(#glow)" transform="rotate(-18 560 498)"/>
<ellipse cx="806" cy="420" rx="44" ry="22" fill="url(#glow)" transform="rotate(-18 806 420)"/>
<ellipse cx="912" cy="388" rx="40" ry="20" fill="url(#glow)" transform="rotate(-18 912 388)" opacity="0.8"/>
<ellipse cx="985" cy="364" rx="36" ry="18" fill="url(#glow)" transform="rotate(-18 985 364)" opacity="0.8"/>
<ellipse cx="436" cy="542" rx="40" ry="18" fill="url(#glow)" transform="rotate(-18 436 542)" opacity="0.5"/>
<ellipse cx="24" cy="540" rx="30" ry="34" fill="url(#glow)" opacity="0.7"/>
<ellipse cx="100" cy="330" rx="22" ry="26" fill="url(#glow)" opacity="0.35"/>
</g>
<!-- sphere -->
<line x1="288.8" y1="321" x2="295.8" y2="379" stroke="#8a5a28" stroke-width="0.9"/>
<g clip-path="url(#upclip)"><ellipse cx="281.8" cy="275.4" rx="49.8" ry="46.3" fill="url(#shell)"/>
<ellipse cx="281.8" cy="275.4" rx="49.8" ry="46.3" fill="url(#mesh)" fill-opacity="0.72"/></g>
<path d="M236.3 276.4 Q249 269.6 264 267.2" stroke="#ffffff" stroke-width="1.7" stroke-dasharray="1.7 0.9" fill="none"/>
<path d="M264 267.2 Q300 261.5 333 270.5" stroke="#c8c8c8" stroke-width="0.7" fill="none" stroke-opacity="0.8"/>
<g mask="url(#ballmask)"><ellipse cx="287.6" cy="276.2" rx="30.2" ry="28.6" fill="url(#ball)"/>
<ellipse cx="287.6" cy="276.2" rx="30.2" ry="28.6" fill="url(#mesh2)" fill-opacity="0.6"/></g>
<g clip-path="url(#loclip)"><ellipse cx="281.8" cy="275.4" rx="49.8" ry="46.3" fill="url(#mesh3)" fill-opacity="0.45"/>
<ellipse cx="281.8" cy="275.4" rx="49.8" ry="46.3" fill="none" stroke="#5e5a52" stroke-width="1" stroke-opacity="0.85"/></g>
<g clip-path="url(#upclip)"><ellipse cx="281.8" cy="275.4" rx="49.8" ry="46.3" fill="none" stroke="#c4c4c4" stroke-width="1.1" stroke-opacity="0.8"/></g>
<path d="M232.3 281.8 Q 262 297.5 331 276.2 L 337.5 271.4" stroke="#d4d4d4" stroke-width="2" fill="none" stroke-linecap="round"/>
</svg>
<div id="titlebar" class="abs"></div>
<div id="menubar" class="abs"></div>
<div id="toolbar" class="abs"></div>
<div id="tabbar" class="abs"></div>
<div id="panel" class="abs"></div>
<div id="bottombar" class="abs"></div>
<div id="bottomline" class="abs"></div>
<svg id="chrome" width="1200" height="675" viewBox="0 0 1200 675" style="position:absolute;left:0;top:0;will-change:transform;font-family:'Liberation Sans',sans-serif"><text x="14.0" y="10.0" font-size="8.2" fill="#f4f4f4" font-weight="bold" textLength="86.1" lengthAdjust="spacingAndGlyphs">Vienna MIR Pro 3D 7.0.402</text>
<g><path d="M2 5.2Q3 2 6.4 2.2Q9.6 2.4 10.2 5.4Q10.6 8.6 8.8 10.4Q6.6 11.8 4.2 10.6Q1.6 8.6 2 5.2Z" fill="#3b201a"/><path d="M5.4 3.8Q8.4 3 8.8 5.6Q8.6 7.6 7 8.6Q5.6 9.4 4.4 8.6L5 7.4Q6.4 7.6 6.6 6Q5 6.4 4.6 5Q4.6 4.2 5.4 3.8Z" fill="#ead9bd"/><rect x="1.8" y="5.4" width="2.2" height="2" fill="#d9d4cc"/><circle cx="6.6" cy="4.3" r="0.6" fill="#f06aa0"/><circle cx="8.4" cy="6.9" r="0.6" fill="#f06aa0"/><circle cx="4.6" cy="6.6" r="0.5" fill="#f06aa0"/><path d="M4.4 1.8l.5-.8M7.8 1.9l.4-.7M10 9.6l.8.4M6.6 11.4l.2.8" stroke="#a8621e" stroke-width="0.7"/></g>
<path d="M1124 6.7H1131.2" stroke="#f4f4f4" stroke-width="1.4"/>
<path d="M1153.2 3.9H1158.2V8.6" stroke="#f4f4f4" stroke-width="1.5" fill="none"/>
<path d="M1181.2 3.2L1187.8 8.8M1187.8 3.2L1181.2 8.8" stroke="#f4f4f4" stroke-width="1.2"/>
<text x="5.5" y="24.1" font-size="8.2" fill="#d2d4dc" textLength="10.5" lengthAdjust="spacingAndGlyphs">File</text>
<text x="26.0" y="24.1" font-size="8.2" fill="#d2d4dc" textLength="13.0" lengthAdjust="spacingAndGlyphs">Edit</text>
<text x="49.0" y="24.1" font-size="8.2" fill="#d2d4dc" textLength="15.0" lengthAdjust="spacingAndGlyphs">View</text>
<text x="75.0" y="24.1" font-size="8.2" fill="#d2d4dc" textLength="26.0" lengthAdjust="spacingAndGlyphs">Options</text>
<path d="M4.3 34.6H10.2L13 37.4V44H4.3Z" fill="#c3c6cf"/><path d="M10.2 34.6V37.4H13" fill="none" stroke="#2d2f3b" stroke-width="0.7"/>
<path d="M20.3 35.2H24.2L25.4 36.6H29.6V38.2H23L20.3 42.8Z" fill="#c3c6cf"/><path d="M23.4 38.9H31.4L28.8 43.4H20.8Z" fill="#c3c6cf"/>
<path d="M37 34.6H45.5L47.2 36.3V44H37Z" fill="#c3c6cf"/><rect x="39.3" y="34.6" width="4.8" height="3" fill="#2d2f3b"/><rect x="42.3" y="35" width="1.2" height="2.2" fill="#c3c6cf"/>
<rect x="58.7" y="33.0" width="2.6" height="12" fill="#c3c6cf" transform="rotate(0 60 39)"/><rect x="58.7" y="33.0" width="2.6" height="12" fill="#c3c6cf" transform="rotate(45 60 39)"/><rect x="58.7" y="33.0" width="2.6" height="12" fill="#c3c6cf" transform="rotate(90 60 39)"/><rect x="58.7" y="33.0" width="2.6" height="12" fill="#c3c6cf" transform="rotate(135 60 39)"/><circle cx="60" cy="39" r="4.2" fill="#c3c6cf"/><circle cx="60" cy="39" r="2.1" fill="#2d2f3b"/>
<path d="M70.2 36.6Q73.6 34.2 78.6 35.6L79.4 40Q78.6 43.4 75.4 44Q71.6 42.2 70.2 36.6Z" fill="#c3c6cf"/><path d="M77.4 34.2Q81.4 32.6 85.2 35.2Q85.6 41.6 82.4 45.2Q78.2 44.4 77.2 39.6Z" fill="#c3c6cf" stroke="#2d2f3b" stroke-width="0.7"/><circle cx="73" cy="38.2" r="0.75" fill="#2d2f3b"/><circle cx="76.2" cy="38.6" r="0.75" fill="#2d2f3b"/><circle cx="80" cy="37.6" r="0.75" fill="#2d2f3b"/><circle cx="83.2" cy="38" r="0.75" fill="#2d2f3b"/><path d="M73.4 41.2Q74.8 42.2 76.4 41.2" stroke="#2d2f3b" stroke-width="0.6" fill="none"/><path d="M80 42.4Q81.6 41.2 83.2 42.2" stroke="#2d2f3b" stroke-width="0.6" fill="none"/>
<circle cx="95.5" cy="39.2" r="5" fill="none" stroke="#c3c6cf" stroke-width="1.1"/><rect x="94.9" y="38.4" width="1.3" height="3.4" fill="#c3c6cf"/><circle cx="95.5" cy="36.8" r="0.8" fill="#c3c6cf"/>
<text x="1092.4" y="43" font-size="8.8" font-weight="bold" fill="#5b5d68" textLength="101.7" lengthAdjust="spacing">VIENNA MIR PRO 3D</text>
<rect x="489.0" y="51.5" width="147.0" height="17.0" fill="#a3b2ff"/>
<text x="8.8" y="62.8" font-size="7.7" fill="#b0b3c0" textLength="118.7" lengthAdjust="spacingAndGlyphs">Vienna Konzerthaus Grosser Saal</text>
<path d="M137.9 56.8L144.5 63.4M144.5 56.8L137.9 63.4" stroke="#d8dae4" stroke-width="1.1"/>
<text x="158.5" y="62.8" font-size="7.7" fill="#b0b3c0" textLength="77.0" lengthAdjust="spacingAndGlyphs">Pernegg Klosterkirche</text>
<path d="M245.7 56.8L252.3 63.4M252.3 56.8L245.7 63.4" stroke="#d8dae4" stroke-width="1.1"/>
<text x="263.6" y="62.8" font-size="7.7" fill="#b0b3c0" textLength="31.9" lengthAdjust="spacingAndGlyphs">Medieval</text>
<path d="M303.7 56.8L310.3 63.4M310.3 56.8L303.7 63.4" stroke="#d8dae4" stroke-width="1.1"/>
<rect x="313.8" y="50.8" width="1.0" height="17.7" fill="#15161c"/>
<text x="325.7" y="62.8" font-size="7.7" fill="#b0b3c0" textLength="140.0" lengthAdjust="spacingAndGlyphs">Vienna Synchron Stage Stage A - Wide</text>
<path d="M477.5 56.8L484.1 63.4M484.1 56.8L477.5 63.4" stroke="#d8dae4" stroke-width="1.1"/>
<text x="499.3" y="62.8" font-size="7.7" fill="#161821" textLength="114.0" lengthAdjust="spacingAndGlyphs">Vienna Synchron Stage Stage A</text>
<path d="M624.7 56.8L631.3 63.4M631.3 56.8L624.7 63.4" stroke="#10111a" stroke-width="1.1"/>
<path d="M642.3 60.3H650M646.2 56.4V64.2" stroke="#c8cad4" stroke-width="1.1"/>
<rect x="1188.7" y="52.0" width="5.5" height="608.5" fill="#2f313a"/>
<rect x="1194.2" y="52.0" width="5.8" height="608.5" fill="#2b2d35"/>
<rect x="1033.2" y="51.0" width="1.0" height="609.5" fill="#23242c"/>
<rect x="1038.7" y="51.0" width="149.3" height="8.0" fill="#2f313b"/>
<rect x="1039.0" y="58.8" width="149.0" height="1.0" fill="#17181e"/>
<text x="1051.5" y="83.3" font-size="7.6" fill="#b9bcc8" font-weight="bold" textLength="26.5" lengthAdjust="spacingAndGlyphs">Volume</text>
<text x="1046.0" y="94.0" font-size="6.5" fill="#9a9daa" textLength="6.0" lengthAdjust="spacingAndGlyphs">-6</text>
<text x="1081.0" y="94.0" font-size="6.5" fill="#9a9daa" textLength="2.0" lengthAdjust="spacingAndGlyphs">-</text>
<rect x="1044.8" y="102.0" width="8.6" height="115.0" fill="#282a33"/>
<rect x="1044.8" y="102.0" width="1.0" height="115.0" fill="#202129"/>
<rect x="1077.2" y="102.0" width="6.0" height="115.0" fill="#2a2c35"/>
<rect x="1077.2" y="102.0" width="1.0" height="115.0" fill="#17181e"/>
<rect x="1077.2" y="102.0" width="6.0" height="1.0" fill="#17181e"/>
<rect x="1044.8" y="145.0" width="8.4" height="72.0" fill="#a3b1fb" rx="1"/>
<rect x="1040.0" y="132.2" width="17.8" height="11.4" fill="#4b4d58" rx="1.5"/>
<rect x="1040.0" y="132.2" width="17.8" height="1.0" fill="#666874"/>
<rect x="1044.0" y="137.5" width="9.6" height="0.9" fill="#9a9ca6"/>
<text x="1063.0" y="140.3" font-size="6.5" fill="#9a9daa" textLength="9.0" lengthAdjust="spacingAndGlyphs">- 0 -</text>
<text x="1096.0" y="83.3" font-size="7.6" fill="#b9bcc8" font-weight="bold" textLength="51.0" lengthAdjust="spacingAndGlyphs">Dry/Wet Ratio</text>
<text x="1173.0" y="83.5" font-size="7" fill="#9699a6" textLength="14.5" lengthAdjust="spacingAndGlyphs">57%</text>
<rect x="1096.0" y="89.3" width="91.6" height="7.8" fill="#292b34" rx="1"/>
<rect x="1096.0" y="89.3" width="91.6" height="1.0" fill="#22232b"/>
<rect x="1096.0" y="89.3" width="30.6" height="7.8" fill="#9dadf8" rx="1"/>
<rect x="1126.8" y="89.5" width="6.4" height="7.6" fill="#4a4c56" rx="1"/>
<rect x="1129.2" y="90.8" width="0.7" height="5.0" fill="#b5b7c0"/>
<rect x="1130.7" y="90.8" width="0.7" height="5.0" fill="#b5b7c0"/>
<rect x="1141.2" y="98.5" width="0.8" height="3.5" fill="#6a6c76"/>
<text x="1096.0" y="112.2" font-size="7.6" fill="#b9bcc8" font-weight="bold" textLength="66.0" lengthAdjust="spacingAndGlyphs">Wet Signal Polarity</text>
<rect x="1178.0" y="105.0" width="10.0" height="9.8" fill="#1c1d24" rx="1" stroke="#15161b" stroke-width="0.8"/>
<text x="1183.0" y="112.3" font-size="7.5" fill="#9a9daa" text-anchor="middle">ø</text>
<text x="1096.0" y="134.6" font-size="7.6" fill="#b9bcc8" font-weight="bold" textLength="30.0" lengthAdjust="spacingAndGlyphs">Rotation</text>
<text x="1174.0" y="134.4" font-size="7" fill="#9699a6" textLength="13.5" lengthAdjust="spacingAndGlyphs">180°</text>
<rect x="1096.0" y="138.1" width="91.6" height="7.9" fill="#292b34" rx="1"/>
<rect x="1096.0" y="138.1" width="83.6" height="7.9" fill="#e2b35f" rx="1"/>
<rect x="1180.0" y="138.3" width="7.0" height="7.6" fill="#4a4c56" rx="1"/>
<rect x="1182.6" y="139.6" width="0.7" height="5.0" fill="#b5b7c0"/>
<rect x="1184.1" y="139.6" width="0.7" height="5.0" fill="#b5b7c0"/>
<rect x="1141.2" y="148.0" width="0.8" height="3.5" fill="#6a6c76"/>
<text x="1096.0" y="170.8" font-size="7.6" fill="#b9bcc8" font-weight="bold" textLength="20.0" lengthAdjust="spacingAndGlyphs">Width</text>
<text x="1178.0" y="170.8" font-size="7" fill="#9699a6" textLength="9.0" lengthAdjust="spacingAndGlyphs">1m</text>
<rect x="1096.0" y="173.3" width="91.4" height="8.5" fill="#22232b" rx="1"/>
<rect x="1096.0" y="173.3" width="91.4" height="1.0" fill="#191a20"/>
<rect x="1120.4" y="174.0" width="42.5" height="7.2" fill="#e2b35f" rx="1"/>
<rect x="1116.8" y="174.0" width="3.4" height="7.2" fill="#4a4c56" rx="0.8"/>
<rect x="1163.0" y="174.0" width="3.4" height="7.2" fill="#4a4c56" rx="0.8"/>
<rect x="1118.6" y="175.2" width="0.7" height="4.8" fill="#b5b7c0"/>
<rect x="1164.4" y="175.2" width="0.7" height="4.8" fill="#b5b7c0"/>
<rect x="1141.2" y="183.3" width="0.8" height="3.2" fill="#6a6c76"/>
<rect x="1096.7" y="196.0" width="27.3" height="21.0" fill="#2c3b52" rx="2"/>
<rect x="1128.2" y="196.0" width="27.0" height="21.0" fill="#4b3431" rx="2"/>
<rect x="1158.9" y="196.0" width="28.3" height="21.0" fill="#5b5349" rx="2"/>
<text x="1132.6" y="208.9" font-size="6.9" fill="#e4e2e0" font-weight="bold" textLength="18.0" lengthAdjust="spacingAndGlyphs">MUTE</text>
<text x="1164.0" y="208.9" font-size="6.9" fill="#d6d2ca" textLength="17.8" lengthAdjust="spacingAndGlyphs">SOLO</text>
<g stroke="#a2a6ae" stroke-width="1" fill="none"><ellipse cx="1107.6" cy="204.6" rx="3.8" ry="2.6" transform="rotate(-30 1107.6 204.6)"/><path d="M1108.4 200.6Q1112.8 199.8 1112.6 203.6Q1112 206.6 1113.4 208.6"/><path d="M1111.6 210.4h4.6M1113.9 208.2v4.4M1112.3 208.8l3.2 3.2M1115.5 208.8l-3.2 3.2" stroke-width="0.7"/></g>
<text x="1039.6" y="236.3" font-size="7.6" fill="#b9bcc8" font-weight="bold" textLength="47.4" lengthAdjust="spacingAndGlyphs">Room EQ Grp.</text>
<rect x="1093.3" y="227.4" width="94.3" height="11.2" fill="#0c0d14" rx="2"/>
<text x="1097.7" y="236.3" font-size="7.3" fill="#c3caff" font-weight="bold" textLength="46.3" lengthAdjust="spacingAndGlyphs">26: Solo Voices</text>
<path d="M1176.0 231.4L1179.6 234.9L1183.2 231.4" stroke="#dcdfe8" stroke-width="1" fill="none"/>
<defs><linearGradient id="hg" x1="0" x2="1" y1="0" y2="0"><stop offset="0" stop-color="#656a70"/><stop offset="0.45" stop-color="#797e83"/><stop offset="1" stop-color="#6f747a"/></linearGradient></defs>
<rect x="1033.4" y="246.1" width="160.8" height="18.5" fill="url(#hg)"/>
<path d="M1038.6 254.2h3.2l-1.6 2.6z" fill="#1d1f27"/>
<text x="1046.3" y="258.7" font-size="8.2" fill="#1d1f27" font-weight="bold" textLength="28.9" lengthAdjust="spacingAndGlyphs">OUTPUT</text>
<text x="1039.6" y="281.0" font-size="7.6" fill="#b0b3be" textLength="95.9" lengthAdjust="spacingAndGlyphs">Room Equalizers (wet only)</text>
<rect x="1160.0" y="272.0" width="11.0" height="11.0" fill="#4c4e58" rx="1.5"/>
<text x="1165.5" y="280.2" font-size="7.5" fill="#b8bac4" font-weight="bold" text-anchor="middle">e</text>
<rect x="1176.0" y="272.1" width="11.3" height="11.3" fill="#6373bd" rx="1.5"/>
<path d="M1179.75 275.80A3 3 0 1 0 1183.55 275.80" stroke="#f2f3f8" stroke-width="1" fill="none"/><path d="M1181.65 274.40V277.70" stroke="#f2f3f8" stroke-width="1"/>
<rect x="1039.2" y="290.1" width="148.4" height="11.6" fill="#0c0d14" rx="2"/>
<text x="1043.3" y="299.0" font-size="7.3" fill="#c3caff" font-weight="bold" textLength="32.7" lengthAdjust="spacingAndGlyphs">0 : Default</text>
<path d="M1176.0 294.3L1179.6 297.8L1183.2 294.3" stroke="#dcdfe8" stroke-width="1" fill="none"/>
<rect x="1039.3" y="309.2" width="148.4" height="46.8" fill="#1a1b22" rx="2"/>
<rect x="1048.1" y="310.0" width="0.8" height="45.2" fill="#3c3e47"/>
<rect x="1059.2" y="310.0" width="0.8" height="45.2" fill="#3c3e47"/>
<rect x="1093.0" y="310.0" width="0.8" height="45.2" fill="#3c3e47"/>
<rect x="1108.1" y="310.0" width="0.8" height="45.2" fill="#3c3e47"/>
<rect x="1123.2" y="310.0" width="0.8" height="45.2" fill="#3c3e47"/>
<rect x="1131.1" y="310.0" width="0.8" height="45.2" fill="#3c3e47"/>
<rect x="1148.9" y="310.0" width="0.8" height="45.2" fill="#3c3e47"/>
<rect x="1161.2" y="310.0" width="0.8" height="45.2" fill="#3c3e47"/>
<rect x="1172.1" y="310.0" width="0.8" height="45.2" fill="#3c3e47"/>
<rect x="1182.2" y="310.0" width="0.8" height="45.2" fill="#3c3e47"/>
<rect x="1074.2" y="310.0" width="0.6" height="45.2" fill="#282a32"/>
<rect x="1083.2" y="310.0" width="0.6" height="45.2" fill="#282a32"/>
<rect x="1101.2" y="310.0" width="0.6" height="45.2" fill="#282a32"/>
<rect x="1116.2" y="310.0" width="0.6" height="45.2" fill="#282a32"/>
<rect x="1139.7" y="310.0" width="0.6" height="45.2" fill="#282a32"/>
<rect x="1155.5" y="310.0" width="0.6" height="45.2" fill="#282a32"/>
<rect x="1167.0" y="310.0" width="0.6" height="45.2" fill="#282a32"/>
<rect x="1177.5" y="310.0" width="0.6" height="45.2" fill="#282a32"/>
<rect x="1040.0" y="322.2" width="147.0" height="0.6" fill="#33353e"/>
<rect x="1040.0" y="343.4" width="147.0" height="0.6" fill="#33353e"/>
<path d="M1040 332.3H1068Q1074 332.3 1077 334.2L1080 334.6Q1084 335 1088.5 335.2Q1092 333 1096 332.5H1108Q1113 333 1117 335.6Q1121 335 1124.8 333.8L1130 333.2H1146Q1150 332.8 1152.2 333.2L1158 333.5H1187" stroke="#b4b6bc" stroke-width="0.9" fill="none"/>
<path d="M1077.0 334.4L1079.6 331.4L1082.2 334.4L1079.6 337.4Z" fill="#8a8c94" stroke="#c0c2c8" stroke-width="0.6"/>
<path d="M1085.9 335.1L1088.5 332.1L1091.1 335.1L1088.5 338.1Z" fill="#8a8c94" stroke="#c0c2c8" stroke-width="0.6"/>
<path d="M1114.5 335.6L1117.1 332.6L1119.7 335.6L1117.1 338.6Z" fill="#8a8c94" stroke="#c0c2c8" stroke-width="0.6"/>
<path d="M1149.6 333.3L1152.2 330.3L1154.8 333.3L1152.2 336.3Z" fill="#8a8c94" stroke="#c0c2c8" stroke-width="0.6"/>
<circle cx="1124.8" cy="333.8" r="2.5" fill="#8a8c94" stroke="#c0c2c8" stroke-width="0.6"/>
<rect x="1033.4" y="362.2" width="160.8" height="1.0" fill="#1b1c23"/>
<text x="1039.6" y="379.3" font-size="7.6" fill="#b4b7c2" textLength="59.6" lengthAdjust="spacingAndGlyphs">Main Microphone</text>
<rect x="1176.0" y="370.0" width="11.0" height="11.0" fill="#4c4e58" rx="1.5"/>
<text x="1181.5" y="378.2" font-size="7.5" fill="#b8bac4" font-weight="bold" text-anchor="middle">e</text>
<rect x="1039.2" y="388.1" width="148.4" height="12.2" fill="#0c0d14" rx="2"/>
<text x="1043.0" y="397.0" font-size="7.3" fill="#c3caff" font-weight="bold" textLength="88.5" lengthAdjust="spacingAndGlyphs">Stereo - MIR 3D HOA DeMx</text>
<path d="M1176.0 392.6L1179.6 396.1L1183.2 392.6" stroke="#dcdfe8" stroke-width="1" fill="none"/>
<text x="1039.6" y="416.0" font-size="7.6" fill="#b9bcc8" font-weight="bold" textLength="27.4" lengthAdjust="spacingAndGlyphs">Position</text>
<rect x="1071.0" y="407.1" width="116.7" height="11.7" fill="#0c0d14" rx="2"/>
<text x="1074.4" y="416.0" font-size="7.3" fill="#c3caff" font-weight="bold" textLength="30.4" lengthAdjust="spacingAndGlyphs">Rear Wall</text>
<path d="M1176.1 411.4L1179.7 414.9L1183.3 411.4" stroke="#dcdfe8" stroke-width="1" fill="none"/>
<rect x="1039.2" y="426.2" width="148.6" height="49.1" fill="none" rx="1.5" stroke="#1c1d24" stroke-width="1"/>
<text x="1046.3" y="443.0" font-size="7.6" fill="#b9bcc8" font-weight="bold" textLength="21.9" lengthAdjust="spacingAndGlyphs">Offset</text>
<text x="1046.3" y="464.1" font-size="7.6" fill="#b9bcc8" font-weight="bold" textLength="37.2" lengthAdjust="spacingAndGlyphs">Rotation Z</text>
<text x="1080.0" y="443.0" font-size="7.4" fill="#b9bcc8" font-weight="bold" textLength="4.5" lengthAdjust="spacingAndGlyphs">X</text>
<text x="1114.0" y="443.0" font-size="7.4" fill="#b9bcc8" font-weight="bold" textLength="4.5" lengthAdjust="spacingAndGlyphs">Y</text>
<text x="1148.0" y="443.0" font-size="7.4" fill="#b9bcc8" font-weight="bold" textLength="4.5" lengthAdjust="spacingAndGlyphs">Z</text>
<text x="1114.0" y="464.1" font-size="7.4" fill="#b9bcc8" font-weight="bold" textLength="4.5" lengthAdjust="spacingAndGlyphs">Y</text>
<text x="1148.0" y="464.1" font-size="7.4" fill="#b9bcc8" font-weight="bold" textLength="4.5" lengthAdjust="spacingAndGlyphs">X</text>
<rect x="1088.0" y="434.4" width="23.4" height="11.2" fill="#0c0d14" rx="2"/>
<rect x="1088.0" y="456.0" width="23.4" height="10.7" fill="#0c0d14" rx="2"/>
<text x="1099.7" y="442.5" font-size="6.2" fill="#dfe2f0" font-weight="bold" text-anchor="middle">0</text>
<text x="1099.7" y="463.9" font-size="6.2" fill="#dfe2f0" font-weight="bold" text-anchor="middle">0°</text>
<rect x="1121.1" y="434.4" width="23.4" height="11.2" fill="#0c0d14" rx="2"/>
<rect x="1121.1" y="456.0" width="23.4" height="10.7" fill="#0c0d14" rx="2"/>
<text x="1132.8" y="442.5" font-size="6.2" fill="#dfe2f0" font-weight="bold" text-anchor="middle">0</text>
<text x="1132.8" y="463.9" font-size="6.2" fill="#dfe2f0" font-weight="bold" text-anchor="middle">0°</text>
<rect x="1155.2" y="434.4" width="23.4" height="11.2" fill="#0c0d14" rx="2"/>
<rect x="1155.2" y="456.0" width="23.4" height="10.7" fill="#0c0d14" rx="2"/>
<text x="1166.9" y="442.5" font-size="6.2" fill="#dfe2f0" font-weight="bold" text-anchor="middle">0</text>
<text x="1166.9" y="463.9" font-size="6.2" fill="#dfe2f0" font-weight="bold" text-anchor="middle">0°</text>
<rect x="1033.4" y="481.8" width="160.8" height="1.0" fill="#1b1c23"/>
<text x="1039.2" y="499.2" font-size="7.6" fill="#b9bcc8" font-weight="bold" textLength="80.8" lengthAdjust="spacingAndGlyphs">Secondary Microphone</text>
<rect x="1160.0" y="490.3" width="11.0" height="11.0" fill="#3b3d47" rx="1.5"/>
<text x="1165.5" y="498.5" font-size="7.5" fill="#6f727c" font-weight="bold" text-anchor="middle">e</text>
<rect x="1176.0" y="490.1" width="11.3" height="11.3" fill="#55575f" rx="1.5"/>
<path d="M1179.75 493.80A3 3 0 1 0 1183.55 493.80" stroke="#f2f3f8" stroke-width="1" fill="none"/><path d="M1181.65 492.40V495.70" stroke="#f2f3f8" stroke-width="1"/>
<rect x="1039.2" y="508.2" width="148.4" height="12.4" fill="#1c1d25" rx="2"/>
<text x="1043.0" y="517.1" font-size="7.3" fill="#8d909c" textLength="100.8" lengthAdjust="spacingAndGlyphs">Stereo - 115° Cardioids delayed</text>
<path d="M1176.0 512.8L1179.6 516.3L1183.2 512.8" stroke="#8a8d98" stroke-width="1" fill="none"/>
<text x="1039.6" y="535.8" font-size="7.6" fill="#b9bcc8" font-weight="bold" textLength="27.4" lengthAdjust="spacingAndGlyphs">Position</text>
<rect x="1071.0" y="527.0" width="116.7" height="11.9" fill="#1c1d25" rx="2"/>
<text x="1074.4" y="536.3" font-size="7.3" fill="#8d909c" textLength="30.4" lengthAdjust="spacingAndGlyphs">Rear Wall</text>
<path d="M1176.1 531.4L1179.7 534.9L1183.3 531.4" stroke="#8a8d98" stroke-width="1" fill="none"/>
<rect x="1039.2" y="546.3" width="148.6" height="49.1" fill="none" rx="1.5" stroke="#1c1d24" stroke-width="1"/>
<text x="1046.3" y="563.0" font-size="7.6" fill="#b9bcc8" font-weight="bold" textLength="21.9" lengthAdjust="spacingAndGlyphs">Offset</text>
<text x="1046.3" y="584.2" font-size="7.6" fill="#b9bcc8" font-weight="bold" textLength="37.2" lengthAdjust="spacingAndGlyphs">Rotation Z</text>
<text x="1080.0" y="563.0" font-size="7.4" fill="#b9bcc8" font-weight="bold" textLength="4.5" lengthAdjust="spacingAndGlyphs">X</text>
<text x="1114.0" y="563.0" font-size="7.4" fill="#b9bcc8" font-weight="bold" textLength="4.5" lengthAdjust="spacingAndGlyphs">Y</text>
<text x="1148.0" y="563.0" font-size="7.4" fill="#b9bcc8" font-weight="bold" textLength="4.5" lengthAdjust="spacingAndGlyphs">Z</text>
<text x="1114.0" y="584.2" font-size="7.4" fill="#b9bcc8" font-weight="bold" textLength="4.5" lengthAdjust="spacingAndGlyphs">Y</text>
<text x="1148.0" y="584.2" font-size="7.4" fill="#b9bcc8" font-weight="bold" textLength="4.5" lengthAdjust="spacingAndGlyphs">X</text>
<rect x="1088.0" y="554.2" width="23.4" height="11.2" fill="#1f2028" rx="2"/>
<rect x="1088.0" y="576.2" width="23.4" height="10.7" fill="#1f2028" rx="2"/>
<text x="1099.7" y="562.3" font-size="6.2" fill="#80838e" font-weight="bold" text-anchor="middle">0</text>
<rect x="1121.1" y="554.2" width="23.4" height="11.2" fill="#1f2028" rx="2"/>
<rect x="1121.1" y="576.2" width="23.4" height="10.7" fill="#1f2028" rx="2"/>
<text x="1132.8" y="562.3" font-size="6.2" fill="#80838e" font-weight="bold" text-anchor="middle">0</text>
<rect x="1155.2" y="554.2" width="23.4" height="11.2" fill="#1f2028" rx="2"/>
<rect x="1155.2" y="576.2" width="23.4" height="10.7" fill="#1f2028" rx="2"/>
<text x="1166.9" y="562.3" font-size="6.2" fill="#80838e" font-weight="bold" text-anchor="middle">0</text>
<text x="1039.0" y="609.0" font-size="7.6" fill="#b9bcc8" font-weight="bold" textLength="103.0" lengthAdjust="spacingAndGlyphs">Secondary Mic Volume Offset</text>
<text x="1172.0" y="609.0" font-size="7" fill="#9699a6" textLength="15.5" lengthAdjust="spacingAndGlyphs">-3 dB</text>
<rect x="1039.5" y="617.0" width="147.8" height="8.0" fill="#2a2c35" rx="1"/>
<rect x="1039.5" y="617.0" width="147.8" height="1.0" fill="#25262e"/>
<rect x="1039.5" y="617.0" width="95.8" height="8.0" fill="#6a77b8" rx="1"/>
<rect x="1135.6" y="617.2" width="6.4" height="7.6" fill="#474953" rx="1"/>
<rect x="1138.0" y="618.6" width="0.7" height="4.8" fill="#8a8c96"/>
<rect x="1139.5" y="618.6" width="0.7" height="4.8" fill="#8a8c96"/>
<rect x="1033.4" y="638.3" width="160.8" height="18.5" fill="url(#hg)"/>
<path d="M1038.6 646.3h3.2l-1.6 2.6z" fill="#1d1f27"/>
<text x="1046.2" y="651.1" font-size="8.2" fill="#1d1f27" font-weight="bold" textLength="23.5" lengthAdjust="spacingAndGlyphs">VENUE</text>
<rect x="1194.8" y="286.0" width="4.4" height="255.0" fill="#3d3f49" rx="2"/>
<rect x="0.0" y="646.5" width="1033.4" height="14.5" fill="#000"/>
<path d="M7.2 648.8H10.6L11.6 650H15.4V651.4H9.6L7.2 655.6Z" fill="#c8c8c8"/><path d="M10 652H17.2L14.8 656.2H7.6Z" fill="#c8c8c8"/>
<text x="25.2" y="656.2" font-size="8.8" fill="#d4d4d4" font-weight="bold" textLength="136.5" lengthAdjust="spacingAndGlyphs">Vienna Synchron Stage Stage A</text>
<text x="808.7" y="656.4" font-size="7.6" fill="#dcdcdc" font-weight="bold" textLength="79.1" lengthAdjust="spacingAndGlyphs">VENUE MAP CONTROLS:</text>
<path d="M903.5 646.2H901.4V660H914.6V646.2H912.5" fill="none" stroke="#e0e0e0" stroke-width="1"/>
<text x="903.2" y="657.0" font-size="9.4" fill="#e8e8e8" textLength="9.6" lengthAdjust="spacingAndGlyphs">3D</text>
<circle cx="936" cy="653.5" r="6.8" fill="#5a5c66"/><circle cx="937" cy="652.4" r="2.6" fill="none" stroke="#15161b" stroke-width="1.3"/><path d="M935 654.6L931.6 658" stroke="#15161b" stroke-width="1.6"/>
<rect x="958.5" y="647" width="13" height="13" fill="none" stroke="#d0d0d0" stroke-width="0.9" stroke-dasharray="1.6 1.2"/><circle cx="964.5" cy="651.8" r="2.5" fill="none" stroke="#e0e0e0" stroke-width="1.2"/><path d="M966.3 653.8L969.5 657.6" stroke="#e0e0e0" stroke-width="1.5"/><path d="M963.1 654L961.5 656.8" stroke="#e0e0e0" stroke-width="1"/>
<rect x="986.5" y="647" width="13" height="13" fill="none" stroke="#d0d0d0" stroke-width="0.9" stroke-dasharray="1.6 1.2"/><circle cx="992.5" cy="651.8" r="2.5" fill="none" stroke="#e0e0e0" stroke-width="1.2"/><path d="M994.3 653.8L997.5 657.6" stroke="#e0e0e0" stroke-width="1.5"/><path d="M991.1 654L989.5 656.8" stroke="#e0e0e0" stroke-width="1"/>
<circle cx="1020.5" cy="653.5" r="5.6" fill="none" stroke="#7c7e88" stroke-width="0.9"/><path d="M1020.5 646.5v3M1020.5 657.5v3M1013.5 653.5h3M1024.5 653.5h3" stroke="#7c7e88" stroke-width="0.9"/><circle cx="1021" cy="652.8" r="2.2" fill="none" stroke="#8a8c96" stroke-width="1.1"/><path d="M1019.4 654.4L1016.8 657" stroke="#8a8c96" stroke-width="1.3"/></svg>
</body></html>
